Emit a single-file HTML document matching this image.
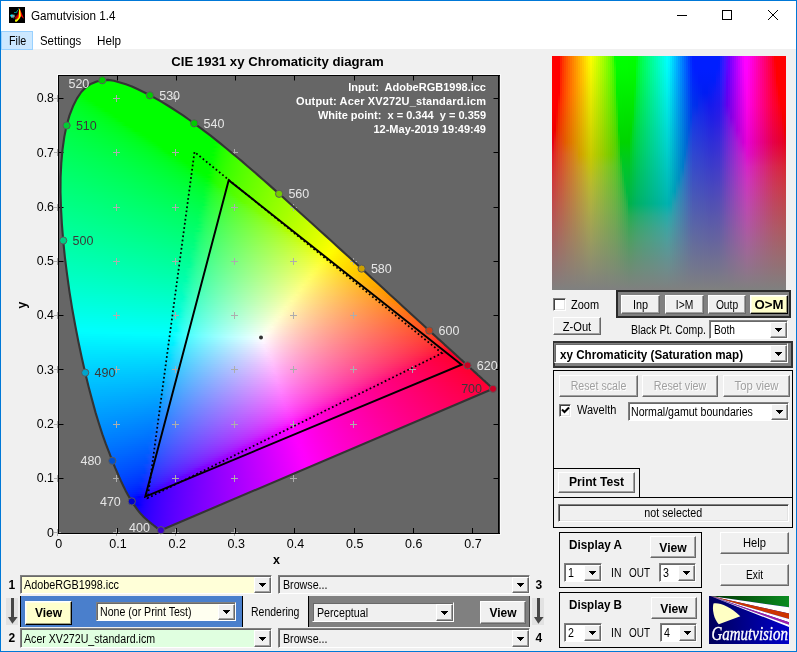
<!DOCTYPE html>
<html><head><meta charset="utf-8"><title>Gamutvision 1.4</title>
<style>
*{box-sizing:border-box;margin:0;padding:0}
html,body{width:797px;height:652px;overflow:hidden;background:#f0f0f0}
body{font-family:"Liberation Sans",sans-serif;font-size:11px;color:#000;position:relative}
#w{position:absolute;left:0;top:0;width:797px;height:652px;background:#f0f0f0;overflow:hidden;will-change:transform}
.a{position:absolute}
#w div,#w span,#w i,#w b,#w svg{position:absolute}
#tb{left:0;top:0;width:797px;height:31px;background:#fff}
#mb{left:0;top:31px;width:797px;height:18.2px;background:#fff}
.t{white-space:nowrap;line-height:1}
#fill{left:0;top:0;width:797px;height:652px;clip-path:polygon(160.9px 530.2px,160.8px 530.2px,160.8px 530.2px,160.7px 530.2px,160.7px 530.2px,160.6px 530.2px,160.6px 530.2px,160.5px 530.2px,160.5px 530.2px,160.4px 530.2px,160.3px 530.2px,160.2px 530.2px,160.2px 530.2px,160.1px 530.2px,160.0px 530.1px,159.9px 530.1px,159.7px 530.0px,159.6px 530.0px,159.4px 529.9px,159.3px 529.8px,159.1px 529.7px,158.9px 529.5px,158.7px 529.4px,158.5px 529.2px,158.3px 529.1px,158.0px 528.9px,157.7px 528.6px,157.4px 528.4px,157.1px 528.1px,156.7px 527.8px,156.4px 527.5px,156.0px 527.2px,155.6px 526.9px,155.2px 526.5px,154.7px 526.1px,154.2px 525.7px,153.6px 525.3px,153.0px 524.8px,152.4px 524.3px,151.7px 523.8px,151.0px 523.2px,150.2px 522.6px,149.4px 521.9px,148.6px 521.2px,147.7px 520.5px,146.7px 519.6px,145.7px 518.8px,144.6px 517.8px,143.5px 516.7px,142.4px 515.5px,141.2px 514.3px,139.9px 512.9px,138.5px 511.1px,137.0px 509.1px,135.4px 506.9px,133.6px 504.4px,131.8px 501.4px,129.8px 498.1px,127.7px 494.5px,125.5px 490.4px,123.2px 485.7px,120.7px 480.4px,118.1px 474.5px,115.3px 468.1px,112.3px 460.8px,109.2px 452.7px,105.8px 443.9px,102.4px 434.4px,99.0px 423.8px,95.5px 412.4px,92.1px 399.9px,88.6px 386.7px,85.2px 372.7px,81.8px 357.7px,78.4px 341.8px,75.2px 325.3px,72.2px 308.8px,69.5px 291.9px,67.1px 274.6px,64.9px 257.3px,63.2px 240.5px,61.9px 224.1px,61.0px 207.9px,60.5px 192.2px,60.6px 177.3px,61.3px 163.2px,62.5px 149.6px,64.3px 136.9px,66.6px 125.5px,69.5px 115.4px,73.0px 106.3px,77.0px 98.4px,81.3px 92.0px,86.1px 87.1px,91.3px 83.7px,96.7px 81.5px,102.3px 80.2px,108.0px 79.9px,113.9px 80.8px,119.9px 82.4px,125.9px 84.3px,131.9px 86.5px,137.9px 89.2px,144.0px 92.2px,149.9px 95.3px,155.6px 98.4px,161.3px 101.7px,166.9px 105.0px,172.5px 108.5px,178.0px 112.1px,183.4px 115.7px,188.8px 119.5px,194.2px 123.3px,199.6px 127.3px,204.9px 131.3px,210.3px 135.4px,215.6px 139.6px,220.9px 143.9px,226.2px 148.2px,231.5px 152.6px,236.8px 157.0px,242.1px 161.4px,247.3px 166.0px,252.6px 170.5px,257.9px 175.1px,263.2px 179.7px,268.5px 184.4px,273.8px 189.1px,279.1px 193.8px,284.4px 198.5px,289.6px 203.2px,294.9px 208.0px,300.1px 212.7px,305.4px 217.5px,310.7px 222.2px,315.9px 227.0px,321.1px 231.7px,326.3px 236.4px,331.4px 241.1px,336.5px 245.8px,341.6px 250.4px,346.7px 255.0px,351.7px 259.6px,356.6px 264.1px,361.6px 268.6px,366.4px 273.1px,371.2px 277.5px,376.0px 281.8px,380.7px 286.1px,385.3px 290.3px,389.8px 294.5px,394.3px 298.5px,398.7px 302.5px,402.9px 306.4px,407.1px 310.2px,411.1px 314.0px,415.0px 317.6px,418.8px 321.0px,422.4px 324.3px,425.9px 327.5px,429.3px 330.6px,432.6px 333.6px,435.8px 336.5px,438.9px 339.4px,441.9px 342.0px,444.6px 344.6px,447.3px 347.0px,449.8px 349.3px,452.3px 351.5px,454.6px 353.6px,456.7px 355.6px,458.8px 357.5px,460.7px 359.2px,462.6px 360.9px,464.3px 362.5px,465.9px 364.0px,467.5px 365.4px,468.9px 366.8px,470.3px 368.0px,471.6px 369.2px,472.9px 370.3px,474.0px 371.4px,475.1px 372.4px,476.2px 373.4px,477.2px 374.3px,478.1px 375.2px,479.1px 376.0px,479.9px 376.8px,480.8px 377.6px,481.6px 378.3px,482.3px 379.0px,483.1px 379.7px,483.7px 380.3px,484.4px 380.9px,485.0px 381.4px,485.6px 381.9px,486.1px 382.4px,486.6px 382.9px,487.1px 383.3px,487.5px 383.7px,487.9px 384.1px,488.3px 384.4px,488.6px 384.7px,488.9px 385.0px,489.2px 385.3px,489.5px 385.6px,489.8px 385.8px,490.0px 386.0px,490.2px 386.2px,490.5px 386.5px,490.9px 386.8px,491.2px 387.1px,491.4px 387.3px,491.7px 387.5px,491.9px 387.7px,492.1px 387.9px,492.3px 388.1px,492.5px 388.3px,492.7px 388.5px,492.9px 388.7px,493.0px 388.8px)}
#fill i{display:block;height:2px}
#sq i{display:block;top:0;height:234px}
.btn{background:#f0f0f0;border:1px solid;border-color:#fff #696969 #696969 #fff;box-shadow:inset -1px -1px 0 #a0a0a0,inset 1px 1px 0 #f0f0f0;text-align:center;white-space:nowrap}
.btn.y{background:#ffffcc;border-color:#fff #000 #000 #fff;box-shadow:inset -1px -1px 0 #a0a080,inset 1px 1px 0 #ffffe8}
.sunk{border:1px solid;border-color:#808080 #fff #fff #808080;box-shadow:inset 1px 1px 0 #404040,inset -1px -1px 0 #e3e3e3;background:#fff}
.dd{border:1px solid;border-color:#808080 #fff #fff #808080;box-shadow:inset 1px 1px 0 #696969;background:#fff;white-space:nowrap}
.dd .ar{right:0;top:1px;bottom:0;width:17px;background:#f0f0f0;border:1px solid;border-color:#fff #696969 #696969 #fff;box-shadow:inset -1px -1px 0 #a0a0a0}
.dd .ar:after{content:"";position:absolute;left:4px;top:50%;margin-top:-2px;width:7px;height:4px;background:linear-gradient(#000,#000) 0 0/7px 1px no-repeat,linear-gradient(#000,#000) 1px 1px/5px 1px no-repeat,linear-gradient(#000,#000) 2px 2px/3px 1px no-repeat,linear-gradient(#000,#000) 3px 3px/1px 1px no-repeat}
.dis{color:#a0a0a0;text-shadow:1px 1px 0 #fff}
.fr{border:1px solid #000}
</style></head>
<body><div id="w">
<div id="tb"></div><div id="mb"></div>
<svg style="left:9px;top:7px" width="16" height="16" viewBox="0 0 16 16"><rect width="16" height="16" fill="#000"/><path d="M9.6 3.8L9 7 7 9 5.2 11.3 7.6 12 9.6 9Z" fill="#a00000"/><path d="M10.3 .8L12.2 5 15 11.8 13.6 10.8 12 9 11 11 9 12.2 7 11.6 9 9 9.6 5Z" fill="#f00"/><path d="M10 2L11 2.5 11.6 6 11.8 9 10.6 11.5 8.5 14 7 15 6 14.2 6.2 12.6 8 12.2 9.6 10.4 10 7Z" fill="#ff0"/><path d="M5 5.2h2.2v.9H5zM7 4.5h1.2v.9H7zM8 3.3h1v1H8zM9 1.5h1.1v1H9z" fill="#00b4b4"/><ellipse cx="3.7" cy="9.1" rx="2.2" ry="1.6" fill="#989898"/><ellipse cx="2.5" cy="8.5" rx="1.3" ry=".9" fill="#00e8ff"/><path d="M2 10.2h1v.8H2zM4 10.6h1v.7H4zM4.6 7.4h.9v.7h-.9z" fill="#00a8b0"/></svg>
<span class="t" style="left:30.5px;top:10px;font-size:12px;transform-origin:0 0;transform:scaleX(0.975);">Gamutvision 1.4</span>
<svg style="left:670px;top:0" width="126" height="30" viewBox="-20 0 126 30"><g stroke="#000" stroke-width="1" fill="none"><path d="M-13 15.5h10"/><rect x="32.5" y="10.5" width="9" height="9"/><path d="M78 10l10 10M88 10l-10 10"/></g></svg>
<div style="left:1px;top:31px;width:32px;height:18.5px;background:#cce8ff;border:1px solid #99d1ff"></div>
<span class="t" style="left:8.5px;top:34.8px;font-size:12px;transform-origin:0 0;transform:scaleX(0.895);">File</span>
<span class="t" style="left:40.3px;top:34.8px;font-size:12px;transform-origin:0 0;transform:scaleX(0.952);">Settings</span>
<span class="t" style="left:96.6px;top:34.8px;font-size:12px;transform-origin:0 0;transform:scaleX(0.976);">Help</span>
<div style="left:58px;top:75px;width:442px;height:459px;background:#666;box-shadow:0 0 0 1px #fbfbfb"></div>
<div id="fill"><i style="left:105px;top:78px;width:5px;background:linear-gradient(90deg,#00ff00,#00ff00)"></i><i style="left:94px;top:80px;width:26px;background:linear-gradient(90deg,#00ff00,#00ff00,#00ff00,#00ff00,#00ff00)"></i><i style="left:89px;top:82px;width:37px;background:linear-gradient(90deg,#00ff00,#00ff00,#00ff00,#00ff00,#00ff00,#00ff00,#00ff00)"></i><i style="left:86px;top:84px;width:46px;background:linear-gradient(90deg,#00ff00,#00ff00,#00ff00,#00ff00,#00ff00,#00ff00,#00ff00,#00ff00,#00ff00)"></i><i style="left:84px;top:86px;width:53px;background:linear-gradient(90deg,#00ff00,#00ff00,#00ff00,#00ff00,#00ff00,#00ff00,#00ff00,#00ff00,#00ff00,#00ff00)"></i><i style="left:82px;top:88px;width:59px;background:linear-gradient(90deg,#00ff00,#00ff00,#00ff00,#00ff00,#00ff00,#00ff00,#00ff00,#00ff00,#00ff00,#00ff00,#00ff00)"></i><i style="left:80px;top:90px;width:65px;background:linear-gradient(90deg,#00ff00,#00ff00,#00ff00,#00ff00,#00ff00,#00ff00,#00ff00,#00ff00,#00ff00,#00ff00,#00ff00,#00ff00)"></i><i style="left:79px;top:92px;width:70px;background:linear-gradient(90deg,#00ff00,#00ff00,#00ff00,#00ff00,#00ff00,#00ff00,#00ff00,#00ff00,#00ff00,#00ff00,#00ff00,#00ff00,#00ff00)"></i><i style="left:77px;top:94px;width:76px;background:linear-gradient(90deg,#00ff0d,#00ff00,#00ff00,#00ff00,#00ff00,#00ff00,#00ff00,#00ff00,#00ff00,#00ff00,#00ff00,#00ff00,#00ff00,#00ff00)"></i><i style="left:76px;top:96px;width:80px;background:linear-gradient(90deg,#00ff14,#00ff07,#00ff00,#00ff00,#00ff00,#00ff00,#00ff00,#00ff00,#00ff00,#00ff00,#00ff00,#00ff00,#00ff00,#00ff00)"></i><i style="left:75px;top:98px;width:85px;background:linear-gradient(90deg,#00ff1a,#00ff11,#00ff00,#00ff00,#00ff00,#00ff00,#00ff00,#00ff00,#00ff00,#00ff00,#00ff00,#00ff00,#00ff00,#00ff00,#00ff00)"></i><i style="left:74px;top:100px;width:89px;background:linear-gradient(90deg,#00ff1e,#00ff17,#00ff0e,#00ff00,#00ff00,#00ff00,#00ff00,#00ff00,#00ff00,#00ff00,#00ff00,#00ff00,#00ff00,#00ff00,#00ff00,#00ff00)"></i><i style="left:73px;top:102px;width:94px;background:linear-gradient(90deg,#00ff22,#00ff1c,#00ff15,#00ff09,#00ff00,#00ff00,#00ff00,#00ff00,#00ff00,#00ff00,#00ff00,#00ff00,#00ff00,#00ff00,#00ff00,#00ff00,#00ff00)"></i><i style="left:72px;top:104px;width:98px;background:linear-gradient(90deg,#00ff26,#00ff20,#00ff1a,#00ff11,#00ff00,#00ff00,#00ff00,#00ff00,#00ff00,#00ff00,#00ff00,#00ff00,#00ff00,#00ff00,#00ff00,#00ff00,#00ff00)"></i><i style="left:71px;top:106px;width:102px;background:linear-gradient(90deg,#00ff2a,#00ff25,#00ff1f,#00ff18,#00ff0e,#00ff00,#00ff00,#00ff00,#00ff00,#00ff00,#00ff00,#00ff00,#00ff00,#00ff00,#00ff00,#00ff00,#00ff00,#00ff00)"></i><i style="left:70px;top:108px;width:106px;background:linear-gradient(90deg,#00ff2d,#00ff28,#00ff23,#00ff1d,#00ff16,#00ff0a,#00ff00,#00ff00,#00ff00,#00ff00,#00ff00,#00ff00,#00ff00,#00ff00,#00ff00,#00ff00,#00ff00,#00ff00,#00ff00)"></i><i style="left:69px;top:110px;width:110px;background:linear-gradient(90deg,#00ff30,#00ff2c,#00ff27,#00ff21,#00ff1a,#00ff11,#00ff00,#00ff00,#00ff00,#00ff00,#00ff00,#00ff00,#00ff00,#00ff00,#00ff00,#00ff00,#00ff00,#00ff00,#00ff00)"></i><i style="left:69px;top:112px;width:113px;background:linear-gradient(90deg,#00ff32,#00ff2e,#00ff2a,#00ff24,#00ff1e,#00ff17,#00ff0d,#00ff00,#00ff00,#00ff00,#00ff00,#00ff00,#00ff00,#00ff00,#00ff00,#00ff00,#00ff00,#00ff00,#00ff00,#00ff00)"></i><i style="left:68px;top:114px;width:117px;background:linear-gradient(90deg,#00ff35,#00ff31,#00ff2d,#00ff28,#00ff23,#00ff1d,#00ff15,#00ff09,#00ff00,#00ff00,#00ff00,#00ff00,#00ff00,#00ff00,#00ff00,#00ff00,#00ff00,#00ff00,#00ff00,#00ff00,#00ff00)"></i><i style="left:67px;top:116px;width:121px;background:linear-gradient(90deg,#00ff38,#00ff34,#00ff30,#00ff2b,#00ff26,#00ff20,#00ff19,#00ff10,#00ff00,#00ff00,#00ff00,#00ff00,#00ff00,#00ff00,#00ff00,#00ff00,#00ff00,#00ff00,#00ff00,#00ff00,#00ff00)"></i><i style="left:67px;top:118px;width:124px;background:linear-gradient(90deg,#00ff3a,#00ff36,#00ff33,#00ff2e,#00ff2a,#00ff24,#00ff1e,#00ff17,#00ff0c,#00ff00,#00ff00,#00ff00,#00ff00,#00ff00,#00ff00,#00ff00,#00ff00,#00ff00,#00ff00,#00ff00,#00ff00,#00ff00)"></i><i style="left:66px;top:120px;width:128px;background:linear-gradient(90deg,#00ff3d,#00ff39,#00ff35,#00ff31,#00ff2c,#00ff27,#00ff22,#00ff1b,#00ff11,#00ff00,#00ff00,#00ff00,#00ff00,#00ff00,#00ff00,#00ff00,#00ff00,#00ff00,#00ff00,#00ff00,#00ff00,#00ff00)"></i><i style="left:66px;top:122px;width:131px;background:linear-gradient(90deg,#00ff3f,#00ff3b,#00ff38,#00ff34,#00ff2f,#00ff2b,#00ff26,#00ff1f,#00ff18,#00ff0e,#00ff00,#00ff00,#00ff00,#00ff00,#00ff00,#00ff00,#00ff00,#00ff00,#00ff00,#00ff00,#00ff00,#00ff00,#00ff00)"></i><i style="left:65px;top:124px;width:134px;background:linear-gradient(90deg,#00ff41,#00ff3e,#00ff3a,#00ff36,#00ff32,#00ff2e,#00ff29,#00ff23,#00ff1c,#00ff13,#00ff00,#00ff00,#00ff00,#00ff00,#00ff00,#00ff00,#00ff00,#00ff00,#00ff00,#00ff00,#00ff00,#00ff00,#00ff00)"></i><i style="left:65px;top:126px;width:137px;background:linear-gradient(90deg,#00ff43,#00ff40,#00ff3d,#00ff39,#00ff35,#00ff31,#00ff2c,#00ff27,#00ff21,#00ff1a,#00ff10,#00ff00,#00ff00,#00ff00,#00ff00,#00ff00,#00ff00,#00ff00,#00ff00,#00ff00,#00ff00,#00ff00,#00ff00,#00ff00)"></i><i style="left:64px;top:128px;width:141px;background:linear-gradient(90deg,#00ff46,#00ff43,#00ff3f,#00ff3c,#00ff38,#00ff34,#00ff30,#00ff2b,#00ff26,#00ff20,#00ff18,#00ff0e,#00ff00,#00ff00,#00ff00,#00ff00,#00ff00,#00ff00,#00ff00,#00ff00,#00ff00,#00ff00,#00ff00,#00ff00,#00ff00)"></i><i style="left:64px;top:130px;width:143px;background:linear-gradient(90deg,#00ff47,#00ff44,#00ff41,#00ff3e,#00ff3a,#00ff36,#00ff32,#00ff2d,#00ff28,#00ff22,#00ff1c,#00ff12,#00ff00,#00ff00,#00ff00,#00ff00,#00ff00,#00ff00,#00ff00,#00ff00,#00ff00,#00ff00,#00ff00,#00ff00,#00ff00)"></i><i style="left:63px;top:132px;width:147px;background:linear-gradient(90deg,#00ff4a,#00ff47,#00ff44,#00ff40,#00ff3d,#00ff39,#00ff34,#00ff30,#00ff2b,#00ff25,#00ff1f,#00ff16,#00ff09,#00ff00,#00ff00,#00ff00,#00ff00,#00ff00,#00ff00,#00ff00,#00ff00,#00ff00,#00ff00,#00ff00,#00ff00)"></i><i style="left:63px;top:134px;width:149px;background:linear-gradient(90deg,#00ff4c,#00ff49,#00ff46,#00ff42,#00ff3f,#00ff3b,#00ff38,#00ff33,#00ff2f,#00ff2a,#00ff24,#00ff1d,#00ff15,#00ff05,#00ff00,#00ff00,#00ff00,#00ff00,#00ff00,#00ff00,#00ff00,#00ff00,#00ff00,#00ff00,#00ff00,#00ff00)"></i><i style="left:63px;top:136px;width:152px;background:linear-gradient(90deg,#00ff4d,#00ff4a,#00ff47,#00ff44,#00ff41,#00ff3d,#00ff39,#00ff35,#00ff31,#00ff2c,#00ff26,#00ff1f,#00ff17,#00ff0b,#00ff00,#00ff00,#00ff00,#00ff00,#00ff00,#00ff00,#00ff00,#00ff00,#00ff00,#00ff00,#00ff00,#00ff00)"></i><i style="left:62px;top:138px;width:156px;background:linear-gradient(90deg,#00ff50,#00ff4d,#00ff4a,#00ff47,#00ff44,#00ff40,#00ff3d,#00ff39,#00ff34,#00ff30,#00ff2b,#00ff25,#00ff1e,#00ff16,#00ff08,#00ff00,#00ff00,#00ff00,#00ff00,#00ff00,#00ff00,#00ff00,#00ff00,#00ff00,#00ff00,#00ff00,#00ff00)"></i><i style="left:62px;top:140px;width:158px;background:linear-gradient(90deg,#00ff51,#00ff4f,#00ff4c,#00ff49,#00ff45,#00ff42,#00ff3e,#00ff3b,#00ff36,#00ff32,#00ff2d,#00ff27,#00ff21,#00ff19,#00ff0e,#00ff00,#00ff00,#00ff00,#00ff00,#00ff00,#00ff00,#00ff00,#00ff00,#00ff00,#00ff00,#00ff00,#13ff00)"></i><i style="left:62px;top:142px;width:161px;background:linear-gradient(90deg,#00ff53,#00ff50,#00ff4e,#00ff4b,#00ff48,#00ff44,#00ff41,#00ff3d,#00ff39,#00ff35,#00ff31,#00ff2c,#00ff26,#00ff1f,#00ff17,#00ff0a,#00ff00,#00ff00,#00ff00,#00ff00,#00ff00,#00ff00,#00ff00,#00ff00,#00ff00,#00ff00,#00ff00,#1fff00)"></i><i style="left:62px;top:144px;width:163px;background:linear-gradient(90deg,#00ff55,#00ff52,#00ff4f,#00ff4c,#00ff49,#00ff46,#00ff43,#00ff3f,#00ff3b,#00ff37,#00ff33,#00ff2e,#00ff28,#00ff22,#00ff1a,#00ff0f,#00ff00,#00ff00,#00ff00,#00ff00,#00ff00,#00ff00,#00ff00,#00ff00,#00ff00,#00ff00,#12ff00,#26ff00)"></i><i style="left:61px;top:146px;width:166px;background:linear-gradient(90deg,#00ff57,#00ff54,#00ff52,#00ff4f,#00ff4c,#00ff49,#00ff46,#00ff42,#00ff3f,#00ff3b,#00ff37,#00ff32,#00ff2d,#00ff28,#00ff22,#00ff1a,#00ff0f,#00ff00,#00ff00,#00ff00,#00ff00,#00ff00,#00ff00,#00ff00,#00ff00,#00ff00,#00ff00,#1cff00,#2cff00)"></i><i style="left:61px;top:148px;width:169px;background:linear-gradient(90deg,#00ff59,#00ff56,#00ff53,#00ff51,#00ff4e,#00ff4b,#00ff48,#00ff44,#00ff41,#00ff3d,#00ff39,#00ff34,#00ff2f,#00ff2a,#00ff24,#00ff1c,#00ff12,#00ff00,#00ff00,#00ff00,#00ff00,#00ff00,#00ff00,#00ff00,#00ff00,#00ff00,#12ff00,#26ff00,#34ff00)"></i><i style="left:61px;top:150px;width:171px;background:linear-gradient(90deg,#00ff5a,#00ff58,#00ff55,#00ff52,#00ff4f,#00ff4c,#00ff49,#00ff46,#00ff42,#00ff3f,#00ff3b,#00ff36,#00ff31,#00ff2c,#00ff26,#00ff1f,#00ff16,#00ff05,#00ff00,#00ff00,#00ff00,#00ff00,#00ff00,#00ff00,#00ff00,#00ff00,#1bff00,#2cff00,#39ff00)"></i><i style="left:61px;top:152px;width:174px;background:linear-gradient(90deg,#00ff5c,#00ff5a,#00ff57,#00ff54,#00ff52,#00ff4f,#00ff4c,#00ff48,#00ff45,#00ff41,#00ff3e,#00ff3a,#00ff35,#00ff30,#00ff2b,#00ff25,#00ff1d,#00ff13,#00ff00,#00ff00,#00ff00,#00ff00,#00ff00,#00ff00,#00ff00,#00ff00,#12ff00,#26ff00,#34ff00,#3fff00)"></i><i style="left:60px;top:154px;width:177px;background:linear-gradient(90deg,#00ff5e,#00ff5c,#00ff59,#00ff57,#00ff54,#00ff51,#00ff4e,#00ff4b,#00ff48,#00ff45,#00ff41,#00ff3d,#00ff39,#00ff35,#00ff30,#00ff2b,#00ff24,#00ff1d,#00ff13,#00ff00,#00ff00,#00ff00,#00ff00,#00ff00,#00ff00,#00ff00,#00ff00,#1dff00,#2dff00,#39ff00,#44ff00)"></i><i style="left:60px;top:156px;width:179px;background:linear-gradient(90deg,#00ff60,#00ff5d,#00ff5b,#00ff58,#00ff56,#00ff53,#00ff50,#00ff4d,#00ff4a,#00ff47,#00ff43,#00ff3f,#00ff3b,#00ff37,#00ff32,#00ff2d,#00ff27,#00ff20,#00ff17,#00ff08,#00ff00,#00ff00,#00ff00,#00ff00,#00ff00,#00ff00,#0cff00,#23ff00,#32ff00,#3eff00,#48ff00)"></i><i style="left:60px;top:158px;width:182px;background:linear-gradient(90deg,#00ff61,#00ff5f,#00ff5d,#00ff5a,#00ff57,#00ff55,#00ff52,#00ff4f,#00ff4c,#00ff48,#00ff45,#00ff41,#00ff3d,#00ff38,#00ff34,#00ff2e,#00ff28,#00ff22,#00ff19,#00ff0c,#00ff00,#00ff00,#00ff00,#00ff00,#00ff00,#00ff00,#1aff00,#2cff00,#39ff00,#44ff00,#4eff00)"></i><i style="left:60px;top:160px;width:184px;background:linear-gradient(90deg,#00ff63,#00ff61,#00ff5e,#00ff5c,#00ff59,#00ff57,#00ff54,#00ff51,#00ff4e,#00ff4b,#00ff48,#00ff44,#00ff40,#00ff3c,#00ff38,#00ff33,#00ff2e,#00ff28,#00ff21,#00ff18,#00ff0b,#00ff00,#00ff00,#00ff00,#00ff00,#00ff00,#0cff00,#24ff00,#32ff00,#3eff00,#48ff00,#52ff00)"></i><i style="left:60px;top:162px;width:187px;background:linear-gradient(90deg,#00ff65,#00ff62,#00ff60,#00ff5e,#00ff5b,#00ff58,#00ff56,#00ff53,#00ff50,#00ff4c,#00ff49,#00ff46,#00ff42,#00ff3e,#00ff39,#00ff35,#00ff2f,#00ff2a,#00ff23,#00ff1a,#00ff0e,#00ff00,#00ff00,#00ff00,#00ff00,#00ff00,#1aff00,#2cff00,#39ff00,#44ff00,#4eff00,#57ff00)"></i><i style="left:60px;top:164px;width:189px;background:linear-gradient(90deg,#00ff66,#00ff64,#00ff62,#00ff5f,#00ff5d,#00ff5a,#00ff58,#00ff55,#00ff52,#00ff4f,#00ff4c,#00ff49,#00ff45,#00ff41,#00ff3d,#00ff39,#00ff34,#00ff2f,#00ff29,#00ff22,#00ff1a,#00ff0d,#00ff00,#00ff00,#00ff00,#00ff00,#0dff00,#24ff00,#33ff00,#3fff00,#49ff00,#52ff00,#5bff00)"></i><i style="left:60px;top:166px;width:191px;background:linear-gradient(90deg,#00ff68,#00ff66,#00ff63,#00ff61,#00ff5f,#00ff5c,#00ff59,#00ff57,#00ff54,#00ff51,#00ff4e,#00ff4a,#00ff47,#00ff43,#00ff3f,#00ff3b,#00ff36,#00ff31,#00ff2b,#00ff25,#00ff1d,#00ff12,#00ff00,#00ff00,#00ff00,#00ff00,#18ff00,#2aff00,#38ff00,#43ff00,#4dff00,#56ff00,#5fff00)"></i><i style="left:59px;top:168px;width:195px;background:linear-gradient(90deg,#00ff6a,#00ff68,#00ff65,#00ff63,#00ff61,#00ff5e,#00ff5b,#00ff59,#00ff56,#00ff53,#00ff50,#00ff4c,#00ff49,#00ff45,#00ff41,#00ff3d,#00ff38,#00ff33,#00ff2d,#00ff27,#00ff1f,#00ff15,#00ff00,#00ff00,#00ff00,#00ff00,#21ff00,#31ff00,#3dff00,#48ff00,#52ff00,#5bff00,#64ff00)"></i><i style="left:59px;top:170px;width:197px;background:linear-gradient(90deg,#00ff6b,#00ff69,#00ff67,#00ff65,#00ff63,#00ff60,#00ff5e,#00ff5b,#00ff58,#00ff55,#00ff52,#00ff4f,#00ff4c,#00ff48,#00ff45,#00ff41,#00ff3c,#00ff38,#00ff33,#00ff2d,#00ff26,#00ff1f,#00ff15,#00ff00,#00ff00,#00ff00,#17ff00,#2aff00,#38ff00,#43ff00,#4dff00,#57ff00,#5fff00,#67ff00)"></i><i style="left:59px;top:172px;width:199px;background:linear-gradient(90deg,#00ff6d,#00ff6b,#00ff69,#00ff67,#00ff64,#00ff62,#00ff5f,#00ff5d,#00ff5a,#00ff57,#00ff54,#00ff51,#00ff4e,#00ff4a,#00ff46,#00ff42,#00ff3e,#00ff3a,#00ff35,#00ff2f,#00ff29,#00ff21,#00ff18,#00ff08,#00ff00,#00ff00,#1fff00,#2fff00,#3cff00,#47ff00,#51ff00,#5aff00,#63ff00,#6bff00)"></i><i style="left:59px;top:174px;width:201px;background:linear-gradient(90deg,#00ff6f,#00ff6d,#00ff6b,#00ff68,#00ff66,#00ff64,#00ff61,#00ff5f,#00ff5c,#00ff59,#00ff57,#00ff54,#00ff50,#00ff4d,#00ff4a,#00ff46,#00ff42,#00ff3e,#00ff39,#00ff34,#00ff2f,#00ff28,#00ff21,#00ff18,#00ff08,#00ff00,#15ff00,#29ff00,#36ff00,#42ff00,#4cff00,#56ff00,#5fff00,#67ff00,#6fff00)"></i><i style="left:59px;top:176px;width:204px;background:linear-gradient(90deg,#00ff70,#00ff6e,#00ff6c,#00ff6a,#00ff68,#00ff65,#00ff63,#00ff60,#00ff5e,#00ff5b,#00ff58,#00ff55,#00ff52,#00ff4f,#00ff4b,#00ff48,#00ff44,#00ff3f,#00ff3b,#00ff36,#00ff30,#00ff2a,#00ff23,#00ff1a,#00ff0b,#00ff00,#1fff00,#30ff00,#3dff00,#48ff00,#52ff00,#5bff00,#63ff00,#6cff00,#74ff00)"></i><i style="left:59px;top:178px;width:206px;background:linear-gradient(90deg,#00ff72,#00ff70,#00ff6e,#00ff6c,#00ff69,#00ff67,#00ff65,#00ff62,#00ff5f,#00ff5d,#00ff5a,#00ff57,#00ff54,#00ff50,#00ff4d,#00ff49,#00ff45,#00ff41,#00ff3d,#00ff38,#00ff32,#00ff2c,#00ff25,#00ff1d,#00ff10,#0dff00,#25ff00,#35ff00,#41ff00,#4cff00,#55ff00,#5fff00,#67ff00,#6fff00,#77ff00)"></i><i style="left:59px;top:180px;width:208px;background:linear-gradient(90deg,#00ff74,#00ff72,#00ff6f,#00ff6d,#00ff6b,#00ff69,#00ff67,#00ff64,#00ff62,#00ff5f,#00ff5c,#00ff59,#00ff57,#00ff53,#00ff50,#00ff4d,#00ff49,#00ff45,#00ff41,#00ff3c,#00ff38,#00ff32,#00ff2c,#00ff25,#00ff1c,#00ff10,#1dff00,#2eff00,#3cff00,#47ff00,#51ff00,#5aff00,#63ff00,#6bff00,#73ff00,#7bff00)"></i><i style="left:59px;top:182px;width:211px;background:linear-gradient(90deg,#00ff75,#00ff73,#00ff71,#00ff6f,#00ff6d,#00ff6b,#00ff68,#00ff66,#00ff63,#00ff61,#00ff5e,#00ff5b,#00ff58,#00ff55,#00ff52,#00ff4e,#00ff4a,#00ff47,#00ff42,#00ff3e,#00ff39,#00ff34,#00ff2e,#00ff27,#00ff1e,#0eff13,#26ff00,#35ff00,#41ff00,#4cff00,#56ff00,#5fff00,#68ff00,#70ff00,#78ff00,#7fff00)"></i><i style="left:59px;top:184px;width:213px;background:linear-gradient(90deg,#00ff77,#00ff75,#00ff73,#00ff71,#00ff6f,#00ff6c,#00ff6a,#00ff68,#00ff65,#00ff63,#00ff60,#00ff5e,#00ff5b,#00ff58,#00ff55,#00ff51,#00ff4e,#00ff4a,#00ff46,#00ff42,#00ff3e,#00ff39,#00ff33,#00ff2d,#00ff26,#00ff1e,#1eff13,#2fff00,#3cff00,#48ff00,#52ff00,#5bff00,#64ff00,#6cff00,#74ff00,#7cff00,#83ff00)"></i><i style="left:59px;top:186px;width:215px;background:linear-gradient(90deg,#00ff78,#00ff76,#00ff74,#00ff72,#00ff70,#00ff6e,#00ff6c,#00ff6a,#00ff67,#00ff65,#00ff62,#00ff5f,#00ff5c,#00ff59,#00ff56,#00ff53,#00ff50,#00ff4c,#00ff48,#00ff44,#00ff40,#00ff3b,#00ff36,#00ff30,#00ff29,#0aff21,#25ff16,#34ff00,#40ff00,#4bff00,#55ff00,#5fff00,#67ff00,#6fff00,#77ff00,#7fff00,#87ff00)"></i><i style="left:59px;top:188px;width:217px;background:linear-gradient(90deg,#00ff7a,#00ff78,#00ff76,#00ff74,#00ff72,#00ff70,#00ff6e,#00ff6b,#00ff69,#00ff66,#00ff64,#00ff61,#00ff5e,#00ff5b,#00ff58,#00ff55,#00ff51,#00ff4e,#00ff4a,#00ff46,#00ff41,#00ff3d,#00ff38,#00ff32,#00ff2b,#15ff23,#2aff1a,#38ff0a,#45ff00,#4fff00,#59ff00,#62ff00,#6bff00,#73ff00,#7bff00,#83ff00,#8aff00)"></i><i style="left:59px;top:190px;width:220px;background:linear-gradient(90deg,#00ff7c,#00ff7a,#00ff78,#00ff76,#00ff74,#00ff72,#00ff6f,#00ff6d,#00ff6b,#00ff68,#00ff66,#00ff63,#00ff61,#00ff5e,#00ff5b,#00ff58,#00ff54,#00ff51,#00ff4d,#00ff4a,#00ff45,#00ff41,#00ff3c,#00ff37,#00ff31,#0cff2a,#25ff22,#35ff18,#41ff06,#4cff00,#56ff00,#5fff00,#68ff00,#70ff00,#78ff00,#80ff00,#88ff00,#8fff00)"></i><i style="left:59px;top:192px;width:222px;background:linear-gradient(90deg,#00ff7d,#00ff7b,#00ff79,#00ff77,#00ff75,#00ff73,#00ff71,#00ff6f,#00ff6d,#00ff6a,#00ff68,#00ff65,#00ff62,#00ff5f,#00ff5d,#00ff59,#00ff56,#00ff53,#00ff4f,#00ff4b,#00ff47,#00ff43,#00ff3e,#00ff39,#00ff33,#16ff2d,#2bff25,#39ff1c,#45ff0d,#50ff00,#5aff00,#63ff00,#6cff00,#74ff00,#7cff00,#84ff00,#8bff00,#92ff00)"></i><i style="left:59px;top:194px;width:224px;background:linear-gradient(90deg,#00ff7f,#00ff7d,#00ff7b,#00ff79,#00ff77,#00ff75,#00ff73,#00ff71,#00ff6e,#00ff6c,#00ff69,#00ff67,#00ff64,#00ff61,#00ff5e,#00ff5b,#00ff58,#00ff55,#00ff51,#00ff4d,#00ff49,#00ff45,#00ff40,#00ff3b,#00ff35,#1eff2f,#30ff28,#3dff1f,#49ff12,#54ff00,#5dff00,#66ff00,#6fff00,#77ff00,#7fff00,#87ff00,#8fff00,#96ff00)"></i><i style="left:59px;top:196px;width:226px;background:linear-gradient(90deg,#00ff80,#00ff7f,#00ff7d,#00ff7b,#00ff79,#00ff77,#00ff75,#00ff73,#00ff70,#00ff6e,#00ff6c,#00ff69,#00ff67,#00ff64,#00ff61,#00ff5e,#00ff5b,#00ff58,#00ff54,#00ff51,#00ff4d,#00ff49,#00ff45,#00ff40,#00ff3b,#14ff35,#2aff2f,#38ff28,#45ff1f,#4fff12,#59ff00,#62ff00,#6bff00,#74ff00,#7cff00,#83ff00,#8bff00,#92ff00,#9aff00)"></i><i style="left:59px;top:198px;width:229px;background:linear-gradient(90deg,#00ff82,#00ff80,#00ff7e,#00ff7c,#00ff7a,#00ff78,#00ff76,#00ff74,#00ff72,#00ff70,#00ff6d,#00ff6b,#00ff68,#00ff65,#00ff63,#00ff60,#00ff5d,#00ff59,#00ff56,#00ff52,#00ff4f,#00ff4a,#00ff46,#00ff41,#00ff3c,#1fff37,#30ff30,#3eff29,#4aff20,#54ff14,#5eff00,#67ff00,#70ff00,#78ff00,#80ff00,#88ff00,#90ff00,#97ff00,#9eff00)"></i><i style="left:59px;top:200px;width:231px;background:linear-gradient(90deg,#00ff84,#00ff82,#00ff80,#00ff7e,#00ff7c,#00ff7a,#00ff78,#00ff76,#00ff74,#00ff71,#00ff6f,#00ff6c,#00ff6a,#00ff67,#00ff64,#00ff61,#00ff5e,#00ff5b,#00ff58,#00ff54,#00ff50,#00ff4c,#00ff48,#00ff43,#07ff3e,#25ff39,#35ff33,#42ff2b,#4eff23,#58ff18,#62ff00,#6bff00,#73ff00,#7cff00,#84ff00,#8bff00,#93ff00,#9bff00,#a2ff00)"></i><i style="left:59px;top:202px;width:233px;background:linear-gradient(90deg,#00ff85,#00ff83,#00ff82,#00ff80,#00ff7e,#00ff7c,#00ff7a,#00ff78,#00ff76,#00ff73,#00ff71,#00ff6f,#00ff6c,#00ff6a,#00ff67,#00ff64,#00ff61,#00ff5e,#00ff5b,#00ff58,#00ff54,#00ff50,#00ff4c,#00ff48,#00ff43,#1dff3e,#30ff39,#3dff33,#49ff2c,#54ff23,#5eff18,#67ff01,#70ff00,#78ff00,#80ff00,#88ff00,#90ff00,#97ff00,#9eff00,#a6ff00)"></i><i style="left:59px;top:204px;width:235px;background:linear-gradient(90deg,#00ff87,#00ff85,#00ff83,#00ff81,#00ff80,#00ff7e,#00ff7c,#00ff7a,#00ff77,#00ff75,#00ff73,#00ff70,#00ff6e,#00ff6b,#00ff69,#00ff66,#00ff63,#00ff60,#00ff5d,#00ff59,#00ff56,#00ff52,#00ff4e,#00ff4a,#00ff45,#23ff40,#34ff3b,#41ff35,#4dff2e,#57ff26,#61ff1c,#6aff0c,#73ff00,#7bff00,#83ff00,#8bff00,#93ff00,#9bff00,#a2ff00,#a9ff00)"></i><i style="left:59px;top:206px;width:237px;background:linear-gradient(90deg,#00ff88,#00ff87,#00ff85,#00ff83,#00ff81,#00ff80,#00ff7e,#00ff7c,#00ff79,#00ff77,#00ff75,#00ff73,#00ff70,#00ff6e,#00ff6b,#00ff69,#00ff66,#00ff63,#00ff60,#00ff5d,#00ff5a,#00ff56,#00ff52,#00ff4e,#00ff4a,#1cff45,#2fff40,#3dff3b,#49ff35,#54ff2e,#5dff26,#67ff1c,#6fff0d,#78ff00,#80ff00,#88ff00,#90ff00,#97ff00,#9fff00,#a6ff00,#adff00)"></i><i style="left:59px;top:208px;width:240px;background:linear-gradient(90deg,#00ff8a,#00ff88,#00ff87,#00ff85,#00ff83,#00ff81,#00ff7f,#00ff7d,#00ff7b,#00ff79,#00ff77,#00ff74,#00ff72,#00ff70,#00ff6d,#00ff6a,#00ff68,#00ff65,#00ff62,#00ff5e,#00ff5b,#00ff57,#00ff54,#00ff50,#05ff4b,#25ff47,#35ff42,#42ff3c,#4eff36,#58ff30,#62ff28,#6bff1e,#74ff0f,#7cff00,#85ff00,#8dff00,#94ff00,#9cff00,#a3ff00,#abff00,#b2ff00)"></i><i style="left:60px;top:210px;width:241px;background:linear-gradient(90deg,#00ff8b,#00ff8a,#00ff88,#00ff86,#00ff84,#00ff83,#00ff81,#00ff7f,#00ff7d,#00ff7a,#00ff78,#00ff76,#00ff73,#00ff71,#00ff6e,#00ff6c,#00ff69,#00ff66,#00ff63,#00ff60,#00ff5d,#00ff59,#00ff55,#00ff51,#15ff4d,#2bff49,#3aff44,#47ff3e,#52ff38,#5cff32,#66ff2a,#6fff20,#78ff13,#80ff00,#88ff00,#90ff00,#98ff00,#a0ff00,#a7ff00,#afff00,#b6ff00)"></i><i style="left:60px;top:212px;width:243px;background:linear-gradient(90deg,#00ff8d,#00ff8b,#00ff8a,#00ff88,#00ff86,#00ff84,#00ff82,#00ff80,#00ff7e,#00ff7c,#00ff7a,#00ff78,#00ff75,#00ff73,#00ff70,#00ff6e,#00ff6b,#00ff68,#00ff65,#00ff62,#00ff5e,#00ff5b,#00ff57,#00ff53,#1cff4f,#30ff4a,#3eff46,#4bff40,#56ff3a,#60ff34,#69ff2c,#72ff23,#7bff17,#83ff00,#8cff00,#94ff00,#9bff00,#a3ff00,#abff00,#b2ff00,#baff00)"></i><i style="left:60px;top:214px;width:245px;background:linear-gradient(90deg,#00ff8f,#00ff8d,#00ff8b,#00ff8a,#00ff88,#00ff86,#00ff84,#00ff82,#00ff80,#00ff7e,#00ff7c,#00ff7a,#00ff78,#00ff75,#00ff73,#00ff70,#00ff6e,#00ff6b,#00ff68,#00ff65,#00ff62,#00ff5e,#00ff5b,#00ff57,#13ff53,#2aff4f,#3aff4b,#47ff46,#52ff41,#5cff3b,#66ff34,#6fff2d,#78ff24,#80ff18,#88ff00,#90ff00,#98ff00,#a0ff00,#a7ff00,#afff00,#b6ff00,#beff00)"></i><i style="left:60px;top:216px;width:247px;background:linear-gradient(90deg,#00ff90,#00ff8f,#00ff8d,#00ff8b,#00ff8a,#00ff88,#00ff86,#00ff84,#00ff82,#00ff80,#00ff7e,#00ff7c,#00ff79,#00ff77,#00ff75,#00ff72,#00ff6f,#00ff6d,#00ff6a,#00ff67,#00ff64,#00ff60,#00ff5d,#00ff59,#1bff55,#2fff51,#3eff4d,#4aff48,#55ff43,#60ff3d,#69ff36,#72ff2f,#7bff26,#84ff1b,#8cff08,#94ff00,#9cff00,#a3ff00,#abff00,#b3ff00,#baff00,#c2ff00)"></i><i style="left:60px;top:218px;width:250px;background:linear-gradient(90deg,#00ff92,#00ff90,#00ff8f,#00ff8d,#00ff8b,#00ff8a,#00ff88,#00ff86,#00ff84,#00ff82,#00ff80,#00ff7e,#00ff7c,#00ff79,#00ff77,#00ff75,#00ff72,#00ff6f,#00ff6d,#00ff6a,#00ff67,#00ff64,#00ff60,#00ff5d,#15ff59,#2bff55,#3bff51,#48ff4c,#53ff48,#5dff42,#67ff3c,#70ff36,#79ff2f,#81ff26,#8aff1a,#92ff04,#9aff00,#a1ff00,#a9ff00,#b0ff00,#b8ff00,#bfff00,#c7ff00)"></i><i style="left:60px;top:220px;width:252px;background:linear-gradient(90deg,#00ff94,#00ff92,#00ff90,#00ff8f,#00ff8d,#00ff8b,#00ff8a,#00ff88,#00ff86,#00ff84,#00ff82,#00ff80,#00ff7d,#00ff7b,#00ff79,#00ff76,#00ff74,#00ff71,#00ff6e,#00ff6c,#00ff69,#00ff65,#00ff62,#00ff5f,#1dff5b,#30ff57,#3fff53,#4bff4e,#56ff4a,#61ff44,#6aff3f,#73ff38,#7cff31,#85ff28,#8dff1e,#95ff0d,#9dff00,#a5ff00,#adff00,#b4ff00,#bcff00,#c3ff00,#cbff00)"></i><i style="left:60px;top:222px;width:254px;background:linear-gradient(90deg,#00ff95,#00ff94,#00ff92,#00ff90,#00ff8f,#00ff8d,#00ff8b,#00ff89,#00ff87,#00ff85,#00ff83,#00ff81,#00ff7f,#00ff7d,#00ff7b,#00ff78,#00ff76,#00ff73,#00ff70,#00ff6d,#00ff6a,#00ff67,#00ff64,#00ff60,#23ff5d,#35ff59,#43ff55,#4fff50,#5aff4c,#64ff46,#6eff41,#77ff3a,#80ff33,#88ff2b,#90ff21,#99ff12,#a1ff00,#a8ff00,#b0ff00,#b8ff00,#c0ff00,#c7ff00,#cfff00)"></i><i style="left:60px;top:224px;width:256px;background:linear-gradient(90deg,#00ff97,#00ff95,#00ff94,#00ff92,#00ff91,#00ff8f,#00ff8d,#00ff8b,#00ff8a,#00ff88,#00ff86,#00ff84,#00ff82,#00ff7f,#00ff7d,#00ff7b,#00ff78,#00ff76,#00ff73,#00ff70,#00ff6e,#00ff6b,#00ff67,#00ff64,#1cff61,#30ff5d,#3fff59,#4bff55,#56ff51,#61ff4c,#6aff47,#74ff41,#7cff3b,#85ff34,#8dff2c,#95ff22,#9dff13,#a5ff00,#adff00,#b5ff00,#bcff00,#c4ff00,#cbff00,#d3ff00)"></i><i style="left:61px;top:226px;width:258px;background:linear-gradient(90deg,#00ff98,#00ff97,#00ff95,#00ff94,#00ff92,#00ff90,#00ff8f,#00ff8d,#00ff8b,#00ff89,#00ff87,#00ff85,#00ff83,#00ff81,#00ff7f,#00ff7c,#00ff7a,#00ff77,#00ff75,#00ff72,#00ff6f,#00ff6c,#00ff69,#04ff65,#26ff62,#37ff5e,#45ff5a,#51ff56,#5cff52,#66ff4d,#6fff48,#78ff42,#81ff3c,#8aff35,#92ff2d,#9aff23,#a2ff15,#aaff00,#b2ff00,#baff00,#c1ff00,#c9ff00,#d1ff00,#d8ff00)"></i><i style="left:61px;top:228px;width:260px;background:linear-gradient(90deg,#00ff9a,#00ff99,#00ff97,#00ff95,#00ff94,#00ff92,#00ff90,#00ff8f,#00ff8d,#00ff8b,#00ff89,#00ff87,#00ff85,#00ff83,#00ff80,#00ff7e,#00ff7c,#00ff79,#00ff76,#00ff74,#00ff71,#00ff6e,#00ff6b,#12ff67,#2bff64,#3bff60,#48ff5c,#54ff58,#5fff54,#69ff4f,#73ff4a,#7cff44,#85ff3e,#8dff37,#96ff2f,#9eff26,#a6ff19,#aeff00,#b6ff00,#beff00,#c5ff00,#cdff00,#d5ff00,#ddff00)"></i><i style="left:61px;top:230px;width:262px;background:linear-gradient(90deg,#00ff9c,#00ff9a,#00ff99,#00ff97,#00ff96,#00ff94,#00ff92,#00ff91,#00ff8f,#00ff8d,#00ff8b,#00ff89,#00ff87,#00ff85,#00ff83,#00ff81,#00ff7e,#00ff7c,#00ff79,#00ff77,#00ff74,#00ff71,#00ff6e,#00ff6b,#25ff68,#37ff64,#45ff61,#51ff5d,#5cff59,#66ff54,#70ff50,#79ff4b,#82ff45,#8aff3f,#93ff38,#9bff30,#a3ff27,#abff1a,#b3ff00,#baff00,#c2ff00,#caff00,#d2ff00,#d9ff00,#e1ff00)"></i><i style="left:61px;top:232px;width:264px;background:linear-gradient(90deg,#00ff9d,#00ff9c,#00ff9a,#00ff99,#00ff97,#00ff96,#00ff94,#00ff92,#00ff91,#00ff8f,#00ff8d,#00ff8b,#00ff89,#00ff87,#00ff85,#00ff82,#00ff80,#00ff7e,#00ff7b,#00ff79,#00ff76,#00ff73,#00ff70,#11ff6d,#2aff6a,#3bff66,#48ff63,#54ff5f,#5fff5b,#69ff56,#73ff52,#7cff4d,#85ff47,#8eff41,#96ff3a,#9eff33,#a6ff29,#aeff1e,#b6ff09,#beff00,#c6ff00,#ceff00,#d6ff00,#deff00,#e5ff00)"></i><i style="left:61px;top:234px;width:266px;background:linear-gradient(90deg,#00ff9f,#00ff9e,#00ff9c,#00ff9b,#00ff99,#00ff97,#00ff96,#00ff94,#00ff92,#00ff91,#00ff8f,#00ff8d,#00ff8b,#00ff89,#00ff86,#00ff84,#00ff82,#00ff80,#00ff7d,#00ff7a,#00ff78,#00ff75,#00ff72,#19ff6f,#2fff6c,#3fff68,#4cff65,#58ff61,#63ff5d,#6dff58,#76ff54,#7fff4f,#88ff49,#91ff43,#9aff3d,#a2ff35,#aaff2c,#b2ff21,#baff10,#c2ff00,#caff00,#d2ff00,#daff00,#e2ff00,#eaff00)"></i><i style="left:61px;top:236px;width:269px;background:linear-gradient(90deg,#00ffa1,#00ff9f,#00ff9e,#00ff9c,#00ff9b,#00ff99,#00ff98,#00ff96,#00ff94,#00ff93,#00ff91,#00ff8f,#00ff8d,#00ff8b,#00ff89,#00ff87,#00ff84,#00ff82,#00ff80,#00ff7d,#00ff7b,#00ff78,#00ff75,#14ff72,#2cff6f,#3cff6c,#4aff68,#55ff65,#60ff61,#6bff5d,#74ff58,#7eff54,#86ff4f,#8fff49,#98ff43,#a0ff3c,#a8ff35,#b0ff2c,#b8ff20,#c0ff0f,#c8ff00,#d0ff00,#d8ff00,#e0ff00,#e8ff00,#f0ff00)"></i><i style="left:61px;top:238px;width:271px;background:linear-gradient(90deg,#00ffa3,#00ffa1,#00ffa0,#00ff9e,#00ff9d,#00ff9b,#00ff9a,#00ff98,#00ff96,#00ff94,#00ff93,#00ff91,#00ff8f,#00ff8d,#00ff8b,#00ff89,#00ff86,#00ff84,#00ff82,#00ff7f,#00ff7d,#00ff7a,#00ff77,#1bff74,#31ff71,#40ff6e,#4dff6a,#59ff67,#64ff63,#6eff5f,#78ff5a,#81ff56,#8aff51,#93ff4b,#9bff45,#a4ff3f,#acff37,#b4ff2e,#bcff24,#c4ff14,#ccff00,#d4ff00,#dcff00,#e4ff00,#ecff00,#f4ff00)"></i><i style="left:62px;top:240px;width:272px;background:linear-gradient(90deg,#00ffa4,#00ffa3,#00ffa1,#00ffa0,#00ff9e,#00ff9d,#00ff9b,#00ff99,#00ff98,#00ff96,#00ff94,#00ff92,#00ff90,#00ff8e,#00ff8c,#00ff8a,#00ff88,#00ff86,#00ff83,#00ff81,#00ff7e,#00ff7c,#00ff79,#23ff76,#36ff73,#45ff6f,#52ff6c,#5dff68,#68ff65,#72ff61,#7bff5c,#85ff58,#8eff53,#96ff4d,#9fff47,#a7ff41,#b0ff39,#b8ff31,#c0ff26,#c8ff18,#d0ff00,#d9ff00,#e1ff00,#e9ff00,#f1ff00,#f9ff00)"></i><i style="left:62px;top:242px;width:274px;background:linear-gradient(90deg,#00ffa6,#00ffa4,#00ffa3,#00ffa2,#00ffa0,#00ff9f,#00ff9d,#00ff9b,#00ff9a,#00ff98,#00ff96,#00ff95,#00ff93,#00ff91,#00ff8f,#00ff8d,#00ff8b,#00ff88,#00ff86,#00ff84,#00ff81,#00ff7f,#00ff7c,#1dff79,#32ff76,#41ff73,#4eff70,#5aff6d,#65ff69,#6fff65,#79ff61,#82ff5d,#8bff58,#94ff53,#9cff4e,#a5ff48,#adff42,#b5ff3a,#bdff32,#c5ff28,#cdff1a,#d5ff00,#deff00,#e6ff00,#eeff00,#f6ff00,#feff00)"></i><i style="left:62px;top:244px;width:276px;background:linear-gradient(90deg,#00ffa7,#00ffa6,#00ffa5,#00ffa3,#00ffa2,#00ffa0,#00ff9f,#00ff9d,#00ff9c,#00ff9a,#00ff98,#00ff96,#00ff95,#00ff93,#00ff91,#00ff8f,#00ff8d,#00ff8a,#00ff88,#00ff86,#00ff83,#00ff81,#00ff7e,#23ff7b,#36ff78,#45ff75,#52ff72,#5dff6f,#68ff6b,#72ff67,#7cff63,#85ff5f,#8eff5a,#97ff56,#a0ff50,#a8ff4a,#b1ff44,#b9ff3d,#c1ff34,#c9ff2a,#d2ff1d,#daff01,#e2ff00,#eaff00,#f2ff00,#fbff00,#fffb00)"></i><i style="left:62px;top:246px;width:278px;background:linear-gradient(90deg,#00ffa9,#00ffa8,#00ffa7,#00ffa5,#00ffa4,#00ffa2,#00ffa1,#00ff9f,#00ff9d,#00ff9c,#00ff9a,#00ff98,#00ff96,#00ff95,#00ff93,#00ff91,#00ff8e,#00ff8c,#00ff8a,#00ff88,#00ff85,#00ff83,#09ff80,#29ff7d,#3aff7a,#49ff77,#55ff74,#61ff71,#6bff6d,#76ff69,#7fff65,#89ff61,#92ff5d,#9bff58,#a3ff52,#acff4d,#b4ff46,#bdff3f,#c5ff37,#cdff2d,#d6ff21,#deff0d,#e6ff00,#efff00,#f7ff00,#ffff00,#fff600)"></i><i style="left:62px;top:248px;width:281px;background:linear-gradient(90deg,#00ffab,#00ffaa,#00ffa8,#00ffa7,#00ffa6,#00ffa4,#00ffa3,#00ffa1,#00ffa0,#00ff9e,#00ff9c,#00ff9b,#00ff99,#00ff97,#00ff95,#00ff93,#00ff91,#00ff8f,#00ff8d,#00ff8a,#00ff88,#00ff86,#00ff83,#25ff80,#38ff7e,#46ff7b,#53ff78,#5fff74,#6aff71,#74ff6d,#7dff6a,#87ff66,#90ff61,#99ff5d,#a2ff58,#aaff53,#b3ff4d,#bbff46,#c3ff3f,#ccff37,#d4ff2d,#dcff21,#e4ff0b,#edff00,#f5ff00,#feff00,#fff800,#fff000)"></i><i style="left:63px;top:250px;width:282px;background:linear-gradient(90deg,#00ffad,#00ffab,#00ffaa,#00ffa9,#00ffa7,#00ffa6,#00ffa4,#00ffa3,#00ffa1,#00ffa0,#00ff9e,#00ff9c,#00ff9a,#00ff99,#00ff97,#00ff95,#00ff93,#00ff91,#00ff8e,#00ff8c,#00ff8a,#00ff87,#11ff85,#2cff82,#3dff7f,#4bff7d,#58ff79,#63ff76,#6eff73,#78ff6f,#81ff6c,#8bff68,#94ff63,#9dff5f,#a6ff5a,#aeff55,#b7ff4f,#bfff48,#c8ff41,#d0ff39,#d8ff30,#e1ff24,#e9ff11,#f2ff00,#faff00,#fffb00,#fff300,#ffec00)"></i><i style="left:63px;top:252px;width:284px;background:linear-gradient(90deg,#00ffae,#00ffad,#00ffac,#00ffaa,#00ffa9,#00ffa8,#00ffa6,#00ffa5,#00ffa3,#00ffa1,#00ffa0,#00ff9e,#00ff9c,#00ff9b,#00ff99,#00ff97,#00ff95,#00ff93,#00ff90,#00ff8e,#00ff8c,#00ff89,#1aff87,#31ff84,#41ff81,#4fff7f,#5bff7c,#66ff78,#71ff75,#7bff71,#85ff6e,#8eff6a,#97ff66,#a0ff61,#a9ff5c,#b2ff57,#baff51,#c3ff4b,#ccff44,#d4ff3c,#ddff33,#e5ff27,#eeff17,#f6ff00,#ffff00,#fff700,#ffef00,#ffe700)"></i><i style="left:63px;top:254px;width:286px;background:linear-gradient(90deg,#00ffb0,#00ffaf,#00ffae,#00ffac,#00ffab,#00ffaa,#00ffa8,#00ffa7,#00ffa5,#00ffa4,#00ffa2,#00ffa0,#00ff9f,#00ff9d,#00ff9b,#00ff99,#00ff97,#00ff95,#00ff93,#00ff91,#00ff8f,#00ff8d,#11ff8a,#2cff88,#3dff85,#4bff82,#58ff7f,#63ff7c,#6eff79,#78ff76,#82ff72,#8cff6f,#95ff6b,#9eff66,#a6ff62,#afff5d,#b8ff58,#c0ff52,#c9ff4c,#d1ff45,#daff3d,#e2ff34,#ebff29,#f3ff19,#fcff00,#fffa00,#fff200,#ffea00,#ffe300)"></i><i style="left:63px;top:256px;width:288px;background:linear-gradient(90deg,#00ffb2,#00ffb1,#00ffaf,#00ffae,#00ffad,#00ffab,#00ffaa,#00ffa9,#00ffa7,#00ffa6,#00ffa4,#00ffa2,#00ffa1,#00ff9f,#00ff9d,#00ff9b,#00ff99,#00ff97,#00ff95,#00ff93,#00ff91,#00ff8f,#19ff8c,#31ff8a,#41ff87,#4fff84,#5bff81,#67ff7e,#72ff7b,#7cff78,#85ff74,#8fff71,#98ff6d,#a1ff69,#aaff64,#b3ff5f,#bcff5a,#c4ff55,#cdff4e,#d5ff47,#deff40,#e7ff37,#efff2c,#f8ff1d,#fffd00,#fff500,#ffed00,#ffe500,#ffde00)"></i><i style="left:63px;top:258px;width:291px;background:linear-gradient(90deg,#00ffb4,#00ffb3,#00ffb1,#00ffb0,#00ffaf,#00ffad,#00ffac,#00ffaa,#00ffa9,#00ffa7,#00ffa6,#00ffa4,#00ffa3,#00ffa1,#00ff9f,#00ff9d,#00ff9b,#00ff99,#00ff97,#00ff95,#00ff93,#00ff91,#22ff8e,#36ff8c,#46ff89,#54ff86,#60ff83,#6bff80,#76ff7d,#80ff7a,#8aff76,#93ff73,#9dff6f,#a6ff6a,#afff66,#b8ff61,#c1ff5c,#c9ff56,#d2ff50,#dbff49,#e4ff41,#ecff38,#f5ff2d,#feff1f,#fff700,#ffef00,#ffe700,#ffe000,#ffd900)"></i><i style="left:64px;top:260px;width:292px;background:linear-gradient(90deg,#00ffb5,#00ffb4,#00ffb3,#00ffb2,#00ffb0,#00ffaf,#00ffae,#00ffac,#00ffab,#00ffa9,#00ffa8,#00ffa6,#00ffa5,#00ffa3,#00ffa1,#00ffa0,#00ff9e,#00ff9c,#00ff9a,#00ff98,#00ff96,#00ff93,#1eff91,#34ff8f,#44ff8c,#52ff8a,#5eff87,#69ff84,#74ff81,#7eff7e,#88ff7a,#91ff77,#9bff73,#a4ff6f,#adff6b,#b6ff67,#beff62,#c7ff5d,#d0ff57,#d8ff51,#e1ff4a,#eaff42,#f3ff39,#fbff2f,#fffa20,#fff204,#ffea00,#ffe200,#ffdb00,#ffd500)"></i><i style="left:64px;top:262px;width:294px;background:linear-gradient(90deg,#00ffb7,#00ffb6,#00ffb5,#00ffb4,#00ffb2,#00ffb1,#00ffb0,#00ffae,#00ffad,#00ffab,#00ffaa,#00ffa8,#00ffa7,#00ffa5,#00ffa3,#00ffa2,#00ffa0,#00ff9e,#00ff9c,#00ff9a,#00ff98,#00ff96,#24ff93,#38ff91,#48ff8e,#55ff8c,#61ff89,#6dff86,#77ff83,#81ff80,#8bff7d,#95ff79,#9eff76,#a7ff72,#b0ff6d,#b9ff69,#c2ff64,#cbff5f,#d4ff59,#ddff53,#e5ff4d,#eeff45,#f7ff3c,#fffe32,#fff523,#ffed0e,#ffe500,#ffde00,#ffd700,#ffd000)"></i><i style="left:64px;top:264px;width:296px;background:linear-gradient(90deg,#00ffb9,#00ffb8,#00ffb7,#00ffb5,#00ffb4,#00ffb3,#00ffb2,#00ffb0,#00ffaf,#00ffad,#00ffac,#00ffaa,#00ffa9,#00ffa7,#00ffa5,#00ffa4,#00ffa2,#00ffa0,#00ff9e,#00ff9c,#00ff9a,#07ff98,#2aff95,#3cff93,#4bff91,#59ff8e,#65ff8b,#70ff88,#7bff85,#85ff82,#8fff7f,#98ff7c,#a2ff78,#abff74,#b4ff70,#bdff6b,#c6ff67,#cfff62,#d8ff5c,#e1ff56,#eaff4f,#f3ff48,#fcff3f,#fff934,#fff026,#ffe813,#ffe100,#ffda00,#ffd300,#ffcc00)"></i><i style="left:64px;top:266px;width:298px;background:linear-gradient(90deg,#00ffbb,#00ffba,#00ffb9,#00ffb7,#00ffb6,#00ffb5,#00ffb4,#00ffb2,#00ffb1,#00ffb0,#00ffae,#00ffad,#00ffab,#00ffaa,#00ffa8,#00ffa6,#00ffa5,#00ffa3,#00ffa1,#00ff9f,#00ff9d,#00ff9b,#25ff99,#39ff96,#48ff94,#56ff92,#62ff8f,#6dff8c,#78ff89,#82ff86,#8cff83,#96ff80,#9fff7d,#a9ff79,#b2ff75,#bbff71,#c4ff6d,#cdff68,#d5ff63,#deff5d,#e7ff57,#f0ff51,#f9ff49,#fffc40,#fff334,#ffeb27,#ffe316,#ffdc00,#ffd500,#ffce00,#ffc800)"></i><i style="left:65px;top:268px;width:300px;background:linear-gradient(90deg,#00ffbd,#00ffbb,#00ffba,#00ffb9,#00ffb8,#00ffb7,#00ffb5,#00ffb4,#00ffb3,#00ffb1,#00ffb0,#00ffaf,#00ffad,#00ffab,#00ffaa,#00ffa8,#00ffa6,#00ffa5,#00ffa3,#00ffa1,#00ff9f,#12ff9d,#2dff9a,#3fff98,#4eff96,#5bff93,#67ff91,#73ff8e,#7dff8b,#87ff88,#91ff85,#9bff82,#a4ff7e,#aeff7b,#b7ff77,#c0ff73,#c9ff6e,#d2ff6a,#dbff64,#e4ff5f,#edff59,#f7ff52,#fffe4a,#fff53f,#ffed34,#ffe527,#ffde16,#ffd700,#ffd000,#ffc900,#ffc300)"></i><i style="left:65px;top:270px;width:302px;background:linear-gradient(90deg,#00ffbe,#00ffbd,#00ffbc,#00ffbb,#00ffba,#00ffb9,#00ffb7,#00ffb6,#00ffb5,#00ffb3,#00ffb2,#00ffb1,#00ffaf,#00ffae,#00ffac,#00ffaa,#00ffa9,#00ffa7,#00ffa5,#00ffa3,#00ffa1,#1aff9f,#32ff9d,#43ff9a,#52ff98,#5fff96,#6bff93,#76ff90,#81ff8e,#8bff8b,#95ff88,#9fff84,#a8ff81,#b1ff7d,#bbff79,#c4ff75,#cdff71,#d6ff6c,#e0ff67,#e9ff61,#f2ff5b,#fbff55,#fff94c,#fff141,#ffe836,#ffe129,#ffd91a,#ffd200,#ffcc00,#ffc500,#ffbf00)"></i><i style="left:65px;top:272px;width:304px;background:linear-gradient(90deg,#00ffc0,#00ffbf,#00ffbe,#00ffbd,#00ffbc,#00ffbb,#00ffba,#00ffb8,#00ffb7,#00ffb6,#00ffb4,#00ffb3,#00ffb2,#00ffb0,#00ffae,#00ffad,#00ffab,#00ffa9,#00ffa8,#00ffa6,#00ffa4,#12ffa2,#2effa0,#40ff9e,#4fff9c,#5cff99,#68ff97,#73ff94,#7eff92,#88ff8f,#92ff8c,#9cff89,#a6ff85,#afff82,#b8ff7e,#c2ff7b,#cbff76,#d4ff72,#ddff6d,#e6ff68,#efff63,#f9ff5d,#fffc55,#fff34b,#ffeb41,#ffe336,#ffdb2a,#ffd41c,#ffce00,#ffc700,#ffc100,#ffbb00)"></i><i style="left:65px;top:274px;width:306px;background:linear-gradient(90deg,#00ffc2,#00ffc1,#00ffc0,#00ffbf,#00ffbe,#00ffbd,#00ffbc,#00ffba,#00ffb9,#00ffb8,#00ffb6,#00ffb5,#00ffb4,#00ffb2,#00ffb1,#00ffaf,#00ffad,#00ffac,#00ffaa,#00ffa8,#00ffa6,#1affa4,#33ffa2,#44ffa0,#52ff9e,#5fff9c,#6bff99,#77ff97,#82ff94,#8cff91,#96ff8e,#a0ff8b,#a9ff88,#b3ff85,#bcff81,#c6ff7d,#cfff79,#d8ff75,#e2ff70,#ebff6b,#f4ff65,#feff60,#fff756,#ffee4c,#ffe642,#ffdf38,#ffd72c,#ffd01e,#ffc908,#ffc300,#ffbd00,#ffb700)"></i><i style="left:66px;top:276px;width:307px;background:linear-gradient(90deg,#00ffc4,#00ffc3,#00ffc2,#00ffc1,#00ffc0,#00ffbf,#00ffbd,#00ffbc,#00ffbb,#00ffba,#00ffb8,#00ffb7,#00ffb6,#00ffb4,#00ffb3,#00ffb1,#00ffaf,#00ffae,#00ffac,#00ffaa,#00ffa8,#23ffa6,#39ffa4,#49ffa2,#57ffa0,#64ff9e,#70ff9b,#7bff99,#86ff96,#90ff93,#9aff91,#a4ff8d,#aeff8a,#b7ff87,#c1ff83,#caff7f,#d4ff7b,#ddff77,#e6ff72,#f0ff6d,#f9ff68,#fffb61,#fff257,#ffea4d,#ffe243,#ffda39,#ffd32e,#ffcc21,#ffc50e,#ffbf00,#ffb900,#ffb300)"></i><i style="left:66px;top:278px;width:309px;background:linear-gradient(90deg,#00ffc6,#00ffc5,#00ffc4,#00ffc3,#00ffc2,#00ffc1,#00ffc0,#00ffbe,#00ffbd,#00ffbc,#00ffbb,#00ffb9,#00ffb8,#00ffb7,#00ffb5,#00ffb4,#00ffb2,#00ffb1,#00ffaf,#00ffad,#00ffab,#1effa9,#35ffa8,#46ffa6,#54ffa3,#61ffa1,#6dff9f,#79ff9d,#83ff9a,#8eff97,#98ff95,#a2ff92,#abff8f,#b5ff8c,#beff88,#c8ff85,#d1ff81,#dbff7d,#e4ff79,#edff74,#f7ff6f,#fffe69,#fff460,#ffec56,#ffe44d,#ffdc43,#ffd539,#ffce2f,#ffc722,#ffc111,#ffbb00,#ffb500,#ffaf00)"></i><i style="left:66px;top:280px;width:312px;background:linear-gradient(90deg,#00ffc8,#00ffc7,#00ffc6,#00ffc5,#00ffc4,#00ffc3,#00ffc2,#00ffc1,#00ffbf,#00ffbe,#00ffbd,#00ffbc,#00ffba,#00ffb9,#00ffb7,#00ffb6,#00ffb4,#00ffb3,#00ffb1,#00ffaf,#00ffae,#26ffac,#3bffaa,#4bffa8,#59ffa6,#66ffa3,#72ffa1,#7dff9f,#88ff9c,#92ff9a,#9cff97,#a6ff94,#b0ff91,#baff8e,#c3ff8b,#cdff87,#d7ff83,#e0ff7f,#eaff7b,#f3ff76,#fdff71,#fff768,#ffef5f,#ffe656,#ffde4d,#ffd743,#ffcf39,#ffc92f,#ffc222,#ffbc12,#ffb600,#ffb000,#ffab00)"></i><i style="left:67px;top:282px;width:313px;background:linear-gradient(90deg,#00ffca,#00ffc9,#00ffc8,#00ffc7,#00ffc6,#00ffc5,#00ffc4,#00ffc2,#00ffc1,#00ffc0,#00ffbf,#00ffbe,#00ffbc,#00ffbb,#00ffb9,#00ffb8,#00ffb6,#00ffb5,#00ffb3,#00ffb1,#0dffb0,#2dffae,#40ffac,#50ffaa,#5effa8,#6affa6,#76ffa4,#81ffa1,#8cff9f,#97ff9c,#a1ff99,#abff97,#b5ff94,#beff90,#c8ff8d,#d2ff89,#dbff86,#e5ff82,#efff7d,#f9ff79,#fffc72,#fff269,#ffea60,#ffe157,#ffda4d,#ffd244,#ffcb3b,#ffc430,#ffbe24,#ffb815,#ffb200,#ffac00,#ffa700)"></i><i style="left:67px;top:284px;width:315px;background:linear-gradient(90deg,#00ffcc,#00ffcb,#00ffca,#00ffc9,#00ffc8,#00ffc7,#00ffc6,#00ffc5,#00ffc3,#00ffc2,#00ffc1,#00ffc0,#00ffbe,#00ffbd,#00ffbc,#00ffba,#00ffb9,#00ffb7,#00ffb6,#00ffb4,#17ffb2,#32ffb0,#44ffae,#54ffac,#61ffaa,#6effa8,#79ffa6,#85ffa4,#90ffa1,#9aff9f,#a4ff9c,#aeff99,#b8ff96,#c2ff93,#ccff90,#d6ff8c,#e0ff88,#eaff84,#f4ff80,#feff7c,#fff773,#ffee6a,#ffe560,#ffdd57,#ffd54e,#ffce45,#ffc73c,#ffc032,#ffba27,#ffb419,#ffae00,#ffa900,#ffa300)"></i><i style="left:67px;top:286px;width:317px;background:linear-gradient(90deg,#00ffce,#00ffcd,#00ffcc,#00ffcb,#00ffca,#00ffc9,#00ffc8,#00ffc7,#00ffc6,#00ffc5,#00ffc3,#00ffc2,#00ffc1,#00ffc0,#00ffbe,#00ffbd,#00ffbb,#00ffba,#00ffb8,#00ffb7,#0fffb5,#2effb3,#41ffb2,#51ffb0,#5fffae,#6bffac,#77ffaa,#82ffa8,#8dffa5,#98ffa3,#a2ffa0,#acff9e,#b6ff9b,#c0ff98,#caff95,#d4ff91,#deff8e,#e7ff8a,#f1ff86,#fbff82,#fff97a,#fff071,#ffe768,#ffdf60,#ffd757,#ffd04e,#ffc945,#ffc23c,#ffbc32,#ffb628,#ffb01a,#ffaa00,#ffa500,#ff9f00)"></i><i style="left:67px;top:288px;width:319px;background:linear-gradient(90deg,#00ffd0,#00ffcf,#00ffce,#00ffcd,#00ffcc,#00ffcb,#00ffca,#00ffc9,#00ffc8,#00ffc7,#00ffc6,#00ffc4,#00ffc3,#00ffc2,#00ffc1,#00ffbf,#00ffbe,#00ffbc,#00ffbb,#00ffb9,#18ffb8,#33ffb6,#45ffb4,#54ffb2,#62ffb0,#6fffae,#7bffac,#86ffaa,#91ffa8,#9cffa5,#a6ffa3,#b0ffa0,#baff9e,#c4ff9b,#ceff98,#d8ff94,#e2ff91,#ecff8d,#f6ff89,#fffe84,#fff47b,#ffeb72,#ffe269,#ffda60,#ffd358,#ffcb4f,#ffc546,#ffbe3d,#ffb834,#ffb229,#ffac1d,#ffa609,#ffa100,#ff9c00)"></i><i style="left:68px;top:290px;width:321px;background:linear-gradient(90deg,#00ffd2,#00ffd1,#00ffd0,#00ffcf,#00ffce,#00ffcd,#00ffcc,#00ffcb,#00ffca,#00ffc9,#00ffc8,#00ffc7,#00ffc6,#00ffc4,#00ffc3,#00ffc2,#00ffc0,#00ffbf,#00ffbe,#00ffbc,#18ffba,#32ffb9,#45ffb7,#54ffb5,#62ffb4,#6fffb2,#7affb0,#86ffae,#91ffab,#9bffa9,#a6ffa7,#b0ffa4,#baffa2,#c4ff9f,#ceff9c,#d8ff99,#e2ff95,#ecff92,#f6ff8e,#fffe8a,#fff581,#ffec78,#ffe36f,#ffdb66,#ffd35e,#ffcc56,#ffc54d,#ffbf45,#ffb83c,#ffb233,#ffac28,#ffa71c,#ffa109,#ff9c00,#ff9700)"></i><i style="left:68px;top:292px;width:323px;background:linear-gradient(90deg,#00ffd4,#00ffd3,#00ffd2,#00ffd1,#00ffd0,#00ffcf,#00ffce,#00ffcd,#00ffcc,#00ffcb,#00ffca,#00ffc9,#00ffc8,#00ffc7,#00ffc5,#00ffc4,#00ffc3,#00ffc1,#00ffc0,#00ffbf,#1fffbd,#37ffbb,#49ffba,#58ffb8,#65ffb6,#72ffb4,#7effb2,#89ffb0,#94ffae,#9fffac,#a9ffaa,#b4ffa7,#beffa4,#c8ffa2,#d2ff9f,#dcff9c,#e6ff98,#f0ff95,#faff91,#fff98a,#fff081,#ffe778,#ffde70,#ffd667,#ffcf5f,#ffc857,#ffc14e,#ffba46,#ffb43d,#ffae34,#ffa82a,#ffa31f,#ff9e0e,#ff9800,#ff9300)"></i><i style="left:68px;top:294px;width:325px;background:linear-gradient(90deg,#00ffd6,#00ffd5,#00ffd4,#00ffd3,#00ffd2,#00ffd2,#00ffd1,#00ffd0,#00ffcf,#00ffce,#00ffcd,#00ffcb,#00ffca,#00ffc9,#00ffc8,#00ffc7,#00ffc5,#00ffc4,#00ffc3,#00ffc1,#25ffc0,#3bffbe,#4cffbc,#5bffbb,#69ffb9,#75ffb7,#81ffb5,#8dffb3,#98ffb1,#a3ffaf,#adffac,#b8ffaa,#c2ffa7,#ccffa5,#d6ffa2,#e1ff9f,#ebff9c,#f5ff98,#fffe94,#fff48b,#ffeb81,#ffe279,#ffda70,#ffd268,#ffcb60,#ffc457,#ffbd4f,#ffb647,#ffb03e,#ffaa35,#ffa52c,#ff9f21,#ff9a12,#ff9500,#ff9000)"></i><i style="left:69px;top:296px;width:326px;background:linear-gradient(90deg,#00ffd8,#00ffd7,#00ffd6,#00ffd5,#00ffd5,#00ffd4,#00ffd3,#00ffd2,#00ffd1,#00ffd0,#00ffcf,#00ffce,#00ffcc,#00ffcb,#00ffca,#00ffc9,#00ffc8,#00ffc6,#00ffc5,#04ffc3,#2dffc2,#41ffc0,#52ffbf,#60ffbd,#6dffbb,#7affba,#86ffb8,#91ffb6,#9cffb4,#a7ffb1,#b2ffaf,#bcffad,#c7ffaa,#d1ffa7,#dbffa5,#e6ffa2,#f0ff9e,#fbff9b,#fff994,#ffef8a,#ffe681,#ffdd79,#ffd570,#ffcd68,#ffc660,#ffbf58,#ffb950,#ffb248,#ffac3f,#ffa637,#ffa12d,#ff9b22,#ff9615,#ff9100,#ff8c00)"></i><i style="left:69px;top:298px;width:328px;background:linear-gradient(90deg,#00ffda,#00ffd9,#00ffd8,#00ffd8,#00ffd7,#00ffd6,#00ffd5,#00ffd4,#00ffd3,#00ffd2,#00ffd1,#00ffd0,#00ffcf,#00ffce,#00ffcd,#00ffcc,#00ffcb,#00ffc9,#00ffc8,#00ffc7,#28ffc5,#3effc4,#4fffc2,#5effc1,#6bffbf,#78ffbd,#84ffbb,#8fffba,#9affb8,#a5ffb6,#b0ffb3,#baffb1,#c5ffaf,#cfffac,#d9ffaa,#e4ffa7,#eeffa4,#f9ffa1,#fffb9b,#fff191,#ffe888,#ffdf80,#ffd777,#ffcf6f,#ffc867,#ffc15f,#ffba57,#ffb450,#ffae48,#ffa840,#ffa237,#ff9d2e,#ff9724,#ff9217,#ff8d00,#ff8800)"></i><i style="left:69px;top:300px;width:331px;background:linear-gradient(90deg,#00ffdc,#00ffdb,#00ffdb,#00ffda,#00ffd9,#00ffd8,#00ffd7,#00ffd6,#00ffd6,#00ffd5,#00ffd4,#00ffd3,#00ffd2,#00ffd0,#00ffcf,#00ffce,#00ffcd,#00ffcc,#00ffca,#0dffc9,#2fffc8,#43ffc6,#54ffc5,#62ffc3,#70ffc2,#7cffc0,#88ffbe,#94ffbc,#9fffba,#aaffb8,#b5ffb6,#bfffb4,#caffb2,#d4ffaf,#dfffac,#eaffaa,#f4ffa7,#ffffa4,#fff59a,#ffeb90,#ffe287,#ffd97f,#ffd177,#ffca6e,#ffc367,#ffbc5f,#ffb557,#ffaf4f,#ffa947,#ffa33f,#ff9d37,#ff982e,#ff9324,#ff8e17,#ff8900,#ff8400)"></i><i style="left:70px;top:302px;width:332px;background:linear-gradient(90deg,#00ffde,#00ffdd,#00ffdd,#00ffdc,#00ffdb,#00ffda,#00ffd9,#00ffd9,#00ffd8,#00ffd7,#00ffd6,#00ffd5,#00ffd4,#00ffd3,#00ffd2,#00ffd1,#00ffcf,#00ffce,#00ffcd,#1bffcc,#36ffca,#49ffc9,#59ffc7,#67ffc6,#74ffc4,#81ffc3,#8dffc1,#98ffbf,#a4ffbd,#afffbb,#b9ffb9,#c4ffb7,#cfffb5,#daffb2,#e4ffb0,#efffad,#faffaa,#fff9a3,#ffef99,#ffe690,#ffdd87,#ffd57f,#ffcd77,#ffc56f,#ffbe67,#ffb75f,#ffb158,#ffab50,#ffa548,#ff9f40,#ff9938,#ff942f,#ff8f25,#ff8a19,#ff8503,#ff8000)"></i><i style="left:70px;top:304px;width:334px;background:linear-gradient(90deg,#00ffe0,#00ffe0,#00ffdf,#00ffde,#00ffdd,#00ffdd,#00ffdc,#00ffdb,#00ffda,#00ffd9,#00ffd8,#00ffd8,#00ffd7,#00ffd6,#00ffd5,#00ffd3,#00ffd2,#00ffd1,#00ffd0,#15ffcf,#33ffce,#46ffcc,#57ffcb,#65ffc9,#72ffc8,#7fffc6,#8bffc5,#96ffc3,#a2ffc1,#adffbf,#b8ffbd,#c2ffbb,#cdffb9,#d8ffb7,#e2ffb4,#edffb2,#f8ffaf,#fffbaa,#fff1a0,#ffe797,#ffdf8e,#ffd685,#ffce7d,#ffc775,#ffbf6e,#ffb966,#ffb25f,#ffac57,#ffa650,#ffa048,#ff9b40,#ff9538,#ff9030,#ff8b26,#ff861b,#ff810a,#ff7d00)"></i><i style="left:70px;top:306px;width:336px;background:linear-gradient(90deg,#00ffe3,#00ffe2,#00ffe1,#00ffe1,#00ffe0,#00ffdf,#00ffde,#00ffdd,#00ffdd,#00ffdc,#00ffdb,#00ffda,#00ffd9,#00ffd8,#00ffd7,#00ffd6,#00ffd5,#00ffd4,#00ffd3,#1cffd2,#37ffd0,#4affcf,#5affce,#69ffcc,#76ffcb,#82ffc9,#8effc8,#9affc6,#a5ffc4,#b1ffc2,#bcffc1,#c7ffbf,#d1ffbc,#dcffba,#e7ffb8,#f2ffb5,#fdffb3,#fff6aa,#ffeca0,#ffe397,#ffda8e,#ffd286,#ffca7e,#ffc276,#ffbb6e,#ffb567,#ffae5f,#ffa858,#ffa250,#ff9c49,#ff9741,#ff913a,#ff8c31,#ff8728,#ff821d,#ff7e0e,#ff7900)"></i><i style="left:71px;top:308px;width:337px;background:linear-gradient(90deg,#00ffe5,#00ffe4,#00ffe3,#00ffe3,#00ffe2,#00ffe1,#00ffe1,#00ffe0,#00ffdf,#00ffde,#00ffdd,#00ffdc,#00ffdc,#00ffdb,#00ffda,#00ffd9,#00ffd8,#00ffd7,#00ffd5,#26ffd4,#3effd3,#50ffd2,#5fffd0,#6dffcf,#7bffce,#87ffcc,#93ffcb,#9fffc9,#aaffc7,#b5ffc6,#c1ffc4,#ccffc2,#d7ffc0,#e2ffbd,#edffbb,#f8ffb9,#fffbb3,#fff1a9,#ffe7a0,#ffde97,#ffd58e,#ffcd86,#ffc57e,#ffbe76,#ffb76e,#ffb067,#ffaa60,#ffa458,#ff9e51,#ff984a,#ff9342,#ff8e3a,#ff8832,#ff8329,#ff7f1f,#ff7a11,#ff7500)"></i><i style="left:71px;top:310px;width:339px;background:linear-gradient(90deg,#00ffe7,#00ffe6,#00ffe6,#00ffe5,#00ffe4,#00ffe4,#00ffe3,#00ffe2,#00ffe1,#00ffe1,#00ffe0,#00ffdf,#00ffde,#00ffdd,#00ffdc,#00ffdb,#00ffda,#00ffd9,#00ffd8,#2cffd7,#42ffd6,#53ffd5,#63ffd3,#71ffd2,#7effd1,#8bffcf,#97ffce,#a3ffcc,#aeffcb,#baffc9,#c5ffc7,#d0ffc5,#dbffc3,#e6ffc1,#f2ffbf,#fdffbc,#fff6b3,#ffeca9,#ffe2a0,#ffd997,#ffd08e,#ffc886,#ffc17e,#ffba76,#ffb36f,#ffac67,#ffa660,#ffa059,#ff9a52,#ff944b,#ff8f43,#ff8a3b,#ff8533,#ff802b,#ff7b21,#ff7614,#ff7100)"></i><i style="left:71px;top:312px;width:342px;background:linear-gradient(90deg,#00ffe9,#00ffe9,#00ffe8,#00ffe7,#00ffe7,#00ffe6,#00ffe5,#00ffe5,#00ffe4,#00ffe3,#00ffe3,#00ffe2,#00ffe1,#00ffe0,#00ffdf,#00ffde,#00ffdd,#00ffdc,#00ffdb,#29ffda,#40ffd9,#52ffd8,#62ffd7,#70ffd6,#7dffd4,#8affd3,#96ffd2,#a2ffd0,#adffcf,#b9ffcd,#c4ffcb,#cfffc9,#daffc8,#e6ffc6,#f1ffc3,#fcffc1,#fff7b9,#ffecae,#ffe2a5,#ffd99c,#ffd193,#ffc98b,#ffc183,#ffba7b,#ffb374,#ffac6d,#ffa666,#ffa05f,#ff9a57,#ff9550,#ff8f49,#ff8a42,#ff853b,#ff8033,#ff7b2a,#ff7620,#ff7114,#ff6d00)"></i><i style="left:72px;top:314px;width:343px;background:linear-gradient(90deg,#00ffeb,#00ffeb,#00ffea,#00ffea,#00ffe9,#00ffe9,#00ffe8,#00ffe7,#00ffe7,#00ffe6,#00ffe5,#00ffe4,#00ffe4,#00ffe3,#00ffe2,#00ffe1,#00ffe0,#00ffdf,#0effde,#31ffdd,#46ffdc,#57ffdb,#67ffda,#75ffd9,#82ffd7,#8fffd6,#9bffd5,#a7ffd3,#b2ffd2,#beffd0,#c9ffcf,#d5ffcd,#e0ffcb,#ebffc9,#f7ffc7,#fffcc2,#fff1b8,#ffe7ae,#ffdda4,#ffd49c,#ffcc93,#ffc48b,#ffbd83,#ffb57c,#ffaf74,#ffa86d,#ffa266,#ff9c5f,#ff9658,#ff9151,#ff8b4a,#ff8643,#ff813c,#ff7c34,#ff772b,#ff7222,#ff6e16,#ff6900)"></i><i style="left:72px;top:316px;width:345px;background:linear-gradient(90deg,#00ffee,#00ffed,#00ffed,#00ffec,#00ffec,#00ffeb,#00ffea,#00ffea,#00ffe9,#00ffe9,#00ffe8,#00ffe7,#00ffe6,#00ffe6,#00ffe5,#00ffe4,#00ffe3,#00ffe2,#00ffe1,#2effe0,#44ffe0,#55ffde,#65ffdd,#73ffdc,#80ffdb,#8dffda,#99ffd9,#a5ffd7,#b1ffd6,#bcffd5,#c8ffd3,#d3ffd1,#deffd0,#eaffce,#f5ffcc,#fffdc9,#fff2be,#ffe8b4,#ffdfab,#ffd6a2,#ffcd99,#ffc591,#ffbe89,#ffb781,#ffb07a,#ffa973,#ffa36c,#ff9d65,#ff975e,#ff9258,#ff8c51,#ff874a,#ff8243,#ff7d3c,#ff7834,#ff732c,#ff6e23,#ff6a18,#ff6505)"></i><i style="left:72px;top:318px;width:347px;background:linear-gradient(90deg,#00fff0,#00fff0,#00ffef,#00ffef,#00ffee,#00ffee,#00ffed,#00ffec,#00ffec,#00ffeb,#00ffeb,#00ffea,#00ffe9,#00ffe8,#00ffe8,#00ffe7,#00ffe6,#00ffe5,#11ffe4,#33ffe4,#48ffe3,#59ffe2,#68ffe1,#76ffe0,#84ffde,#91ffdd,#9dffdc,#a9ffdb,#b5ffda,#c0ffd8,#ccffd7,#d8ffd5,#e3ffd4,#efffd2,#faffd0,#fff8c8,#ffedbe,#ffe3b4,#ffdaaa,#ffd1a2,#ffc999,#ffc191,#ffb989,#ffb282,#ffac7a,#ffa573,#ff9f6c,#ff9966,#ff935f,#ff8e58,#ff8851,#ff834b,#ff7e44,#ff793d,#ff7435,#ff6f2d,#ff6b25,#ff661a,#ff610b)"></i><i style="left:73px;top:320px;width:348px;background:linear-gradient(90deg,#00fff2,#00fff2,#00fff2,#00fff1,#00fff1,#00fff0,#00ffef,#00ffef,#00ffee,#00ffee,#00ffed,#00ffed,#00ffec,#00ffeb,#00ffea,#00ffea,#00ffe9,#00ffe8,#1effe7,#3affe7,#4effe6,#5effe5,#6dffe4,#7bffe3,#89ffe2,#96ffe1,#a2ffdf,#aeffde,#baffdd,#c6ffdc,#d1ffda,#ddffd9,#e9ffd7,#f5ffd6,#fffdd3,#fff2c7,#ffe8bd,#ffdeb3,#ffd5aa,#ffcca1,#ffc499,#ffbc91,#ffb589,#ffae82,#ffa77b,#ffa173,#ff9b6d,#ff9566,#ff8f5f,#ff8a59,#ff8452,#ff7f4b,#ff7a45,#ff753e,#ff7036,#ff6b2f,#ff6726,#ff621c,#ff5e0e)"></i><i style="left:73px;top:322px;width:351px;background:linear-gradient(90deg,#00fff5,#00fff4,#00fff4,#00fff4,#00fff3,#00fff3,#00fff2,#00fff2,#00fff1,#00fff0,#00fff0,#00ffef,#00ffef,#00ffee,#00ffed,#00ffed,#00ffec,#00ffeb,#26ffea,#3fffea,#52ffe9,#63ffe8,#72ffe7,#80ffe6,#8dffe5,#9affe4,#a7ffe3,#b3ffe2,#bfffe1,#cbffdf,#d7ffde,#e3ffdd,#efffdb,#fbffda,#fff7d1,#ffecc6,#ffe2bc,#ffd8b2,#ffcfa9,#ffc7a0,#ffbf98,#ffb790,#ffb088,#ffa981,#ffa27a,#ff9c73,#ff966c,#ff9065,#ff8a5f,#ff8558,#ff8052,#ff7a4b,#ff7544,#ff703d,#ff6c36,#ff672e,#ff6226,#ff5d1c,#ff590e)"></i><i style="left:73px;top:324px;width:353px;background:linear-gradient(90deg,#00fff7,#00fff7,#00fff7,#00fff6,#00fff6,#00fff5,#00fff5,#00fff4,#00fff4,#00fff3,#00fff3,#00fff2,#00fff2,#00fff1,#00fff0,#00fff0,#00ffef,#00ffef,#22ffee,#3dffed,#50ffec,#61ffec,#70ffeb,#7effea,#8cffe9,#99ffe8,#a5ffe7,#b1ffe6,#beffe5,#caffe4,#d6ffe3,#e2ffe1,#eeffe0,#faffdf,#fff8d7,#ffedcc,#ffe3c2,#ffd9b8,#ffd0af,#ffc8a6,#ffc09e,#ffb896,#ffb18e,#ffaa87,#ffa380,#ff9d79,#ff9772,#ff916b,#ff8b65,#ff865e,#ff8058,#ff7b51,#ff764b,#ff7144,#ff6c3e,#ff6737,#ff632f,#ff5e27,#ff591e,#ff5511)"></i><i style="left:74px;top:326px;width:354px;background:linear-gradient(90deg,#00fffa,#00fff9,#00fff9,#00fff9,#00fff8,#00fff8,#00fff7,#00fff7,#00fff6,#00fff6,#00fff6,#00fff5,#00fff5,#00fff4,#00fff3,#00fff3,#00fff2,#00fff2,#2bfff1,#43fff0,#56fff0,#66ffef,#75ffee,#83ffed,#91ffec,#9effec,#aaffeb,#b7ffea,#c3ffe9,#cfffe8,#dbffe7,#e7ffe5,#f4ffe4,#fffee2,#fff2d6,#ffe7cb,#ffddc1,#ffd4b7,#ffcbae,#ffc3a6,#ffbb9d,#ffb395,#ffac8e,#ffa587,#ff9f80,#ff9979,#ff9372,#ff8d6b,#ff8765,#ff825f,#ff7c58,#ff7752,#ff724c,#ff6d45,#ff683e,#ff6337,#ff5f30,#ff5a28,#ff551f,#ff5113)"></i><i style="left:74px;top:328px;width:356px;background:linear-gradient(90deg,#00fffc,#00fffc,#00fffc,#00fffb,#00fffb,#00fffa,#00fffa,#00fffa,#00fff9,#00fff9,#00fff8,#00fff8,#00fff7,#00fff7,#00fff6,#00fff6,#00fff5,#00fff5,#30fff4,#47fff4,#5afff3,#6afff2,#79fff2,#87fff1,#95fff0,#a2ffef,#aeffee,#bbffee,#c7ffed,#d4ffec,#e0ffeb,#ecffea,#f9ffe8,#fff9e1,#ffedd6,#ffe2cb,#ffd8c1,#ffcfb7,#ffc6ae,#ffbea6,#ffb69d,#ffaf96,#ffa88e,#ffa187,#ff9b80,#ff9579,#ff8f72,#ff896c,#ff8366,#ff7e5f,#ff7859,#ff7353,#ff6e4c,#ff6946,#ff643f,#ff5f38,#ff5b31,#ff5629,#ff5121,#ff4c16)"></i><i style="left:75px;top:330px;width:357px;background:linear-gradient(90deg,#00ffff,#00fffe,#00fffe,#00fffe,#00fffd,#00fffd,#00fffd,#00fffc,#00fffc,#00fffc,#00fffb,#00fffb,#00fffb,#00fffa,#00fffa,#00fff9,#00fff9,#00fff8,#30fff8,#47fff7,#5afff7,#6afff6,#79fff5,#87fff5,#94fff4,#a1fff3,#aefff3,#bbfff2,#c7fff1,#d3fff0,#e0ffef,#ecffee,#f9ffed,#fff9e7,#ffeddb,#ffe3d0,#ffd9c6,#ffcfbc,#ffc7b3,#ffbeab,#ffb7a2,#ffaf9b,#ffa893,#ffa28c,#ff9b85,#ff957e,#ff8f78,#ff8971,#ff836b,#ff7e65,#ff795e,#ff7458,#ff6e52,#ff694c,#ff6546,#ff603f,#ff5b39,#ff5632,#ff512a,#ff4d22,#ff4818)"></i><i style="left:75px;top:332px;width:360px;background:linear-gradient(90deg,#00fdff,#00fdff,#00fdff,#00feff,#00feff,#00feff,#00feff,#00ffff,#00ffff,#00ffff,#00fffe,#00fffe,#00fffe,#00fffd,#00fffd,#00fffc,#00fffc,#15fffc,#37fffb,#4cfffb,#5efffa,#6ffffa,#7efff9,#8cfff8,#99fff8,#a6fff7,#b3fff7,#c0fff6,#cdfff5,#d9fff4,#e6fff4,#f2fff3,#fffff2,#fff3e5,#ffe7d9,#ffddcf,#ffd3c5,#ffcabb,#ffc1b2,#ffb9aa,#ffb2a2,#ffaa9a,#ffa392,#ff9d8b,#ff9684,#ff907e,#ff8a77,#ff8471,#ff7f6a,#ff7964,#ff745e,#ff6f58,#ff6a52,#ff654c,#ff6046,#ff5b3f,#ff5639,#ff5132,#ff4c2a,#ff4722,#ff4318)"></i><i style="left:75px;top:334px;width:362px;background:linear-gradient(90deg,#00faff,#00faff,#00fbff,#00fbff,#00fbff,#00fbff,#00fcff,#00fcff,#00fcff,#00fcff,#00fdff,#00fdff,#00fdff,#00feff,#00feff,#00feff,#00ffff,#1dffff,#3bffff,#50fffe,#62fffe,#72fffd,#81fffd,#90fffc,#9dfffc,#abfffb,#b8fffb,#c4fffa,#d1fff9,#defff9,#ebfff8,#f8fff7,#fff9f1,#ffede5,#ffe2d9,#ffd8ce,#ffcec4,#ffc5bb,#ffbdb2,#ffb5aa,#ffada2,#ffa69a,#ff9f93,#ff988c,#ff9285,#ff8c7e,#ff8677,#ff8071,#ff7b6b,#ff7565,#ff705f,#ff6b59,#ff6653,#ff614c,#ff5c46,#ff5740,#ff5239,#ff4d33,#ff482b,#ff4323,#ff3e19)"></i><i style="left:76px;top:336px;width:363px;background:linear-gradient(90deg,#00f8ff,#00f8ff,#00f8ff,#00f8ff,#00f8ff,#00f9ff,#00f9ff,#00f9ff,#00f9ff,#00f9ff,#00faff,#00faff,#00faff,#00faff,#00fbff,#00fbff,#00fbff,#27fcff,#41fcff,#55fcff,#67fdff,#77fdff,#86fdff,#94feff,#a2feff,#b0ffff,#bdffff,#cafffe,#d7fffe,#e4fffd,#f1fffd,#fefffc,#fff3ef,#ffe7e3,#ffdcd8,#ffd2cd,#ffc9c4,#ffc0ba,#ffb8b2,#ffb0a9,#ffa8a1,#ffa19a,#ff9b92,#ff948b,#ff8e85,#ff887e,#ff8278,#ff7c71,#ff776b,#ff7165,#ff6c5f,#ff6759,#ff6253,#ff5c4d,#ff5747,#ff5241,#ff4d3a,#ff4833,#ff432c,#ff3e24,#ff391b)"></i><i style="left:76px;top:338px;width:365px;background:linear-gradient(90deg,#00f5ff,#00f5ff,#00f5ff,#00f6ff,#00f6ff,#00f6ff,#00f6ff,#00f6ff,#00f6ff,#00f7ff,#00f7ff,#00f7ff,#00f7ff,#00f7ff,#00f7ff,#00f8ff,#00f8ff,#23f8ff,#3ef8ff,#52f9ff,#64f9ff,#74f9ff,#82f9ff,#90faff,#9efaff,#acfaff,#b9fbff,#c6fbff,#d3fcff,#e0fcff,#eefcff,#fbfdff,#fff4f5,#ffe8e9,#ffddde,#ffd3d3,#ffcac9,#ffc1c0,#ffb8b7,#ffb1ae,#ffa9a6,#ffa29f,#ff9b98,#ff9490,#ff8e8a,#ff8883,#ff827d,#ff7c76,#ff7770,#ff716a,#ff6c64,#ff675e,#ff6259,#ff5d53,#ff584d,#ff5347,#ff4e41,#ff493b,#ff4434,#ff3e2d,#ff3925,#ff341c)"></i><i style="left:77px;top:340px;width:366px;background:linear-gradient(90deg,#00f3ff,#00f3ff,#00f3ff,#00f3ff,#00f3ff,#00f3ff,#00f3ff,#00f3ff,#00f4ff,#00f4ff,#00f4ff,#00f4ff,#00f4ff,#00f4ff,#00f4ff,#00f4ff,#00f5ff,#2cf5ff,#44f5ff,#57f5ff,#68f5ff,#77f6ff,#86f6ff,#93f6ff,#a1f6ff,#aef6ff,#bbf7ff,#c8f7ff,#d5f7ff,#e2f7ff,#f0f8ff,#fdf8ff,#ffedf4,#ffe2e8,#ffd7dc,#ffced2,#ffc4c8,#ffbcbf,#ffb3b6,#ffacae,#ffa4a6,#ff9d9f,#ff9697,#ff9090,#ff8a8a,#ff8483,#ff7e7d,#ff7877,#ff7370,#ff6d6a,#ff6865,#ff635f,#ff5e59,#ff5853,#ff534d,#ff4e47,#ff4941,#ff443b,#ff3f35,#ff392e,#ff3426,#ff2e1e)"></i><i style="left:77px;top:342px;width:368px;background:linear-gradient(90deg,#00f0ff,#00f0ff,#00f0ff,#00f0ff,#00f1ff,#00f1ff,#00f1ff,#00f1ff,#00f1ff,#00f1ff,#00f1ff,#00f1ff,#00f1ff,#00f1ff,#00f1ff,#00f1ff,#00f1ff,#30f1ff,#47f2ff,#59f2ff,#6af2ff,#79f2ff,#87f2ff,#95f2ff,#a2f2ff,#b0f2ff,#bdf2ff,#c9f3ff,#d6f3ff,#e3f3ff,#f1f3ff,#fef3ff,#ffe8f3,#ffdde7,#ffd2dc,#ffc9d2,#ffc0c8,#ffb7bf,#ffafb6,#ffa7ae,#ffa0a6,#ff999f,#ff9297,#ff8c91,#ff868a,#ff8083,#ff7a7d,#ff7477,#ff6f71,#ff696b,#ff6465,#ff5e5f,#ff5959,#ff5454,#ff4f4e,#ff4a48,#ff4442,#ff3f3c,#ff3a36,#ff342f,#ff2e28,#ff281f)"></i><i style="left:77px;top:344px;width:371px;background:linear-gradient(90deg,#00eeff,#00eeff,#00eeff,#00eeff,#00eeff,#00eeff,#00eeff,#00eeff,#00eeff,#00eeff,#00eeff,#00eeff,#00eeff,#00eeff,#00eeff,#00eeff,#00eeff,#2eeeff,#45eeff,#57eeff,#68eeff,#77eeff,#85eeff,#92eeff,#a0eeff,#aceeff,#b9eeff,#c6eeff,#d3eeff,#dfeeff,#eceeff,#f9eeff,#ffe8f8,#ffddec,#ffd2e1,#ffc8d6,#ffbfcc,#ffb7c3,#ffafba,#ffa7b2,#ffa0aa,#ff99a3,#ff929c,#ff8b95,#ff858e,#ff7f87,#ff7981,#ff747b,#ff6e75,#ff696f,#ff6369,#ff5e64,#ff595e,#ff5358,#ff4e53,#ff494d,#ff4447,#ff3e41,#ff393b,#ff3335,#ff2d2e,#ff2727,#ff1f1f)"></i><i style="left:78px;top:346px;width:372px;background:linear-gradient(90deg,#00ebff,#00ebff,#00ebff,#00ebff,#00ebff,#00ebff,#00ebff,#00ebff,#00ebff,#00ebff,#00ebff,#00ebff,#00ebff,#00ebff,#00ebff,#00ebff,#15ebff,#35ebff,#4aebff,#5cebff,#6bebff,#7aebff,#88eaff,#95eaff,#a2eaff,#afeaff,#bceaff,#c8eaff,#d5eaff,#e1eaff,#eeeaff,#fbeaff,#ffe2f6,#ffd7ea,#ffccdf,#ffc3d5,#ffbacb,#ffb2c2,#ffaaba,#ffa2b2,#ff9baa,#ff94a2,#ff8d9b,#ff8794,#ff818e,#ff7b87,#ff7581,#ff6f7b,#ff6a75,#ff646f,#ff5f6a,#ff5964,#ff545e,#ff4f59,#ff4a53,#ff444d,#ff3f48,#ff3942,#ff333c,#ff2d36,#ff272f,#ff1f28,#ff1620)"></i><i style="left:78px;top:348px;width:374px;background:linear-gradient(90deg,#00e9ff,#00e9ff,#00e9ff,#00e9ff,#00e9ff,#00e9ff,#00e9ff,#00e8ff,#00e8ff,#00e8ff,#00e8ff,#00e8ff,#00e8ff,#00e8ff,#00e8ff,#00e8ff,#1ce8ff,#38e7ff,#4de7ff,#5ee7ff,#6de7ff,#7ce7ff,#89e7ff,#97e7ff,#a3e6ff,#b0e6ff,#bde6ff,#c9e6ff,#d6e6ff,#e2e5ff,#efe5ff,#fce5ff,#ffdcf6,#ffd2ea,#ffc8df,#ffbed5,#ffb5cb,#ffadc2,#ffa5ba,#ff9eb2,#ff96aa,#ff90a2,#ff899b,#ff8395,#ff7d8e,#ff7788,#ff7181,#ff6b7b,#ff6575,#ff6070,#ff5a6a,#ff5564,#ff505f,#ff4a59,#ff4554,#ff3f4e,#ff3a48,#ff3443,#ff2d3d,#ff2737,#ff1f30,#ff1629,#ff0922)"></i><i style="left:79px;top:350px;width:375px;background:linear-gradient(90deg,#00e7ff,#00e6ff,#00e6ff,#00e6ff,#00e6ff,#00e6ff,#00e6ff,#00e6ff,#00e6ff,#00e5ff,#00e5ff,#00e5ff,#00e5ff,#00e5ff,#00e5ff,#00e5ff,#25e4ff,#3ee4ff,#51e4ff,#62e4ff,#71e4ff,#7fe3ff,#8ce3ff,#99e3ff,#a6e3ff,#b3e2ff,#bfe2ff,#cbe2ff,#d8e1ff,#e4e1ff,#f1e1ff,#fde0ff,#ffd6f4,#ffcce9,#ffc2de,#ffb9d4,#ffb0ca,#ffa8c1,#ffa0b9,#ff99b1,#ff92a9,#ff8ba2,#ff849b,#ff7e94,#ff788e,#ff7288,#ff6c81,#ff677b,#ff6176,#ff5b70,#ff566a,#ff5065,#ff4b5f,#ff455a,#ff4054,#ff3a4e,#ff3449,#ff2e43,#ff273d,#ff1f37,#ff1631,#ff082a,#ff0023)"></i><i style="left:79px;top:352px;width:378px;background:linear-gradient(90deg,#00e4ff,#00e4ff,#00e4ff,#00e4ff,#00e4ff,#00e3ff,#00e3ff,#00e3ff,#00e3ff,#00e3ff,#00e3ff,#00e2ff,#00e2ff,#00e2ff,#00e2ff,#00e1ff,#23e1ff,#3de1ff,#50e1ff,#60e0ff,#6fe0ff,#7de0ff,#8adfff,#97dfff,#a3dfff,#b0deff,#bcdeff,#c8deff,#d4ddff,#e0ddff,#eddcff,#f9dcff,#ffd6f9,#ffcbed,#ffc1e2,#ffb8d8,#ffb0cf,#ffa7c6,#ffa0bd,#ff98b5,#ff91ad,#ff8aa6,#ff849f,#ff7d98,#ff7792,#ff718b,#ff6b85,#ff667f,#ff607a,#ff5b74,#ff556e,#ff4f69,#ff4a63,#ff445e,#ff3f58,#ff3953,#ff334e,#ff2c48,#ff2543,#ff1e3d,#ff1437,#ff0031,#ff002a,#ff0023)"></i><i style="left:80px;top:354px;width:379px;background:linear-gradient(90deg,#00e2ff,#00e2ff,#00e1ff,#00e1ff,#00e1ff,#00e1ff,#00e1ff,#00e0ff,#00e0ff,#00e0ff,#00e0ff,#00dfff,#00dfff,#00dfff,#00dfff,#00deff,#2bdeff,#42deff,#54ddff,#64ddff,#72ddff,#80dcff,#8ddcff,#99dbff,#a6dbff,#b2daff,#bedaff,#cad9ff,#d6d9ff,#e2d8ff,#eed8ff,#fbd7ff,#ffd0f7,#ffc5ec,#ffbce1,#ffb3d7,#ffaace,#ffa2c5,#ff9bbc,#ff93b5,#ff8cad,#ff86a6,#ff7f9f,#ff7998,#ff7392,#ff6d8b,#ff6785,#ff617f,#ff5b7a,#ff5674,#ff506e,#ff4b69,#ff4563,#ff3f5e,#ff3959,#ff3353,#ff2d4e,#ff2649,#ff1e43,#ff143d,#ff0038,#ff0031,#ff002b,#ff0024)"></i><i style="left:80px;top:356px;width:381px;background:linear-gradient(90deg,#00dfff,#00dfff,#00dfff,#00dfff,#00dfff,#00deff,#00deff,#00deff,#00ddff,#00ddff,#00ddff,#00ddff,#00dcff,#00dcff,#00dcff,#00dbff,#28dbff,#3fdbff,#51daff,#61daff,#70d9ff,#7dd9ff,#8ad8ff,#96d8ff,#a2d7ff,#aed7ff,#bad6ff,#c6d6ff,#d2d5ff,#ddd4ff,#e9d4ff,#f5d3ff,#ffd0fc,#ffc6f1,#ffbce6,#ffb3dc,#ffaad3,#ffa2ca,#ff9bc1,#ff93b9,#ff8cb2,#ff86aa,#ff7fa3,#ff799d,#ff7396,#ff6d90,#ff678a,#ff6184,#ff5b7e,#ff5679,#ff5073,#ff4a6e,#ff4568,#ff3f63,#ff395e,#ff3358,#ff2c53,#ff254e,#ff1d49,#ff1343,#ff003e,#ff0038,#ff0032,#ff002c,#ff0025)"></i><i style="left:80px;top:358px;width:383px;background:linear-gradient(90deg,#00ddff,#00ddff,#00ddff,#00dcff,#00dcff,#00dcff,#00dbff,#00dbff,#00dbff,#00daff,#00daff,#00daff,#00d9ff,#00d9ff,#00d9ff,#00d8ff,#2cd8ff,#42d7ff,#54d7ff,#63d6ff,#71d6ff,#7fd5ff,#8bd5ff,#98d4ff,#a4d4ff,#afd3ff,#bbd2ff,#c7d2ff,#d3d1ff,#ded0ff,#eacfff,#f6ceff,#ffcbfc,#ffc1f0,#ffb7e6,#ffaedc,#ffa6d2,#ff9eca,#ff96c1,#ff8fb9,#ff88b2,#ff81aa,#ff7ba3,#ff749d,#ff6e96,#ff6890,#ff628a,#ff5c84,#ff577e,#ff5179,#ff4b73,#ff456e,#ff4069,#ff3963,#ff335e,#ff2d59,#ff2554,#ff1d4e,#ff1349,#ff0044,#ff003e,#ff0039,#ff0033,#ff002d,#ff0026)"></i><i style="left:81px;top:360px;width:384px;background:linear-gradient(90deg,#00dbff,#00daff,#00daff,#00daff,#00d9ff,#00d9ff,#00d9ff,#00d8ff,#00d8ff,#00d8ff,#00d7ff,#00d7ff,#00d6ff,#00d6ff,#00d6ff,#14d5ff,#33d5ff,#47d4ff,#58d4ff,#67d3ff,#74d2ff,#81d2ff,#8ed1ff,#9ad0ff,#a6d0ff,#b2cfff,#bdceff,#c9cdff,#d5cdff,#e0ccff,#eccbff,#f8caff,#ffc5fa,#ffbbef,#ffb2e4,#ffa9db,#ffa1d1,#ff99c9,#ff91c0,#ff8ab9,#ff83b1,#ff7caa,#ff76a3,#ff709d,#ff6996,#ff6390,#ff5e8a,#ff5884,#ff527e,#ff4c79,#ff4673,#ff406e,#ff3a69,#ff3464,#ff2d5e,#ff2559,#ff1d54,#ff134f,#ff004a,#ff0044,#ff003f,#ff0039,#ff0034,#ff002d,#ff0027)"></i><i style="left:81px;top:362px;width:386px;background:linear-gradient(90deg,#00d8ff,#00d8ff,#00d8ff,#00d7ff,#00d7ff,#00d7ff,#00d6ff,#00d6ff,#00d5ff,#00d5ff,#00d5ff,#00d4ff,#00d4ff,#00d3ff,#00d3ff,#1bd2ff,#36d1ff,#49d1ff,#5ad0ff,#68d0ff,#76cfff,#83ceff,#8fceff,#9bcdff,#a7ccff,#b3cbff,#becaff,#cac9ff,#d5c8ff,#e1c7ff,#edc6ff,#f8c5ff,#ffc0fa,#ffb6ef,#ffade4,#ffa4da,#ff9cd1,#ff94c9,#ff8dc0,#ff85b9,#ff7fb1,#ff78aa,#ff71a3,#ff6b9d,#ff6596,#ff5f90,#ff598a,#ff5384,#ff4d7f,#ff4779,#ff4174,#ff3b6e,#ff3469,#ff2d64,#ff265f,#ff1d5a,#ff1355,#ff004f,#ff004a,#ff0045,#ff0040,#ff003a,#ff0034,#ff002e,#ff0028)"></i><i style="left:82px;top:364px;width:388px;background:linear-gradient(90deg,#00d6ff,#00d6ff,#00d5ff,#00d5ff,#00d4ff,#00d4ff,#00d4ff,#00d3ff,#00d3ff,#00d2ff,#00d2ff,#00d1ff,#00d1ff,#00d0ff,#00d0ff,#1ecfff,#37ceff,#4aceff,#5acdff,#68ccff,#76ccff,#82cbff,#8ecaff,#9ac9ff,#a6c8ff,#b1c8ff,#bdc7ff,#c8c6ff,#d3c4ff,#dec3ff,#eac2ff,#f5c1ff,#ffbefd,#ffb4f2,#ffabe7,#ffa3de,#ff9ad4,#ff93cc,#ff8bc4,#ff84bc,#ff7db4,#ff77ad,#ff70a6,#ff6aa0,#ff649a,#ff5d93,#ff578e,#ff5188,#ff4b82,#ff457d,#ff3f77,#ff3972,#ff326d,#ff2b68,#ff2463,#ff1b5e,#ff0f59,#ff0054,#ff004e,#ff0049,#ff0044,#ff003f,#ff003a,#ff0034,#ff002e,#ff0028)"></i><i style="left:82px;top:366px;width:390px;background:linear-gradient(90deg,#00d4ff,#00d3ff,#00d3ff,#00d2ff,#00d2ff,#00d2ff,#00d1ff,#00d1ff,#00d0ff,#00d0ff,#00cfff,#00ceff,#00ceff,#00cdff,#00cdff,#22ccff,#3acbff,#4ccbff,#5ccaff,#6ac9ff,#77c8ff,#84c7ff,#90c7ff,#9bc6ff,#a7c5ff,#b2c4ff,#bdc3ff,#c9c2ff,#d4c0ff,#dfbfff,#ebbeff,#f6bcff,#ffb9fc,#ffaff1,#ffa6e7,#ff9edd,#ff96d4,#ff8ecc,#ff87c3,#ff80bc,#ff79b4,#ff72ad,#ff6ca7,#ff65a0,#ff5f9a,#ff5994,#ff538e,#ff4d88,#ff4682,#ff407d,#ff3a78,#ff3372,#ff2c6d,#ff2468,#ff1b63,#ff0f5e,#ff0059,#ff0054,#ff004f,#ff004a,#ff0045,#ff0040,#ff003a,#ff0035,#ff002f,#ff0028)"></i><i style="left:83px;top:368px;width:391px;background:linear-gradient(90deg,#00d1ff,#00d1ff,#00d0ff,#00d0ff,#00cfff,#00cfff,#00ceff,#00ceff,#00cdff,#00cdff,#00ccff,#00ccff,#00cbff,#00caff,#00caff,#2ac9ff,#3fc8ff,#50c7ff,#5fc7ff,#6dc6ff,#7ac5ff,#86c4ff,#92c3ff,#9ec2ff,#a9c1ff,#b4c0ff,#c0bfff,#cbbdff,#d6bcff,#e1bbff,#ecb9ff,#f8b8ff,#ffb3fb,#ffaaf0,#ffa1e6,#ff98dc,#ff90d3,#ff89cb,#ff82c3,#ff7abb,#ff74b4,#ff6dad,#ff67a6,#ff60a0,#ff5a99,#ff5493,#ff4d8e,#ff4788,#ff4182,#ff3a7d,#ff3378,#ff2c72,#ff246d,#ff1b68,#ff0f63,#ff005e,#ff0059,#ff0054,#ff004f,#ff004a,#ff0045,#ff0040,#ff003b,#ff0035,#ff0030,#ff0029)"></i><i style="left:83px;top:370px;width:393px;background:linear-gradient(90deg,#00cfff,#00cfff,#00ceff,#00ceff,#00cdff,#00cdff,#00ccff,#00cbff,#00cbff,#00caff,#00caff,#00c9ff,#00c8ff,#00c8ff,#00c7ff,#27c6ff,#3dc5ff,#4ec4ff,#5dc4ff,#6bc3ff,#78c2ff,#84c1ff,#8fc0ff,#9bbfff,#a6beff,#b1bcff,#bcbbff,#c7baff,#d2b9ff,#ddb7ff,#e8b6ff,#f3b4ff,#feb2ff,#ffa9f5,#ffa0eb,#ff98e1,#ff90d8,#ff88cf,#ff81c7,#ff7ac0,#ff73b8,#ff6cb1,#ff66aa,#ff60a4,#ff599e,#ff5398,#ff4d92,#ff468c,#ff4087,#ff3981,#ff337c,#ff2b77,#ff2372,#ff1a6d,#ff0c68,#ff0063,#ff005e,#ff0059,#ff0054,#ff004f,#ff004a,#ff0045,#ff0040,#ff003b,#ff0036,#ff0030,#ff002a)"></i><i style="left:84px;top:372px;width:394px;background:linear-gradient(90deg,#00cdff,#00ccff,#00ccff,#00cbff,#00cbff,#00caff,#00c9ff,#00c9ff,#00c8ff,#00c7ff,#00c7ff,#00c6ff,#00c5ff,#00c5ff,#0cc4ff,#2ec3ff,#42c2ff,#52c1ff,#61c0ff,#6ebfff,#7abeff,#86bdff,#92bcff,#9dbbff,#a8baff,#b3b9ff,#beb7ff,#c9b6ff,#d4b4ff,#deb3ff,#e9b1ff,#f4afff,#ffadfe,#ffa4f4,#ff9be9,#ff93e0,#ff8bd7,#ff83cf,#ff7cc7,#ff75bf,#ff6eb8,#ff67b1,#ff61aa,#ff5aa4,#ff549d,#ff4e97,#ff4792,#ff418c,#ff3a87,#ff3381,#ff2c7c,#ff2377,#ff1a72,#ff0c6d,#ff0068,#ff0063,#ff005e,#ff0059,#ff0055,#ff0050,#ff004b,#ff0046,#ff0041,#ff003c,#ff0036,#ff0031,#ff002b)"></i><i style="left:84px;top:374px;width:397px;background:linear-gradient(90deg,#00caff,#00caff,#00c9ff,#00c9ff,#00c8ff,#00c7ff,#00c7ff,#00c6ff,#00c5ff,#00c5ff,#00c4ff,#00c3ff,#00c3ff,#00c2ff,#16c1ff,#32c0ff,#45bfff,#55beff,#63bdff,#70bcff,#7cbbff,#88baff,#94b9ff,#9fb7ff,#aab6ff,#b5b5ff,#c0b3ff,#cab2ff,#d5b0ff,#e0aeff,#ebacff,#f6abff,#ffa7fd,#ff9ef2,#ff95e8,#ff8ddf,#ff85d6,#ff7ece,#ff76c6,#ff6fbe,#ff69b7,#ff62b0,#ff5ba9,#ff55a3,#ff4e9d,#ff4897,#ff4191,#ff3a8c,#ff3386,#ff2b81,#ff237c,#ff1976,#ff0a71,#ff006c,#ff0067,#ff0063,#ff005e,#ff0059,#ff0054,#ff004f,#ff004b,#ff0046,#ff0041,#ff003c,#ff0036,#ff0031,#ff002b)"></i><i style="left:85px;top:376px;width:398px;background:linear-gradient(90deg,#00c8ff,#00c7ff,#00c7ff,#00c6ff,#00c6ff,#00c5ff,#00c4ff,#00c4ff,#00c3ff,#00c2ff,#00c1ff,#00c0ff,#00c0ff,#00bfff,#1fbeff,#37bdff,#49bcff,#58bbff,#66baff,#73b9ff,#7fb7ff,#8bb6ff,#96b5ff,#a1b4ff,#acb2ff,#b7b1ff,#c1afff,#ccadff,#d7acff,#e2aaff,#eda8ff,#f7a6ff,#ffa1fb,#ff98f1,#ff90e7,#ff88de,#ff80d5,#ff78cd,#ff71c5,#ff6abe,#ff63b6,#ff5db0,#ff56a9,#ff4fa3,#ff499d,#ff4297,#ff3b91,#ff348b,#ff2c86,#ff2381,#ff197c,#ff0a76,#ff0071,#ff006d,#ff0068,#ff0063,#ff005e,#ff0059,#ff0055,#ff0050,#ff004b,#ff0046,#ff0041,#ff003c,#ff0037,#ff0031,#ff002c)"></i><i style="left:85px;top:378px;width:400px;background:linear-gradient(90deg,#00c6ff,#00c5ff,#00c5ff,#00c4ff,#00c3ff,#00c3ff,#00c2ff,#00c1ff,#00c0ff,#00c0ff,#00bfff,#00beff,#00bdff,#00bcff,#1dbbff,#35baff,#47b9ff,#57b8ff,#64b7ff,#71b6ff,#7db4ff,#88b3ff,#93b2ff,#9eb0ff,#a9afff,#b4adff,#beacff,#c9aaff,#d3a8ff,#dea6ff,#e8a4ff,#f3a2ff,#fea0ff,#ff98f6,#ff8fec,#ff87e2,#ff7fda,#ff78d1,#ff70c9,#ff69c2,#ff63bb,#ff5cb4,#ff55ad,#ff4ea7,#ff48a1,#ff419b,#ff3a95,#ff328f,#ff2a8a,#ff2285,#ff1780,#ff037b,#ff0076,#ff0071,#ff006c,#ff0067,#ff0062,#ff005e,#ff0059,#ff0054,#ff0050,#ff004b,#ff0046,#ff0041,#ff003c,#ff0037,#ff0032,#ff002c)"></i><i style="left:85px;top:380px;width:402px;background:linear-gradient(90deg,#00c4ff,#00c3ff,#00c2ff,#00c2ff,#00c1ff,#00c0ff,#00bfff,#00bfff,#00beff,#00bdff,#00bcff,#00bbff,#00baff,#00b9ff,#21b8ff,#38b7ff,#49b6ff,#58b5ff,#66b4ff,#72b2ff,#7eb1ff,#89b0ff,#95aeff,#9fadff,#aaabff,#b4aaff,#bfa8ff,#c9a6ff,#d4a4ff,#dea2ff,#e9a0ff,#f49eff,#fe9bff,#ff93f5,#ff8aeb,#ff82e2,#ff7ad9,#ff73d1,#ff6cc9,#ff64c2,#ff5dbb,#ff57b4,#ff50ad,#ff49a7,#ff42a1,#ff3b9b,#ff3395,#ff2b90,#ff228a,#ff1885,#ff0580,#ff007b,#ff0076,#ff0071,#ff006c,#ff0067,#ff0063,#ff005e,#ff0059,#ff0055,#ff0050,#ff004b,#ff0047,#ff0042,#ff003d,#ff0038,#ff0033,#ff002d)"></i><i style="left:86px;top:382px;width:403px;background:linear-gradient(90deg,#00c1ff,#00c0ff,#00c0ff,#00bfff,#00beff,#00beff,#00bdff,#00bcff,#00bbff,#00baff,#00b9ff,#00b8ff,#00b7ff,#00b6ff,#28b5ff,#3db4ff,#4db3ff,#5cb2ff,#69b0ff,#75afff,#81aeff,#8cacff,#97abff,#a1a9ff,#aca7ff,#b6a6ff,#c1a4ff,#cba2ff,#d6a0ff,#e09eff,#ea9bff,#f599ff,#ff96fe,#ff8df4,#ff85ea,#ff7de1,#ff75d8,#ff6dd0,#ff66c9,#ff5fc1,#ff58ba,#ff51b3,#ff4aad,#ff43a7,#ff3ca1,#ff349b,#ff2c95,#ff2390,#ff188a,#ff0585,#ff0080,#ff007b,#ff0076,#ff0071,#ff006c,#ff0068,#ff0063,#ff005e,#ff005a,#ff0055,#ff0051,#ff004c,#ff0047,#ff0042,#ff003e,#ff0038,#ff0033,#ff002e)"></i><i style="left:86px;top:384px;width:405px;background:linear-gradient(90deg,#00bfff,#00beff,#00bdff,#00bdff,#00bcff,#00bbff,#00baff,#00b9ff,#00b9ff,#00b8ff,#00b7ff,#00b6ff,#00b5ff,#00b4ff,#26b2ff,#3bb1ff,#4cb0ff,#5aafff,#67aeff,#73acff,#7eabff,#8aa9ff,#94a8ff,#9fa6ff,#a9a4ff,#b3a3ff,#bea1ff,#c89fff,#d29dff,#dc9aff,#e698ff,#f195ff,#fb93ff,#ff8cf8,#ff84ef,#ff7ce5,#ff74dd,#ff6cd4,#ff65cd,#ff5ec5,#ff57be,#ff50b7,#ff49b1,#ff41ab,#ff3aa4,#ff329f,#ff2a99,#ff2193,#ff158e,#ff0089,#ff0084,#ff007f,#ff007a,#ff0075,#ff0070,#ff006c,#ff0067,#ff0063,#ff005e,#ff005a,#ff0055,#ff0050,#ff004c,#ff0047,#ff0043,#ff003e,#ff0039,#ff0034,#ff002e)"></i><i style="left:87px;top:386px;width:407px;background:linear-gradient(90deg,#00bdff,#00bcff,#00bbff,#00baff,#00b9ff,#00b9ff,#00b8ff,#00b7ff,#00b6ff,#00b5ff,#00b4ff,#00b3ff,#00b2ff,#0fb1ff,#2dafff,#40aeff,#50adff,#5eacff,#6aaaff,#76a9ff,#81a7ff,#8ca6ff,#97a4ff,#a1a2ff,#aca0ff,#b69eff,#c09cff,#ca9aff,#d498ff,#de96ff,#e993ff,#f390ff,#fd8dff,#ff86f6,#ff7ded,#ff75e4,#ff6edb,#ff66d3,#ff5fcb,#ff57c4,#ff50bd,#ff49b6,#ff42b0,#ff3aaa,#ff32a4,#ff2a9e,#ff2098,#ff1493,#ff008d,#ff0088,#ff0083,#ff007e,#ff0079,#ff0075,#ff0070,#ff006b,#ff0067,#ff0062,#ff005e,#ff0059,#ff0055,#ff0050,#ff004c,#ff0047,#ff0042,#ff003e,#ff0039,#ff0034,#ff002e)"></i><i style="left:87px;top:388px;width:407px;background:linear-gradient(90deg,#00baff,#00baff,#00b9ff,#00b8ff,#00b7ff,#00b6ff,#00b5ff,#00b4ff,#00b3ff,#00b2ff,#00b1ff,#00b0ff,#00afff,#12aeff,#2fadff,#41abff,#50aaff,#5ea9ff,#6ba7ff,#76a6ff,#82a4ff,#8ca2ff,#97a1ff,#a19fff,#ab9dff,#b69bff,#c099ff,#ca96ff,#d494ff,#de92ff,#e88fff,#f28cff,#fc89ff,#ff82f8,#ff79ee,#ff71e5,#ff6adc,#ff62d4,#ff5bcd,#ff53c5,#ff4cbe,#ff45b7,#ff3db1,#ff35ab,#ff2da5,#ff239f,#ff1899,#ff0294,#ff008f,#ff008a,#ff0085,#ff0080,#ff007b,#ff0076,#ff0071,#ff006d,#ff0068,#ff0064,#ff005f,#ff005b,#ff0056,#ff0052,#ff004d,#ff0049,#ff0044,#ff0040,#ff003b,#ff0036,#ff0031)"></i><i style="left:88px;top:390px;width:404px;background:linear-gradient(90deg,#00b8ff,#00b7ff,#00b6ff,#00b5ff,#00b5ff,#00b4ff,#00b3ff,#00b2ff,#00b1ff,#00afff,#00aeff,#00adff,#00acff,#1eabff,#35a9ff,#46a8ff,#55a7ff,#62a5ff,#6ea4ff,#7aa2ff,#85a0ff,#909fff,#9a9dff,#a49bff,#af99ff,#b996ff,#c394ff,#cd92ff,#d78fff,#e18cff,#eb8aff,#f586ff,#ff83ff,#ff7af5,#ff72eb,#ff6ae2,#ff62da,#ff5bd2,#ff53ca,#ff4cc3,#ff44bc,#ff3cb6,#ff34af,#ff2ba9,#ff22a3,#ff159e,#ff0098,#ff0093,#ff008d,#ff0088,#ff0083,#ff007e,#ff007a,#ff0075,#ff0070,#ff006c,#ff0067,#ff0063,#ff005e,#ff005a,#ff0055,#ff0051,#ff004c,#ff0048,#ff0043,#ff003f,#ff003a,#ff0035)"></i><i style="left:88px;top:392px;width:399px;background:linear-gradient(90deg,#00b6ff,#00b5ff,#00b4ff,#00b3ff,#00b2ff,#00b1ff,#00b0ff,#00afff,#00aeff,#00adff,#00acff,#00abff,#00a9ff,#21a8ff,#37a7ff,#48a5ff,#56a4ff,#63a2ff,#6fa0ff,#7b9fff,#869dff,#909bff,#9b99ff,#a597ff,#af95ff,#b993ff,#c390ff,#cd8eff,#d78bff,#e188ff,#eb85ff,#f582ff,#ff7eff,#ff76f5,#ff6eec,#ff66e3,#ff5eda,#ff56d3,#ff4ecb,#ff46c4,#ff3fbd,#ff36b6,#ff2eb0,#ff24aa,#ff18a4,#ff009e,#ff0099,#ff0093,#ff008e,#ff0089,#ff0084,#ff007f,#ff007a,#ff0076,#ff0071,#ff006d,#ff0068,#ff0064,#ff005f,#ff005b,#ff0056,#ff0052,#ff004d,#ff0049,#ff0044,#ff0040,#ff003b)"></i><i style="left:89px;top:394px;width:393px;background:linear-gradient(90deg,#00b3ff,#00b3ff,#00b2ff,#00b1ff,#00b0ff,#00afff,#00aeff,#00adff,#00abff,#00aaff,#00a9ff,#00a8ff,#00a7ff,#22a5ff,#37a4ff,#48a2ff,#56a1ff,#629fff,#6e9eff,#799cff,#849aff,#8f98ff,#9996ff,#a394ff,#ac92ff,#b690ff,#c08dff,#ca8bff,#d388ff,#dd85ff,#e782ff,#f17fff,#fb7bff,#ff75f9,#ff6cf0,#ff64e7,#ff5cdf,#ff55d7,#ff4dcf,#ff45c8,#ff3dc1,#ff35bb,#ff2cb4,#ff22ae,#ff15a8,#ff00a2,#ff009d,#ff0098,#ff0092,#ff008d,#ff0088,#ff0083,#ff007f,#ff007a,#ff0076,#ff0071,#ff006d,#ff0068,#ff0064,#ff005f,#ff005b,#ff0057,#ff0053,#ff004e,#ff004a,#ff0045,#ff0041)"></i><i style="left:90px;top:396px;width:388px;background:linear-gradient(90deg,#00b1ff,#00b0ff,#00afff,#00aeff,#00adff,#00acff,#00abff,#00aaff,#00a9ff,#00a8ff,#00a6ff,#00a5ff,#00a4ff,#29a2ff,#3ca1ff,#4b9fff,#599eff,#659cff,#719aff,#7c98ff,#8697ff,#9195ff,#9b92ff,#a590ff,#ae8eff,#b88bff,#c289ff,#cb86ff,#d583ff,#df80ff,#e87dff,#f279ff,#fc76ff,#ff6ef8,#ff66ef,#ff5ee6,#ff56de,#ff4ed6,#ff46cf,#ff3ec7,#ff36c1,#ff2dba,#ff22b4,#ff16ae,#ff00a8,#ff00a2,#ff009d,#ff0097,#ff0092,#ff008d,#ff0088,#ff0083,#ff007f,#ff007a,#ff0076,#ff0071,#ff006d,#ff0068,#ff0064,#ff0060,#ff005b,#ff0057,#ff0053,#ff004f,#ff004a,#ff0046)"></i><i style="left:90px;top:398px;width:383px;background:linear-gradient(90deg,#00afff,#00aeff,#00adff,#00acff,#00abff,#00aaff,#00a9ff,#00a7ff,#00a6ff,#00a5ff,#00a4ff,#00a2ff,#0ba1ff,#2b9fff,#3d9eff,#4c9cff,#5a9bff,#6699ff,#7297ff,#7c95ff,#8793ff,#9191ff,#9b8fff,#a58dff,#af8aff,#b888ff,#c285ff,#cb82ff,#d57fff,#de7cff,#e878ff,#f275ff,#fc71ff,#ff6af9,#ff61ef,#ff59e7,#ff51de,#ff49d6,#ff41cf,#ff38c8,#ff2fc1,#ff25bb,#ff19b4,#ff00ae,#ff00a8,#ff00a3,#ff009d,#ff0098,#ff0093,#ff008e,#ff0089,#ff0084,#ff007f,#ff007b,#ff0076,#ff0072,#ff006d,#ff0069,#ff0065,#ff0061,#ff005c,#ff0058,#ff0054,#ff0050,#ff004b)"></i><i style="left:91px;top:400px;width:377px;background:linear-gradient(90deg,#00adff,#00acff,#00abff,#00a9ff,#00a8ff,#00a7ff,#00a6ff,#00a5ff,#00a4ff,#00a2ff,#00a1ff,#009fff,#169eff,#2f9cff,#419bff,#4f99ff,#5c97ff,#6896ff,#7494ff,#7e92ff,#8990ff,#938eff,#9d8bff,#a689ff,#b086ff,#b984ff,#c381ff,#cc7eff,#d67bff,#df77ff,#e973ff,#f26fff,#fc6bff,#ff64f8,#ff5bef,#ff53e6,#ff4bde,#ff42d6,#ff3acf,#ff31c8,#ff27c1,#ff1bbb,#ff07b5,#ff00af,#ff00a9,#ff00a3,#ff009e,#ff0098,#ff0093,#ff008e,#ff008a,#ff0085,#ff0080,#ff007c,#ff0077,#ff0073,#ff006e,#ff006a,#ff0066,#ff0061,#ff005d,#ff0059,#ff0055,#ff0050)"></i><i style="left:91px;top:402px;width:372px;background:linear-gradient(90deg,#00aaff,#00a9ff,#00a8ff,#00a7ff,#00a6ff,#00a5ff,#00a4ff,#00a2ff,#00a1ff,#00a0ff,#009eff,#009dff,#199bff,#319aff,#4298ff,#5196ff,#5d94ff,#6993ff,#7491ff,#7f8fff,#898cff,#938aff,#9d88ff,#a785ff,#b083ff,#b980ff,#c37dff,#cc7aff,#d676ff,#df73ff,#e96fff,#f26bff,#fc66ff,#ff5ff8,#ff56ef,#ff4ee7,#ff45df,#ff3cd7,#ff33cf,#ff29c8,#ff1ec2,#ff0dbb,#ff00b5,#ff00af,#ff00a9,#ff00a4,#ff009e,#ff0099,#ff0094,#ff008f,#ff008a,#ff0085,#ff0081,#ff007c,#ff0078,#ff0073,#ff006f,#ff006b,#ff0066,#ff0062,#ff005e,#ff005a,#ff0056)"></i><i style="left:92px;top:404px;width:367px;background:linear-gradient(90deg,#00a8ff,#00a7ff,#00a6ff,#00a5ff,#00a3ff,#00a2ff,#00a1ff,#00a0ff,#009eff,#009dff,#009bff,#009aff,#2198ff,#3697ff,#4695ff,#5493ff,#6091ff,#6c8fff,#778dff,#818bff,#8b89ff,#9586ff,#9f84ff,#a881ff,#b27eff,#bb7bff,#c578ff,#ce75ff,#d771ff,#e16dff,#ea69ff,#f465ff,#fd60ff,#ff58f7,#ff4fee,#ff46e6,#ff3dde,#ff34d6,#ff2acf,#ff1ec8,#ff0dc1,#ff00bb,#ff00b5,#ff00af,#ff00a9,#ff00a3,#ff009e,#ff0099,#ff0094,#ff008f,#ff008a,#ff0085,#ff0081,#ff007c,#ff0078,#ff0073,#ff006f,#ff006b,#ff0066,#ff0062,#ff005e,#ff005a)"></i><i style="left:92px;top:406px;width:362px;background:linear-gradient(90deg,#00a6ff,#00a5ff,#00a4ff,#00a2ff,#00a1ff,#00a0ff,#009fff,#009dff,#009cff,#009aff,#0099ff,#0097ff,#2495ff,#3894ff,#4792ff,#5590ff,#618eff,#6d8cff,#778aff,#8288ff,#8c85ff,#9683ff,#9f80ff,#a97dff,#b27aff,#bb77ff,#c574ff,#ce71ff,#d76dff,#e169ff,#ea64ff,#f460ff,#fd5aff,#ff52f7,#ff49ee,#ff40e6,#ff37de,#ff2dd6,#ff21cf,#ff11c8,#ff00c2,#ff00bb,#ff00b5,#ff00af,#ff00a9,#ff00a4,#ff009f,#ff0099,#ff0094,#ff008f,#ff008b,#ff0086,#ff0081,#ff007d,#ff0078,#ff0074,#ff0070,#ff006b,#ff0067,#ff0063,#ff005f)"></i><i style="left:93px;top:408px;width:356px;background:linear-gradient(90deg,#00a3ff,#00a2ff,#00a1ff,#00a0ff,#009fff,#009dff,#009cff,#009aff,#0099ff,#0097ff,#0096ff,#0794ff,#2992ff,#3b91ff,#4a8fff,#578dff,#638bff,#6f89ff,#7986ff,#8384ff,#8d82ff,#977fff,#a17cff,#aa79ff,#b376ff,#bd73ff,#c670ff,#cf6cff,#d868ff,#e163ff,#eb5fff,#f45aff,#fe54ff,#ff4bf7,#ff42ee,#ff39e6,#ff2fde,#ff23d6,#ff14cf,#ff00c8,#ff00c2,#ff00bb,#ff00b5,#ff00af,#ff00aa,#ff00a4,#ff009f,#ff009a,#ff0095,#ff0090,#ff008b,#ff0086,#ff0082,#ff007d,#ff0079,#ff0075,#ff0070,#ff006c,#ff0068,#ff0064)"></i><i style="left:93px;top:410px;width:352px;background:linear-gradient(90deg,#00a1ff,#00a0ff,#009fff,#009eff,#009cff,#009bff,#009aff,#0098ff,#0097ff,#0095ff,#0093ff,#0092ff,#2790ff,#3a8eff,#498cff,#568aff,#6288ff,#6d86ff,#7784ff,#8181ff,#8b7fff,#957cff,#9e7aff,#a777ff,#b073ff,#ba70ff,#c36dff,#cc69ff,#d565ff,#de60ff,#e75cff,#f057ff,#f951ff,#ff4afb,#ff40f2,#ff36ea,#ff2ce2,#ff20da,#ff0fd3,#ff00cc,#ff00c6,#ff00bf,#ff00b9,#ff00b3,#ff00ae,#ff00a8,#ff00a3,#ff009e,#ff0099,#ff0094,#ff008f,#ff008a,#ff0086,#ff0081,#ff007d,#ff0079,#ff0074,#ff0070,#ff006c,#ff0068)"></i><i style="left:94px;top:412px;width:346px;background:linear-gradient(90deg,#009fff,#009eff,#009cff,#009bff,#009aff,#0098ff,#0097ff,#0095ff,#0094ff,#0092ff,#0091ff,#128fff,#2c8dff,#3d8bff,#4c89ff,#5887ff,#6485ff,#6f83ff,#7980ff,#837eff,#8d7bff,#9678ff,#9f76ff,#a972ff,#b26fff,#bb6cff,#c468ff,#cc64ff,#d560ff,#de5bff,#e756ff,#f150ff,#fa4aff,#ff42fb,#ff38f2,#ff2eea,#ff22e2,#ff12da,#ff00d3,#ff00cc,#ff00c6,#ff00c0,#ff00b9,#ff00b4,#ff00ae,#ff00a9,#ff00a3,#ff009e,#ff0099,#ff0094,#ff0090,#ff008b,#ff0086,#ff0082,#ff007e,#ff0079,#ff0075,#ff0071,#ff006d)"></i><i style="left:95px;top:414px;width:340px;background:linear-gradient(90deg,#009cff,#009bff,#009aff,#0099ff,#0097ff,#0096ff,#0094ff,#0093ff,#0091ff,#008fff,#008eff,#1a8cff,#308aff,#4188ff,#4e86ff,#5b84ff,#6682ff,#717fff,#7b7dff,#857aff,#8e77ff,#9875ff,#a172ff,#aa6eff,#b36bff,#bc67ff,#c463ff,#cd5fff,#d65bff,#df56ff,#e850ff,#f14aff,#fa43ff,#ff3bfb,#ff30f2,#ff24ea,#ff14e2,#ff00da,#ff00d3,#ff00cc,#ff00c6,#ff00c0,#ff00ba,#ff00b4,#ff00ae,#ff00a9,#ff00a4,#ff009e,#ff009a,#ff0095,#ff0090,#ff008b,#ff0087,#ff0082,#ff007e,#ff007a,#ff0076,#ff0072)"></i><i style="left:95px;top:416px;width:336px;background:linear-gradient(90deg,#009aff,#0099ff,#0098ff,#0096ff,#0095ff,#0093ff,#0092ff,#0090ff,#008eff,#008dff,#008bff,#1e89ff,#3387ff,#4385ff,#5083ff,#5c81ff,#677eff,#727cff,#7c79ff,#8677ff,#8f74ff,#9971ff,#a26eff,#ab6aff,#b467ff,#bc63ff,#c55eff,#ce5aff,#d755ff,#e050ff,#e94aff,#f243ff,#fb3cff,#ff32fa,#ff26f1,#ff16e9,#ff00e1,#ff00da,#ff00d3,#ff00cc,#ff00c6,#ff00bf,#ff00b9,#ff00b4,#ff00ae,#ff00a9,#ff00a3,#ff009e,#ff0099,#ff0095,#ff0090,#ff008b,#ff0087,#ff0082,#ff007e,#ff007a,#ff0076)"></i><i style="left:96px;top:418px;width:330px;background:linear-gradient(90deg,#0098ff,#0097ff,#0095ff,#0094ff,#0092ff,#0091ff,#008fff,#008dff,#008cff,#008aff,#0088ff,#2486ff,#3784ff,#4682ff,#5380ff,#5e7dff,#697bff,#7478ff,#7e76ff,#8773ff,#9170ff,#9a6dff,#a369ff,#ac66ff,#b562ff,#bd5eff,#c659ff,#cf55ff,#d84fff,#e14aff,#ea43ff,#f23cff,#fc33ff,#ff28f9,#ff19f1,#ff00e9,#ff00e1,#ff00da,#ff00d3,#ff00cc,#ff00c6,#ff00bf,#ff00b9,#ff00b4,#ff00ae,#ff00a9,#ff00a4,#ff009f,#ff009a,#ff0095,#ff0090,#ff008c,#ff0087,#ff0083,#ff007f,#ff007a)"></i><i style="left:96px;top:420px;width:325px;background:linear-gradient(90deg,#0096ff,#0094ff,#0093ff,#0091ff,#0090ff,#008eff,#008dff,#008bff,#0089ff,#0087ff,#0085ff,#2683ff,#3881ff,#477fff,#547dff,#5f7aff,#6a78ff,#7475ff,#7e72ff,#886fff,#916cff,#9a69ff,#a365ff,#ac62ff,#b55eff,#be59ff,#c655ff,#cf50ff,#d84aff,#e144ff,#ea3dff,#f234ff,#fb2aff,#ff1dfa,#ff00f1,#ff00e9,#ff00e1,#ff00da,#ff00d3,#ff00cc,#ff00c6,#ff00c0,#ff00ba,#ff00b4,#ff00af,#ff00a9,#ff00a4,#ff009f,#ff009a,#ff0095,#ff0091,#ff008c,#ff0088,#ff0083,#ff007f)"></i><i style="left:97px;top:422px;width:319px;background:linear-gradient(90deg,#0093ff,#0092ff,#0090ff,#008fff,#008dff,#008cff,#008aff,#0088ff,#0086ff,#0084ff,#1082ff,#2b80ff,#3c7eff,#4a7cff,#5679ff,#6177ff,#6c74ff,#7671ff,#806fff,#896bff,#9368ff,#9c65ff,#a561ff,#ad5dff,#b659ff,#bf54ff,#c74fff,#d04aff,#d944ff,#e13dff,#ea35ff,#f32bff,#fc1fff,#ff08f9,#ff00f1,#ff00e9,#ff00e1,#ff00da,#ff00d3,#ff00cc,#ff00c6,#ff00c0,#ff00ba,#ff00b4,#ff00af,#ff00aa,#ff00a4,#ff009f,#ff009b,#ff0096,#ff0091,#ff008d,#ff0088,#ff0084)"></i><i style="left:98px;top:424px;width:314px;background:linear-gradient(90deg,#0091ff,#008fff,#008eff,#008cff,#008bff,#0089ff,#0087ff,#0085ff,#0083ff,#0081ff,#197fff,#2f7dff,#3f7bff,#4d78ff,#5976ff,#6473ff,#6f71ff,#796eff,#826bff,#8b67ff,#9564ff,#9e60ff,#a65cff,#af58ff,#b853ff,#c04fff,#c949ff,#d243ff,#da3cff,#e334ff,#ec2bff,#f41fff,#fd09ff,#ff00f8,#ff00ef,#ff00e8,#ff00e0,#ff00d9,#ff00d2,#ff00cc,#ff00c5,#ff00bf,#ff00b9,#ff00b4,#ff00ae,#ff00a9,#ff00a4,#ff009f,#ff009a,#ff0095,#ff0091,#ff008c,#ff0088)"></i><i style="left:98px;top:426px;width:309px;background:linear-gradient(90deg,#008fff,#008dff,#008cff,#008aff,#0088ff,#0087ff,#0085ff,#0083ff,#0081ff,#007fff,#167dff,#2d7bff,#3d78ff,#4b76ff,#5774ff,#6271ff,#6c6eff,#766bff,#7f68ff,#8965ff,#9261ff,#9a5eff,#a35aff,#ac56ff,#b451ff,#bd4cff,#c547ff,#cd40ff,#d63aff,#de32ff,#e728ff,#ef1bff,#f800ff,#ff00fd,#ff00f5,#ff00ed,#ff00e5,#ff00de,#ff00d7,#ff00d1,#ff00ca,#ff00c4,#ff00be,#ff00b9,#ff00b3,#ff00ae,#ff00a9,#ff00a4,#ff009f,#ff009a,#ff0096,#ff0091,#ff008d)"></i><i style="left:99px;top:428px;width:303px;background:linear-gradient(90deg,#008cff,#008bff,#0089ff,#0087ff,#0085ff,#0084ff,#0082ff,#0080ff,#007eff,#007cff,#2279ff,#3577ff,#4475ff,#5172ff,#5c6fff,#676dff,#716aff,#7b66ff,#8463ff,#8e5fff,#965cff,#9f58ff,#a853ff,#b14eff,#b949ff,#c244ff,#ca3dff,#d336ff,#db2dff,#e422ff,#ec12ff,#f500ff,#fe00ff,#ff00f7,#ff00ef,#ff00e7,#ff00e0,#ff00d9,#ff00d2,#ff00cc,#ff00c6,#ff00c0,#ff00ba,#ff00b4,#ff00af,#ff00aa,#ff00a5,#ff00a0,#ff009b,#ff0096,#ff0092)"></i><i style="left:99px;top:430px;width:299px;background:linear-gradient(90deg,#008aff,#0088ff,#0087ff,#0085ff,#0083ff,#0081ff,#007fff,#007dff,#007bff,#0079ff,#2077ff,#3475ff,#4272ff,#4f70ff,#5b6dff,#656aff,#6f67ff,#7964ff,#8260ff,#8b5dff,#9459ff,#9d55ff,#a550ff,#ae4cff,#b646ff,#be40ff,#c73aff,#cf32ff,#d729ff,#e01eff,#e809ff,#f100ff,#f900ff,#ff00fc,#ff00f4,#ff00ec,#ff00e5,#ff00dd,#ff00d7,#ff00d0,#ff00ca,#ff00c4,#ff00be,#ff00b8,#ff00b3,#ff00ae,#ff00a9,#ff00a4,#ff009f,#ff009a,#ff0096)"></i><i style="left:100px;top:432px;width:293px;background:linear-gradient(90deg,#0087ff,#0086ff,#0084ff,#0082ff,#0080ff,#007fff,#007dff,#007bff,#0078ff,#0076ff,#2674ff,#3771ff,#456fff,#526cff,#5d69ff,#6766ff,#7163ff,#7b60ff,#845cff,#8d59ff,#9554ff,#9e50ff,#a64bff,#af46ff,#b740ff,#bf3aff,#c833ff,#d02aff,#d81fff,#e00dff,#e900ff,#f100ff,#fa00ff,#ff00fc,#ff00f4,#ff00ec,#ff00e4,#ff00dd,#ff00d7,#ff00d0,#ff00ca,#ff00c4,#ff00be,#ff00b9,#ff00b3,#ff00ae,#ff00a9,#ff00a4,#ff009f,#ff009b)"></i><i style="left:101px;top:434px;width:287px;background:linear-gradient(90deg,#0085ff,#0083ff,#0081ff,#0080ff,#007eff,#007cff,#007aff,#0078ff,#0075ff,#1173ff,#2a71ff,#3a6eff,#486bff,#5469ff,#5f66ff,#6963ff,#735fff,#7c5cff,#8558ff,#8e54ff,#9750ff,#9f4bff,#a746ff,#b041ff,#b83aff,#c033ff,#c82bff,#d120ff,#d910ff,#e100ff,#e900ff,#f200ff,#fa00ff,#ff00fb,#ff00f3,#ff00ec,#ff00e4,#ff00dd,#ff00d6,#ff00d0,#ff00ca,#ff00c4,#ff00be,#ff00b9,#ff00b3,#ff00ae,#ff00a9,#ff00a4,#ff00a0)"></i><i style="left:102px;top:436px;width:282px;background:linear-gradient(90deg,#0082ff,#0081ff,#007fff,#007dff,#007bff,#0079ff,#0077ff,#0075ff,#0072ff,#1a70ff,#2f6dff,#3e6bff,#4b68ff,#5765ff,#6162ff,#6c5fff,#755bff,#7e57ff,#8754ff,#904fff,#994bff,#a146ff,#a940ff,#b23aff,#ba33ff,#c22bff,#ca20ff,#d211ff,#da00ff,#e300ff,#eb00ff,#f300ff,#fc00ff,#ff00fa,#ff00f2,#ff00ea,#ff00e3,#ff00dc,#ff00d6,#ff00cf,#ff00c9,#ff00c3,#ff00be,#ff00b8,#ff00b3,#ff00ae,#ff00a9,#ff00a4)"></i><i style="left:102px;top:438px;width:277px;background:linear-gradient(90deg,#0080ff,#007eff,#007cff,#007bff,#0079ff,#0076ff,#0074ff,#0072ff,#0070ff,#1c6dff,#306aff,#3f68ff,#4c65ff,#5862ff,#625fff,#6c5bff,#7658ff,#7f54ff,#884fff,#904bff,#9946ff,#a141ff,#aa3bff,#b234ff,#ba2cff,#c222ff,#ca14ff,#d200ff,#db00ff,#e300ff,#eb00ff,#f300ff,#fc00ff,#ff00fa,#ff00f2,#ff00ea,#ff00e3,#ff00dc,#ff00d6,#ff00cf,#ff00c9,#ff00c3,#ff00be,#ff00b8,#ff00b3,#ff00ae,#ff00a9)"></i><i style="left:103px;top:440px;width:271px;background:linear-gradient(90deg,#007eff,#007cff,#007aff,#0078ff,#0076ff,#0074ff,#0071ff,#006fff,#006cff,#226aff,#3467ff,#4264ff,#4f61ff,#5a5eff,#645bff,#6e57ff,#7753ff,#804fff,#894bff,#9246ff,#9a41ff,#a33bff,#ab34ff,#b32cff,#bb23ff,#c316ff,#cb00ff,#d300ff,#db00ff,#e300ff,#ec00ff,#f400ff,#fc00ff,#ff00fa,#ff00f2,#ff00ea,#ff00e3,#ff00dc,#ff00d6,#ff00cf,#ff00c9,#ff00c3,#ff00be,#ff00b8,#ff00b3,#ff00ae)"></i><i style="left:104px;top:442px;width:265px;background:linear-gradient(90deg,#007bff,#0079ff,#0077ff,#0075ff,#0073ff,#0071ff,#006eff,#006cff,#0969ff,#2767ff,#3864ff,#4561ff,#515eff,#5c5aff,#6657ff,#7053ff,#794fff,#824bff,#8b46ff,#9341ff,#9b3bff,#a435ff,#ac2dff,#b424ff,#bc18ff,#c400ff,#cc00ff,#d400ff,#dc00ff,#e400ff,#ec00ff,#f400ff,#fd00ff,#ff00f9,#ff00f1,#ff00ea,#ff00e3,#ff00dc,#ff00d6,#ff00cf,#ff00c9,#ff00c4,#ff00be,#ff00b9,#ff00b3)"></i><i style="left:104px;top:444px;width:261px;background:linear-gradient(90deg,#0079ff,#0077ff,#0075ff,#0073ff,#0071ff,#006eff,#006cff,#0069ff,#0667ff,#2564ff,#3661ff,#445eff,#505bff,#5a58ff,#6454ff,#6e50ff,#774cff,#8048ff,#8843ff,#913eff,#9938ff,#a131ff,#a929ff,#b120ff,#b912ff,#c100ff,#c800ff,#d000ff,#d800ff,#e000ff,#e800ff,#f000ff,#f800ff,#ff00fe,#ff00f6,#ff00ef,#ff00e8,#ff00e1,#ff00da,#ff00d4,#ff00ce,#ff00c8,#ff00c2,#ff00bd,#ff00b8)"></i><i style="left:105px;top:446px;width:255px;background:linear-gradient(90deg,#0076ff,#0074ff,#0072ff,#0070ff,#006dff,#006bff,#0068ff,#0066ff,#1863ff,#2d60ff,#3d5dff,#495aff,#5556ff,#5f53ff,#694fff,#734bff,#7c46ff,#8541ff,#8d3bff,#9635ff,#9e2eff,#a626ff,#ae1bff,#b607ff,#be00ff,#c600ff,#ce00ff,#d600ff,#de00ff,#e600ff,#ee00ff,#f600ff,#fe00ff,#ff00f8,#ff00f0,#ff00e9,#ff00e2,#ff00db,#ff00d4,#ff00ce,#ff00c8,#ff00c3,#ff00bd)"></i><i style="left:106px;top:448px;width:249px;background:linear-gradient(90deg,#0073ff,#0071ff,#006fff,#006dff,#006bff,#0068ff,#0066ff,#0063ff,#1960ff,#2e5dff,#3c5aff,#4957ff,#5454ff,#5e50ff,#684cff,#7148ff,#7a43ff,#833eff,#8b38ff,#9332ff,#9b2bff,#a322ff,#ab16ff,#b300ff,#ba00ff,#c200ff,#ca00ff,#d200ff,#d900ff,#e100ff,#e900ff,#f100ff,#f900ff,#ff00fd,#ff00f6,#ff00ee,#ff00e7,#ff00e1,#ff00da,#ff00d4,#ff00ce,#ff00c8,#ff00c3)"></i><i style="left:107px;top:450px;width:244px;background:linear-gradient(90deg,#0071ff,#006fff,#006cff,#006aff,#0068ff,#0065ff,#0062ff,#0060ff,#205dff,#325aff,#4056ff,#4c53ff,#574fff,#614bff,#6a47ff,#7343ff,#7c3eff,#8538ff,#8d32ff,#952bff,#9d22ff,#a516ff,#ad00ff,#b400ff,#bc00ff,#c400ff,#cb00ff,#d300ff,#db00ff,#e300ff,#ea00ff,#f200ff,#fa00ff,#ff00fc,#ff00f4,#ff00ed,#ff00e6,#ff00df,#ff00d9,#ff00d3,#ff00cd,#ff00c7)"></i><i style="left:107px;top:452px;width:239px;background:linear-gradient(90deg,#006eff,#006cff,#006aff,#0068ff,#0065ff,#0062ff,#0060ff,#005dff,#225aff,#3357ff,#4153ff,#4d50ff,#584cff,#6248ff,#6b43ff,#743eff,#7d39ff,#8533ff,#8d2cff,#9523ff,#9d19ff,#a502ff,#ad00ff,#b500ff,#bc00ff,#c400ff,#cc00ff,#d300ff,#db00ff,#e300ff,#eb00ff,#f200ff,#fa00ff,#ff00fc,#ff00f4,#ff00ed,#ff00e6,#ff00df,#ff00d9,#ff00d3,#ff00cd)"></i><i style="left:108px;top:454px;width:233px;background:linear-gradient(90deg,#006cff,#0069ff,#0067ff,#0065ff,#0062ff,#005fff,#005cff,#0c59ff,#2656ff,#3753ff,#444fff,#4f4cff,#5a47ff,#6443ff,#6d3eff,#7639ff,#7e33ff,#872cff,#8f24ff,#971aff,#9f08ff,#a600ff,#ae00ff,#b600ff,#bd00ff,#c500ff,#cc00ff,#d400ff,#dc00ff,#e300ff,#eb00ff,#f300ff,#fb00ff,#ff00fc,#ff00f4,#ff00ed,#ff00e6,#ff00df,#ff00d9,#ff00d3)"></i><i style="left:109px;top:456px;width:228px;background:linear-gradient(90deg,#0069ff,#0066ff,#0064ff,#0061ff,#005fff,#005cff,#0059ff,#1656ff,#2b52ff,#3a4fff,#474bff,#5247ff,#5c43ff,#663eff,#6f39ff,#7833ff,#802cff,#8924ff,#911aff,#9909ff,#a000ff,#a800ff,#b000ff,#b700ff,#bf00ff,#c700ff,#ce00ff,#d600ff,#dd00ff,#e500ff,#ed00ff,#f400ff,#fc00ff,#ff00fa,#ff00f3,#ff00eb,#ff00e5,#ff00de,#ff00d8)"></i><i style="left:110px;top:458px;width:222px;background:linear-gradient(90deg,#0066ff,#0064ff,#0061ff,#005eff,#005cff,#0059ff,#0056ff,#1c52ff,#2f4fff,#3d4bff,#4947ff,#5443ff,#5e3eff,#6839ff,#7133ff,#792dff,#8225ff,#8a1bff,#920cff,#9a00ff,#a100ff,#a900ff,#b100ff,#b800ff,#c000ff,#c700ff,#cf00ff,#d600ff,#de00ff,#e600ff,#ed00ff,#f500ff,#fd00ff,#ff00fa,#ff00f2,#ff00eb,#ff00e5,#ff00de)"></i><i style="left:111px;top:460px;width:216px;background:linear-gradient(90deg,#0063ff,#0061ff,#005eff,#005bff,#0058ff,#0055ff,#0052ff,#214fff,#324bff,#4047ff,#4c43ff,#563eff,#6039ff,#6934ff,#722dff,#7b26ff,#831dff,#8b0fff,#9300ff,#9b00ff,#a300ff,#aa00ff,#b200ff,#b900ff,#c100ff,#c800ff,#d000ff,#d700ff,#df00ff,#e600ff,#ee00ff,#f500ff,#fd00ff,#ff00f9,#ff00f2,#ff00eb,#ff00e4)"></i><i style="left:111px;top:462px;width:212px;background:linear-gradient(90deg,#0061ff,#005eff,#005bff,#0058ff,#0055ff,#0052ff,#024fff,#244bff,#3447ff,#4243ff,#4d3fff,#583aff,#6134ff,#6b2eff,#7427ff,#7c1eff,#8411ff,#8c00ff,#9400ff,#9c00ff,#a400ff,#ab00ff,#b300ff,#ba00ff,#c200ff,#c900ff,#d100ff,#d800ff,#e000ff,#e700ff,#ef00ff,#f700ff,#ff00ff,#ff00f8,#ff00f1,#ff00ea)"></i><i style="left:112px;top:464px;width:206px;background:linear-gradient(90deg,#005eff,#005bff,#0058ff,#0055ff,#0052ff,#004fff,#104bff,#2847ff,#3843ff,#443fff,#503aff,#5a34ff,#632eff,#6c27ff,#751fff,#7e13ff,#8600ff,#8e00ff,#9600ff,#9d00ff,#a500ff,#ac00ff,#b400ff,#bb00ff,#c300ff,#ca00ff,#d200ff,#d900ff,#e100ff,#e800ff,#f000ff,#f700ff,#ff00ff,#ff00f7,#ff00f0)"></i><i style="left:113px;top:466px;width:200px;background:linear-gradient(90deg,#005bff,#0058ff,#0055ff,#0052ff,#004eff,#004bff,#1847ff,#2c43ff,#3b3fff,#473aff,#5235ff,#5c2fff,#6528ff,#6e20ff,#7715ff,#7f00ff,#8700ff,#8f00ff,#9700ff,#9e00ff,#a600ff,#ad00ff,#b500ff,#bc00ff,#c400ff,#cb00ff,#d200ff,#da00ff,#e100ff,#e900ff,#f000ff,#f800ff,#ff00ff,#ff00f7)"></i><i style="left:114px;top:468px;width:194px;background:linear-gradient(90deg,#0058ff,#0055ff,#0052ff,#004eff,#004bff,#0047ff,#1e43ff,#303fff,#3d3aff,#4935ff,#542fff,#5e29ff,#6721ff,#7016ff,#7800ff,#8000ff,#8800ff,#9000ff,#9800ff,#a000ff,#a700ff,#ae00ff,#b600ff,#bd00ff,#c500ff,#cc00ff,#d300ff,#db00ff,#e200ff,#e900ff,#f100ff,#f800ff,#ff00fe)"></i><i style="left:115px;top:470px;width:189px;background:linear-gradient(90deg,#0054ff,#0051ff,#004eff,#004bff,#0047ff,#0044ff,#1f40ff,#303bff,#3e36ff,#4931ff,#532bff,#5d24ff,#661bff,#6e0eff,#7700ff,#7f00ff,#8600ff,#8e00ff,#9600ff,#9d00ff,#a400ff,#ab00ff,#b300ff,#ba00ff,#c100ff,#c800ff,#cf00ff,#d600ff,#dd00ff,#e400ff,#ec00ff,#f300ff,#fa00ff)"></i><i style="left:115px;top:472px;width:184px;background:linear-gradient(90deg,#0052ff,#004fff,#004bff,#0048ff,#0044ff,#0040ff,#213cff,#3237ff,#3f32ff,#4a2cff,#5425ff,#5e1dff,#6712ff,#6f00ff,#7700ff,#7f00ff,#8700ff,#8f00ff,#9600ff,#9d00ff,#a500ff,#ac00ff,#b300ff,#ba00ff,#c100ff,#c800ff,#cf00ff,#d600ff,#de00ff,#e500ff,#ec00ff,#f300ff)"></i><i style="left:116px;top:474px;width:178px;background:linear-gradient(90deg,#004eff,#004bff,#0048ff,#0044ff,#0040ff,#0d3cff,#2637ff,#3532ff,#412dff,#4c26ff,#561eff,#5f13ff,#6800ff,#7100ff,#7900ff,#8100ff,#8800ff,#9000ff,#9700ff,#9e00ff,#a600ff,#ad00ff,#b400ff,#bb00ff,#c200ff,#c900ff,#d000ff,#d700ff,#de00ff,#e500ff,#ec00ff)"></i><i style="left:117px;top:476px;width:173px;background:linear-gradient(90deg,#004bff,#0048ff,#0044ff,#0040ff,#003cff,#1637ff,#2a32ff,#382dff,#4426ff,#4f1eff,#5914ff,#6200ff,#6a00ff,#7300ff,#7b00ff,#8300ff,#8a00ff,#9200ff,#9900ff,#a000ff,#a700ff,#af00ff,#b600ff,#bd00ff,#c400ff,#cb00ff,#d200ff,#d900ff,#e000ff,#e700ff)"></i><i style="left:118px;top:478px;width:167px;background:linear-gradient(90deg,#0048ff,#0044ff,#0040ff,#003cff,#0037ff,#1c33ff,#2e2dff,#3b27ff,#471fff,#5115ff,#5b00ff,#6400ff,#6c00ff,#7400ff,#7c00ff,#8400ff,#8b00ff,#9300ff,#9a00ff,#a100ff,#a800ff,#af00ff,#b600ff,#bd00ff,#c400ff,#cb00ff,#d200ff,#d900ff,#e000ff)"></i><i style="left:119px;top:480px;width:161px;background:linear-gradient(90deg,#0044ff,#0040ff,#003cff,#0038ff,#0033ff,#212dff,#3127ff,#3e20ff,#4916ff,#5305ff,#5c00ff,#6500ff,#6e00ff,#7600ff,#7d00ff,#8500ff,#8d00ff,#9400ff,#9b00ff,#a200ff,#a900ff,#b000ff,#b700ff,#be00ff,#c500ff,#cc00ff,#d300ff,#da00ff)"></i><i style="left:120px;top:482px;width:156px;background:linear-gradient(90deg,#0040ff,#003cff,#0038ff,#0033ff,#0d2eff,#2527ff,#3520ff,#4117ff,#4c07ff,#5600ff,#5f00ff,#6700ff,#7000ff,#7800ff,#7f00ff,#8700ff,#8e00ff,#9600ff,#9d00ff,#a400ff,#ab00ff,#b200ff,#b900ff,#c000ff,#c700ff,#ce00ff,#d500ff)"></i><i style="left:121px;top:484px;width:150px;background:linear-gradient(90deg,#003cff,#0038ff,#0033ff,#002eff,#1528ff,#2921ff,#3718ff,#430aff,#4e00ff,#5700ff,#6000ff,#6900ff,#7100ff,#7900ff,#8100ff,#8800ff,#9000ff,#9700ff,#9e00ff,#a500ff,#ac00ff,#b300ff,#ba00ff,#c100ff,#c800ff,#ce00ff)"></i><i style="left:122px;top:486px;width:144px;background:linear-gradient(90deg,#0038ff,#0033ff,#002eff,#0028ff,#1b22ff,#2d19ff,#3a0dff,#4600ff,#5000ff,#5900ff,#6200ff,#6b00ff,#7300ff,#7b00ff,#8200ff,#8a00ff,#9100ff,#9800ff,#9f00ff,#a600ff,#ad00ff,#b400ff,#bb00ff,#c200ff,#c800ff)"></i><i style="left:123px;top:488px;width:138px;background:linear-gradient(90deg,#0034ff,#002fff,#0029ff,#0022ff,#201aff,#300fff,#3d00ff,#4800ff,#5200ff,#5b00ff,#6400ff,#6c00ff,#7400ff,#7c00ff,#8300ff,#8b00ff,#9200ff,#9900ff,#a000ff,#a700ff,#ae00ff,#b500ff,#bb00ff,#c200ff)"></i><i style="left:124px;top:490px;width:133px;background:linear-gradient(90deg,#002fff,#0029ff,#0023ff,#0c1bff,#2510ff,#3400ff,#4000ff,#4b00ff,#5400ff,#5e00ff,#6600ff,#6e00ff,#7600ff,#7e00ff,#8500ff,#8d00ff,#9400ff,#9b00ff,#a200ff,#a900ff,#b000ff,#b700ff,#bd00ff)"></i><i style="left:125px;top:492px;width:127px;background:linear-gradient(90deg,#002aff,#0024ff,#001cff,#1412ff,#2900ff,#3700ff,#4200ff,#4d00ff,#5600ff,#5f00ff,#6800ff,#7000ff,#7800ff,#7f00ff,#8700ff,#8e00ff,#9500ff,#9c00ff,#a300ff,#aa00ff,#b100ff,#b700ff)"></i><i style="left:126px;top:494px;width:121px;background:linear-gradient(90deg,#0024ff,#001dff,#0013ff,#1a00ff,#2c00ff,#3900ff,#4500ff,#4f00ff,#5800ff,#6100ff,#6900ff,#7100ff,#7900ff,#8100ff,#8800ff,#8f00ff,#9600ff,#9d00ff,#a400ff,#ab00ff,#b200ff)"></i><i style="left:127px;top:496px;width:116px;background:linear-gradient(90deg,#001eff,#0014ff,#0000ff,#2000ff,#3000ff,#3d00ff,#4800ff,#5100ff,#5b00ff,#6300ff,#6c00ff,#7400ff,#7b00ff,#8300ff,#8a00ff,#9100ff,#9800ff,#9f00ff,#a600ff,#ad00ff)"></i><i style="left:128px;top:498px;width:110px;background:linear-gradient(90deg,#0016ff,#0007ff,#0b00ff,#2400ff,#3300ff,#3f00ff,#4a00ff,#5300ff,#5c00ff,#6500ff,#6d00ff,#7500ff,#7d00ff,#8400ff,#8b00ff,#9200ff,#9900ff,#a000ff,#a700ff)"></i><i style="left:129px;top:500px;width:104px;background:linear-gradient(90deg,#000aff,#0000ff,#1300ff,#2800ff,#3600ff,#4200ff,#4c00ff,#5500ff,#5e00ff,#6700ff,#6f00ff,#7600ff,#7e00ff,#8500ff,#8c00ff,#9300ff,#9a00ff,#a100ff)"></i><i style="left:131px;top:502px;width:98px;background:linear-gradient(90deg,#0000ff,#0000ff,#1d00ff,#2e00ff,#3b00ff,#4600ff,#5000ff,#5900ff,#6100ff,#6a00ff,#7100ff,#7900ff,#8100ff,#8800ff,#8f00ff,#9600ff,#9d00ff)"></i><i style="left:132px;top:504px;width:92px;background:linear-gradient(90deg,#0000ff,#0000ff,#2100ff,#3100ff,#3d00ff,#4800ff,#5200ff,#5b00ff,#6300ff,#6b00ff,#7300ff,#7b00ff,#8200ff,#8900ff,#9000ff,#9700ff)"></i><i style="left:133px;top:506px;width:86px;background:linear-gradient(90deg,#0000ff,#0f00ff,#2500ff,#3400ff,#4000ff,#4a00ff,#5400ff,#5c00ff,#6500ff,#6d00ff,#7400ff,#7c00ff,#8300ff,#8a00ff,#9100ff)"></i><i style="left:135px;top:508px;width:79px;background:linear-gradient(90deg,#0000ff,#1a00ff,#2b00ff,#3800ff,#4300ff,#4d00ff,#5600ff,#5f00ff,#6700ff,#6f00ff,#7600ff,#7d00ff,#8500ff,#8c00ff)"></i><i style="left:136px;top:510px;width:74px;background:linear-gradient(90deg,#0000ff,#1f00ff,#2f00ff,#3b00ff,#4600ff,#5000ff,#5900ff,#6100ff,#6900ff,#7100ff,#7900ff,#8000ff,#8700ff)"></i><i style="left:138px;top:512px;width:67px;background:linear-gradient(90deg,#1000ff,#2500ff,#3300ff,#3f00ff,#4900ff,#5300ff,#5b00ff,#6300ff,#6b00ff,#7300ff,#7a00ff,#8100ff)"></i><i style="left:139px;top:514px;width:61px;background:linear-gradient(90deg,#1600ff,#2900ff,#3600ff,#4100ff,#4b00ff,#5400ff,#5d00ff,#6500ff,#6d00ff,#7400ff,#7b00ff)"></i><i style="left:141px;top:516px;width:55px;background:linear-gradient(90deg,#1f00ff,#2e00ff,#3b00ff,#4500ff,#4f00ff,#5800ff,#6000ff,#6800ff,#7000ff,#7700ff)"></i><i style="left:143px;top:518px;width:48px;background:linear-gradient(90deg,#2500ff,#3300ff,#3e00ff,#4800ff,#5100ff,#5a00ff,#6200ff,#6a00ff,#7100ff)"></i><i style="left:146px;top:520px;width:40px;background:linear-gradient(90deg,#2e00ff,#3900ff,#4300ff,#4c00ff,#5500ff,#5c00ff,#6400ff,#6b00ff)"></i><i style="left:148px;top:522px;width:34px;background:linear-gradient(90deg,#3300ff,#3d00ff,#4700ff,#4f00ff,#5700ff,#5f00ff,#6600ff)"></i><i style="left:151px;top:524px;width:26px;background:linear-gradient(90deg,#3900ff,#4400ff,#4e00ff,#5700ff,#6000ff)"></i><i style="left:153px;top:526px;width:19px;background:linear-gradient(90deg,#3d00ff,#4800ff,#5100ff,#5a00ff)"></i><i style="left:155px;top:528px;width:12px;background:linear-gradient(90deg,#4100ff,#4b00ff,#5300ff)"></i><i style="left:158px;top:530px;width:5px;background:linear-gradient(90deg,#4600ff,#4e00ff)"></i></div>
<svg style="left:0;top:0" width="797" height="652" viewBox="0 0 797 652" font-family="Liberation Sans, sans-serif"><path d="M54.0 532.5h7M57.5 529.0v7M54.0 478.5h7M57.5 475.0v7M54.0 424.5h7M57.5 421.0v7M54.0 369.5h7M57.5 366.0v7M54.0 315.5h7M57.5 312.0v7M54.0 261.5h7M57.5 258.0v7M54.0 207.5h7M57.5 204.0v7M54.0 152.5h7M57.5 149.0v7M54.0 98.5h7M57.5 95.0v7M113.0 532.5h7M116.5 529.0v7M113.0 478.5h7M116.5 475.0v7M113.0 424.5h7M116.5 421.0v7M113.0 369.5h7M116.5 366.0v7M113.0 315.5h7M116.5 312.0v7M113.0 261.5h7M116.5 258.0v7M113.0 207.5h7M116.5 204.0v7M113.0 152.5h7M116.5 149.0v7M113.0 98.5h7M116.5 95.0v7M172.0 532.5h7M175.5 529.0v7M172.0 478.5h7M175.5 475.0v7M172.0 424.5h7M175.5 421.0v7M172.0 369.5h7M175.5 366.0v7M172.0 315.5h7M175.5 312.0v7M172.0 261.5h7M175.5 258.0v7M172.0 207.5h7M175.5 204.0v7M172.0 152.5h7M175.5 149.0v7M172.0 98.5h7M175.5 95.0v7M231.0 532.5h7M234.5 529.0v7M231.0 478.5h7M234.5 475.0v7M231.0 424.5h7M234.5 421.0v7M231.0 369.5h7M234.5 366.0v7M231.0 315.5h7M234.5 312.0v7M231.0 261.5h7M234.5 258.0v7M231.0 207.5h7M234.5 204.0v7M231.0 152.5h7M234.5 149.0v7M290.0 478.5h7M293.5 475.0v7M290.0 424.5h7M293.5 421.0v7M290.0 369.5h7M293.5 366.0v7M290.0 315.5h7M293.5 312.0v7M290.0 261.5h7M293.5 258.0v7M290.0 207.5h7M293.5 204.0v7M350.0 424.5h7M353.5 421.0v7M350.0 369.5h7M353.5 366.0v7M350.0 315.5h7M353.5 312.0v7M350.0 261.5h7M353.5 258.0v7M409.0 369.5h7M412.5 366.0v7" stroke="#adadad" stroke-width="1" fill="none"/><path d="M58 75.5H500M58.5 75V534M58 533.5H500M499 75V534" fill="none" stroke="#000"/><path d="M498.5 75V534" fill="none" stroke="#000"/><path d="M117.5 533v-5M117.5 76v4.5M176.5 533v-5M176.5 76v4.5M235.5 533v-5M235.5 76v4.5M294.5 533v-5M294.5 76v4.5M354.5 533v-5M354.5 76v4.5M413.5 533v-5M413.5 76v4.5M472.5 533v-5M472.5 76v4.5M59 478.5h4.5M498 478.5h-4.5M59 424.5h4.5M498 424.5h-4.5M59 369.5h4.5M498 369.5h-4.5M59 315.5h4.5M498 315.5h-4.5M59 261.5h4.5M498 261.5h-4.5M59 207.5h4.5M498 207.5h-4.5M59 152.5h4.5M498 152.5h-4.5M59 98.5h4.5M498 98.5h-4.5" stroke="#000" stroke-width="1" fill="none"/><path d="M160.9 530.2L160.8 530.2L160.8 530.2L160.7 530.2L160.7 530.2L160.6 530.2L160.6 530.2L160.5 530.2L160.5 530.2L160.4 530.2L160.3 530.2L160.2 530.2L160.2 530.2L160.1 530.2L160.0 530.1L159.9 530.1L159.7 530.0L159.6 530.0L159.4 529.9L159.3 529.8L159.1 529.7L158.9 529.5L158.7 529.4L158.5 529.2L158.3 529.1L158.0 528.9L157.7 528.6L157.4 528.4L157.1 528.1L156.7 527.8L156.4 527.5L156.0 527.2L155.6 526.9L155.2 526.5L154.7 526.1L154.2 525.7L153.6 525.3L153.0 524.8L152.4 524.3L151.7 523.8L151.0 523.2L150.2 522.6L149.4 521.9L148.6 521.2L147.7 520.5L146.7 519.6L145.7 518.8L144.6 517.8L143.5 516.7L142.4 515.5L141.2 514.3L139.9 512.9L138.5 511.1L137.0 509.1L135.4 506.9L133.6 504.4L131.8 501.4L129.8 498.1L127.7 494.5L125.5 490.4L123.2 485.7L120.7 480.4L118.1 474.5L115.3 468.1L112.3 460.8L109.2 452.7L105.8 443.9L102.4 434.4L99.0 423.8L95.5 412.4L92.1 399.9L88.6 386.7L85.2 372.7L81.8 357.7L78.4 341.8L75.2 325.3L72.2 308.8L69.5 291.9L67.1 274.6L64.9 257.3L63.2 240.5L61.9 224.1L61.0 207.9L60.5 192.2L60.6 177.3L61.3 163.2L62.5 149.6L64.3 136.9L66.6 125.5L69.5 115.4L73.0 106.3L77.0 98.4L81.3 92.0L86.1 87.1L91.3 83.7L96.7 81.5L102.3 80.2L108.0 79.9L113.9 80.8L119.9 82.4L125.9 84.3L131.9 86.5L137.9 89.2L144.0 92.2L149.9 95.3L155.6 98.4L161.3 101.7L166.9 105.0L172.5 108.5L178.0 112.1L183.4 115.7L188.8 119.5L194.2 123.3L199.6 127.3L204.9 131.3L210.3 135.4L215.6 139.6L220.9 143.9L226.2 148.2L231.5 152.6L236.8 157.0L242.1 161.4L247.3 166.0L252.6 170.5L257.9 175.1L263.2 179.7L268.5 184.4L273.8 189.1L279.1 193.8L284.4 198.5L289.6 203.2L294.9 208.0L300.1 212.7L305.4 217.5L310.7 222.2L315.9 227.0L321.1 231.7L326.3 236.4L331.4 241.1L336.5 245.8L341.6 250.4L346.7 255.0L351.7 259.6L356.6 264.1L361.6 268.6L366.4 273.1L371.2 277.5L376.0 281.8L380.7 286.1L385.3 290.3L389.8 294.5L394.3 298.5L398.7 302.5L402.9 306.4L407.1 310.2L411.1 314.0L415.0 317.6L418.8 321.0L422.4 324.3L425.9 327.5L429.3 330.6L432.6 333.6L435.8 336.5L438.9 339.4L441.9 342.0L444.6 344.6L447.3 347.0L449.8 349.3L452.3 351.5L454.6 353.6L456.7 355.6L458.8 357.5L460.7 359.2L462.6 360.9L464.3 362.5L465.9 364.0L467.5 365.4L468.9 366.8L470.3 368.0L471.6 369.2L472.9 370.3L474.0 371.4L475.1 372.4L476.2 373.4L477.2 374.3L478.1 375.2L479.1 376.0L479.9 376.8L480.8 377.6L481.6 378.3L482.3 379.0L483.1 379.7L483.7 380.3L484.4 380.9L485.0 381.4L485.6 381.9L486.1 382.4L486.6 382.9L487.1 383.3L487.5 383.7L487.9 384.1L488.3 384.4L488.6 384.7L488.9 385.0L489.2 385.3L489.5 385.6L489.8 385.8L490.0 386.0L490.2 386.2L490.5 386.5L490.9 386.8L491.2 387.1L491.4 387.3L491.7 387.5L491.9 387.7L492.1 387.9L492.3 388.1L492.5 388.3L492.7 388.5L492.9 388.7L493.0 388.8Z" stroke="#343434" stroke-width="2.1" fill="none" stroke-linejoin="round"/><path d="M442.0 353.2L194.5 152.0L147.7 498.1Z" stroke="#000" stroke-width="1.75" fill="none" stroke-dasharray="1.75 2.45"/><path d="M461.6 364.7L228.7 180.2L145.3 496.6Z" stroke="#000" stroke-width="1.95" fill="none" stroke-linejoin="miter"/><circle cx="261.0" cy="337.6" r="2" fill="#333"/><circle cx="160.9" cy="530.2" r="3.6" fill="#3c00cc" stroke="#5a5a5a" stroke-width="1"/><text x="149.9" y="531.7" font-size="12.5" fill="#e6e6e6" text-anchor="end">400</text><circle cx="131.8" cy="501.4" r="3.6" fill="#0000cc" stroke="#5a5a5a" stroke-width="1"/><text x="120.8" y="505.9" font-size="12.5" fill="#e6e6e6" text-anchor="end">470</text><circle cx="112.3" cy="460.8" r="3.6" fill="#004fcc" stroke="#5a5a5a" stroke-width="1"/><text x="101.3" y="465.3" font-size="12.5" fill="#e6e6e6" text-anchor="end">480</text><circle cx="85.2" cy="372.7" r="3.6" fill="#00a4cc" stroke="#5a5a5a" stroke-width="1"/><text x="94.5" y="377.2" font-size="12.5" fill="#3a3a3a">490</text><circle cx="63.2" cy="240.5" r="3.6" fill="#00cc82" stroke="#5a5a5a" stroke-width="1"/><text x="72.5" y="245.0" font-size="12.5" fill="#3a3a3a">500</text><circle cx="66.6" cy="125.5" r="3.6" fill="#00cc34" stroke="#5a5a5a" stroke-width="1"/><text x="75.9" y="130.0" font-size="12.5" fill="#3a3a3a">510</text><circle cx="102.3" cy="80.2" r="3.6" fill="#00cc00" stroke="#5a5a5a" stroke-width="1"/><text x="89.3" y="87.7" font-size="12.5" fill="#e6e6e6" text-anchor="end">520</text><circle cx="149.9" cy="95.3" r="3.6" fill="#00cc00" stroke="#5a5a5a" stroke-width="1"/><text x="159.2" y="99.8" font-size="12.5" fill="#e6e6e6">530</text><circle cx="194.2" cy="123.3" r="3.6" fill="#00cc00" stroke="#5a5a5a" stroke-width="1"/><text x="203.5" y="127.8" font-size="12.5" fill="#e6e6e6">540</text><circle cx="279.1" cy="193.8" r="3.6" fill="#74cc00" stroke="#5a5a5a" stroke-width="1"/><text x="288.4" y="198.3" font-size="12.5" fill="#e6e6e6">560</text><circle cx="361.6" cy="268.6" r="3.6" fill="#cc9f00" stroke="#5a5a5a" stroke-width="1"/><text x="370.9" y="273.1" font-size="12.5" fill="#e6e6e6">580</text><circle cx="429.3" cy="330.6" r="3.6" fill="#cc3c15" stroke="#5a5a5a" stroke-width="1"/><text x="438.6" y="335.1" font-size="12.5" fill="#e6e6e6">600</text><circle cx="467.5" cy="365.4" r="3.6" fill="#cc0022" stroke="#5a5a5a" stroke-width="1"/><text x="476.8" y="369.9" font-size="12.5" fill="#e6e6e6">620</text><circle cx="493.0" cy="388.8" r="3.6" fill="#cc0027" stroke="#5a5a5a" stroke-width="1"/><text x="482.0" y="393.3" font-size="12.5" fill="#3a3a3a" text-anchor="end">700</text><text x="58.8" y="548" font-size="12.5" text-anchor="middle">0</text><text x="118.0" y="548" font-size="12.5" text-anchor="middle">0.1</text><text x="177.2" y="548" font-size="12.5" text-anchor="middle">0.2</text><text x="236.3" y="548" font-size="12.5" text-anchor="middle">0.3</text><text x="295.5" y="548" font-size="12.5" text-anchor="middle">0.4</text><text x="354.7" y="548" font-size="12.5" text-anchor="middle">0.5</text><text x="413.8" y="548" font-size="12.5" text-anchor="middle">0.6</text><text x="473.0" y="548" font-size="12.5" text-anchor="middle">0.7</text><text x="54" y="536.5" font-size="12.4" text-anchor="end">0</text><text x="54" y="482.2" font-size="12.4" text-anchor="end">0.1</text><text x="54" y="427.9" font-size="12.4" text-anchor="end">0.2</text><text x="54" y="373.6" font-size="12.4" text-anchor="end">0.3</text><text x="54" y="319.4" font-size="12.4" text-anchor="end">0.4</text><text x="54" y="265.1" font-size="12.4" text-anchor="end">0.5</text><text x="54" y="210.8" font-size="12.4" text-anchor="end">0.6</text><text x="54" y="156.5" font-size="12.4" text-anchor="end">0.7</text><text x="54" y="102.2" font-size="12.4" text-anchor="end">0.8</text><text x="276.5" y="564" font-size="12.5" font-weight="bold" text-anchor="middle">x</text><text transform="translate(26.2,305) rotate(-90)" font-size="12.2" font-weight="bold" text-anchor="middle">y</text><text x="277.5" y="66" font-size="13.2" font-weight="bold" text-anchor="middle">CIE 1931 xy Chromaticity diagram</text><text x="486" y="90.5" font-size="11" font-weight="bold" fill="#fff" text-anchor="end" xml:space="preserve">Input:  AdobeRGB1998.icc</text><text x="486" y="104.5" font-size="11" font-weight="bold" fill="#fff" text-anchor="end" xml:space="preserve" textLength="190">Output: Acer XV272U_standard.icm</text><text x="486" y="118.5" font-size="11" font-weight="bold" fill="#fff" text-anchor="end" xml:space="preserve">White point:  x = 0.344  y = 0.359</text><text x="486" y="132.5" font-size="11" font-weight="bold" fill="#fff" text-anchor="end" xml:space="preserve">12-May-2019 19:49:49</text></svg>
<div id="sq" style="left:552px;top:56px;width:234px;height:234px;overflow:hidden;background:#808080"><i style="left:0px;width:2px;background:linear-gradient(180deg,#ff0000,#ff0000,#ff0000,#ff0000,#fd0000,#f60000,#ee0000,#e60015,#de1d25,#d62c30,#cf383a,#c64143,#be4a4b,#b65353,#ae5b5b,#a56262,#9c6a6a,#937171,#897878,#7f807f)"></i><i style="left:2px;width:2px;background:linear-gradient(180deg,#ff0000,#ff0000,#ff0000,#ff0000,#fd0000,#f50000,#ee0000,#e61f14,#de2c24,#d6372f,#ce4039,#c64842,#be504b,#b55753,#ad5f5a,#a46562,#9c6c6a,#937371,#897978,#7f807f)"></i><i style="left:4px;width:2px;background:linear-gradient(180deg,#ff0000,#ff0000,#ff0000,#ff0000,#fd0000,#f50f00,#ed2300,#e52f12,#dd3823,#d6402f,#ce4839,#c54f42,#bd564a,#b55c52,#ad625a,#a46862,#9b6e6a,#927471,#897a78,#7f807f)"></i><i style="left:6px;width:2px;background:linear-gradient(180deg,#ff0000,#ff0000,#ff0000,#ff0000,#fc1d00,#f42a00,#ed3300,#e53b10,#dd4322,#d5492e,#cd5038,#c55641,#bd5b4a,#b46152,#ac665a,#a46c62,#9b7169,#927671,#897b78,#7f807f)"></i><i style="left:8px;width:2px;background:linear-gradient(180deg,#ff1b00,#ff1f00,#ff2400,#ff2900,#fc3200,#f43a00,#ec4100,#e4470d,#dc4c21,#d4522e,#cc5738,#c45c41,#bc614a,#b46652,#ac6a5a,#a36f62,#9b7369,#927771,#897b78,#7f807f)"></i><i style="left:10px;width:2px;background:linear-gradient(180deg,#ff3400,#ff3600,#ff3900,#ff3c00,#fb4200,#f34700,#eb4d00,#e35108,#dc5620,#d45a2d,#cc5e37,#c46241,#bc6649,#b36a52,#ab6e5a,#a37262,#9a7569,#917971,#897c78,#7f807f)"></i><i style="left:12px;width:2px;background:linear-gradient(180deg,#ff4700,#ff4800,#ff4a00,#ff4c00,#fa5000,#f25400,#eb5800,#e35b00,#db5f1f,#d3622c,#cb6637,#c36940,#bb6c49,#b36f51,#aa7259,#a27561,#9a7769,#917a71,#887d78,#7f807f)"></i><i style="left:14px;width:2px;background:linear-gradient(180deg,#ff5700,#ff5800,#ff5900,#ff5a00,#f95d00,#f16000,#ea6300,#e26500,#da681d,#d26a2b,#ca6d36,#c26f40,#ba7149,#b27351,#aa7559,#a27861,#997a69,#917c71,#887e78,#7f807f)"></i><i style="left:16px;width:2px;background:linear-gradient(180deg,#ff6700,#ff6700,#ff6700,#ff6800,#f86a00,#f06b00,#e96d00,#e16f00,#d9701b,#d1722a,#c97435,#c1753f,#b97648,#b17851,#a97959,#a17b61,#997c69,#917d70,#887e78,#7f807f)"></i><i style="left:18px;width:2px;background:linear-gradient(180deg,#ff7600,#ff7500,#ff7400,#ff7500,#f77600,#ef7700,#e87700,#e07800,#d87919,#d07a29,#c87a34,#c17b3f,#b97c48,#b17c50,#a97d59,#a17e61,#987e69,#907f70,#887f78,#7f807f)"></i><i style="left:20px;width:2px;background:linear-gradient(180deg,#ff8400,#ff8300,#ff8200,#fd8200,#f68200,#ee8200,#e68200,#df8200,#d78116,#cf8127,#c78134,#c0813e,#b88147,#b08150,#a88159,#a08161,#988069,#908070,#888078,#7f807f)"></i><i style="left:22px;width:2px;background:linear-gradient(180deg,#ff9300,#ff9100,#ff8f00,#fc8e00,#f48d00,#ed8c00,#e58c00,#de8b00,#d68a13,#ce8926,#c68833,#bf873d,#b78647,#af8550,#a78458,#a08360,#988368,#908270,#888178,#7f807f)"></i><i style="left:24px;width:2px;background:linear-gradient(180deg,#ffa100,#ff9e00,#ff9c00,#fa9a00,#f39900,#eb9700,#e49500,#dc9400,#d5920e,#cd9124,#c58f32,#be8d3d,#b68c46,#ae8a4f,#a78858,#9f8660,#978568,#8f8370,#878178,#7f807f)"></i><i style="left:26px;width:2px;background:linear-gradient(180deg,#ffaf00,#ffac00,#ffa900,#f9a600,#f1a400,#eaa200,#e29f00,#db9d00,#d39a00,#cc9823,#c49631,#bd933c,#b59146,#ae8e4f,#a68c58,#9e8960,#978768,#8f8470,#878278,#7f807f)"></i><i style="left:28px;width:2px;background:linear-gradient(180deg,#ffbd00,#ffb900,#feb600,#f7b200,#efaf00,#e8ac00,#e1a900,#d9a600,#d2a300,#ca9f20,#c39c2f,#bc993b,#b49645,#ad934f,#a59057,#9e8c60,#968968,#8f8670,#878378,#7f807f)"></i><i style="left:30px;width:2px;background:linear-gradient(180deg,#ffcb00,#ffc600,#fcc200,#f5be00,#edba00,#e6b700,#dfb300,#d8af00,#d0ab00,#c9a71e,#c2a32e,#ba9f3a,#b39b45,#ac974e,#a49357,#9d8f60,#968b68,#8e8770,#878378,#7f807f)"></i><i style="left:32px;width:2px;background:linear-gradient(180deg,#ffd900,#ffd400,#facf00,#f2ca00,#ebc600,#e4c100,#ddbc00,#d6b800,#cfb300,#c8ae1b,#c0aa2d,#b9a539,#b2a044,#ab9c4e,#a49757,#9c925f,#958e68,#8e8970,#878478,#7f807f)"></i><i style="left:34px;width:2px;background:linear-gradient(180deg,#ffe700,#fee100,#f7dc00,#f0d600,#e9d100,#e2cb00,#dbc600,#d4c000,#cdbb00,#c6b618,#bfb02b,#b8ab38,#b1a543,#aaa04d,#a39b57,#9c955f,#959068,#8e8a70,#878578,#7f807f)"></i><i style="left:36px;width:2px;background:linear-gradient(180deg,#fff400,#fbee00,#f4e800,#ede200,#e7dc00,#e0d600,#d9cf00,#d2c900,#cbc300,#c4bd14,#bdb72a,#b7b137,#b0ab43,#a9a44d,#a29e56,#9b985f,#949268,#8d8c70,#868678,#7f807f)"></i><i style="left:38px;width:2px;background:linear-gradient(180deg,#fdfe00,#f6f900,#eff200,#e9eb00,#e2e500,#dcde00,#d5d700,#cfd000,#c8ca00,#c1c310,#bbbc28,#b4b537,#aeaf42,#a7a84d,#a1a156,#9a9b5f,#939467,#8d8d70,#868678,#7f807f)"></i><i style="left:40px;width:2px;background:linear-gradient(180deg,#efff00,#e9f900,#e3f300,#ddec00,#d7e500,#d2de00,#ccd800,#c6d100,#c0ca00,#bac313,#b4bc29,#afb637,#a9af43,#a3a84d,#9da156,#979b5f,#919468,#8b8d70,#858678,#7f807f)"></i><i style="left:42px;width:2px;background:linear-gradient(180deg,#e1ff00,#dcfa00,#d7f300,#d2ec00,#cce500,#c7df00,#c2d800,#bdd100,#b8ca00,#b3c416,#aebd2a,#a9b638,#a4af43,#9ea84d,#99a256,#949b5f,#8f9468,#8a8d70,#858678,#7f807f)"></i><i style="left:44px;width:2px;background:linear-gradient(180deg,#d3ff00,#cefa00,#caf400,#c6ed00,#c1e600,#bddf00,#b9d800,#b4d100,#b0cb00,#acc418,#a7bd2b,#a3b638,#9eaf43,#9aa94d,#96a257,#919b5f,#8d9468,#888d70,#848678,#7f807f)"></i><i style="left:46px;width:2px;background:linear-gradient(180deg,#c4ff00,#c1fb00,#bdf400,#baed00,#b6e600,#b2df00,#afd900,#abd200,#a8cb00,#a4c41a,#a1bd2c,#9db639,#99b044,#96a94e,#92a257,#8e9b5f,#8b9468,#878d70,#838678,#7f807f)"></i><i style="left:48px;width:2px;background:linear-gradient(180deg,#b5ff00,#b2fb00,#b0f400,#aded00,#aae700,#a8e000,#a5d900,#a2d200,#9fcb00,#9dc41c,#9abd2d,#97b739,#94b044,#91a94e,#8ea257,#8b9b60,#889468,#868d70,#838678,#7f807f)"></i><i style="left:50px;width:2px;background:linear-gradient(180deg,#a6ff00,#a4fc00,#a2f500,#a0ee00,#9ee700,#9de000,#9bd900,#99d200,#97cb00,#95c51d,#93be2e,#91b73a,#8fb044,#8da94e,#8ba257,#889b60,#869468,#848d70,#828678,#7f807f)"></i><i style="left:52px;width:2px;background:linear-gradient(180deg,#95ff00,#95fc00,#94f500,#93ee00,#92e700,#91e000,#90d900,#8fd300,#8ecc00,#8dc51f,#8cbe2e,#8bb73a,#89b045,#88a94e,#87a257,#859b60,#849468,#838d70,#818678,#7f807f)"></i><i style="left:54px;width:2px;background:linear-gradient(180deg,#84ff00,#84fc00,#85f500,#85ee00,#85e800,#85e100,#85da00,#85d300,#85cc00,#85c520,#85be2f,#84b73b,#84b045,#84a94f,#83a257,#839b60,#829468,#818d70,#808678,#7f807f)"></i><i style="left:56px;width:2px;background:linear-gradient(180deg,#71ff00,#73fd00,#75f600,#76ef00,#78e800,#79e100,#7ada00,#7bd300,#7ccc00,#7dc521,#7dbe30,#7eb73b,#7fb045,#7fa94f,#7fa258,#7f9b60,#809568,#808e70,#808778,#7f807f)"></i><i style="left:58px;width:2px;background:linear-gradient(180deg,#5cff00,#5ffd00,#63f600,#66ef00,#69e800,#6ce100,#6eda00,#70d300,#72cc00,#74c522,#76be30,#78b73c,#79b146,#7aaa4f,#7ba358,#7c9c60,#7d9568,#7e8e70,#7f8778,#7f807f)"></i><i style="left:60px;width:2px;background:linear-gradient(180deg,#40ff00,#48fd00,#4ef600,#54ef00,#59e800,#5de100,#61da00,#65d300,#68cd05,#6bc623,#6ebf31,#71b83c,#73b146,#75aa4f,#78a358,#799c60,#7b9568,#7d8e70,#7e8778,#7f807f)"></i><i style="left:62px;width:2px;background:linear-gradient(180deg,#00ff00,#23fd00,#32f600,#3def00,#45e900,#4de200,#53db00,#59d400,#5ecd0b,#62c624,#66bf31,#6ab83c,#6db146,#71aa4f,#74a358,#769c60,#799568,#7b8e70,#7d8778,#7f807f)"></i><i style="left:64px;width:2px;background:linear-gradient(180deg,#00ff00,#00fd00,#00f700,#00f000,#17e900,#2de200,#3adb00,#44d400,#4dcd0f,#54c625,#5abf32,#60b83d,#65b147,#6aaa50,#6ea358,#729c60,#769568,#798e70,#7c8778,#7f807f)"></i><i style="left:66px;width:2px;background:linear-gradient(180deg,#00ff00,#00fd00,#00f600,#00f000,#00e900,#00e200,#00db00,#22d400,#35cd12,#41c626,#4bbf33,#53b83d,#5bb147,#61aa50,#67a358,#6d9c61,#729569,#778e70,#7b8778,#7f807f)"></i><i style="left:68px;width:2px;background:linear-gradient(180deg,#00ff00,#00fd00,#00f600,#00ef00,#00e900,#00e200,#00db00,#00d400,#00cd14,#27c627,#39bf33,#45b83e,#50b147,#59aa50,#60a359,#689c61,#6e9569,#748e70,#7a8778,#7f807f)"></i><i style="left:70px;width:2px;background:linear-gradient(180deg,#00ff00,#00fd00,#00f600,#00ef00,#00e800,#00e200,#00db00,#00d400,#00cd15,#00c728,#1dc034,#34b93e,#43b248,#4fab50,#59a359,#629c61,#6a9569,#728e70,#798778,#7f807f)"></i><i style="left:72px;width:2px;background:linear-gradient(180deg,#00ff00,#00fd00,#00f600,#00ef00,#00e800,#00e100,#00db00,#00d400,#00cd16,#00c628,#00c034,#1bb93f,#35b248,#45ab51,#52a459,#5d9c61,#679569,#6f8e71,#788778,#7f807f)"></i><i style="left:74px;width:2px;background:linear-gradient(180deg,#00ff00,#00fd00,#00f600,#00ef00,#00e800,#00e100,#00db00,#00d400,#00cd16,#00c628,#00c034,#00b93f,#21b248,#3aab51,#4aa459,#579d61,#639569,#6d8e71,#778778,#7f807f)"></i><i style="left:76px;width:2px;background:linear-gradient(180deg,#00ff00,#00fc00,#00f600,#00ef00,#00e800,#00e100,#00da00,#00d400,#00cd16,#00c628,#00bf35,#00b93f,#00b248,#2cab51,#41a459,#519d61,#5f9569,#6b8e71,#758778,#7f807f)"></i><i style="left:78px;width:2px;background:linear-gradient(180deg,#00ff00,#00fc00,#00f600,#00ef00,#00e800,#00e100,#00da00,#00d415,#00cd27,#00c633,#00bf3d,#00b946,#00b24e,#27ab56,#3fa45d,#509d64,#5e966b,#6a8e72,#758779,#7f807f)"></i><i style="left:80px;width:2px;background:linear-gradient(180deg,#00ff00,#00fc00,#00f600,#00ef00,#00e800,#00e108,#00da21,#00d42d,#00cd37,#00c640,#00bf47,#00b94f,#00b256,#27ab5c,#3fa462,#509d68,#5e956e,#6a8e74,#75877a,#7f807f)"></i><i style="left:82px;width:2px;background:linear-gradient(180deg,#00ff00,#00fc00,#00f600,#00ef0f,#00e822,#00e12d,#00da36,#00d43e,#00cd45,#00c64b,#00bf51,#00b957,#00b25d,#27ab62,#3fa467,#509d6c,#5e9571,#6a8e76,#75877b,#7f807f)"></i><i style="left:84px;width:2px;background:linear-gradient(180deg,#00ff0c,#00fc20,#00f62b,#00ef33,#00e83a,#00e141,#00da47,#00d44c,#00cd51,#00c656,#00bf5b,#00b960,#00b264,#27ab68,#3fa46c,#509d70,#5e9574,#6a8e78,#75877c,#7f807f)"></i><i style="left:86px;width:2px;background:linear-gradient(180deg,#00ff30,#00fc37,#00f63d,#00ef43,#00e848,#00e14d,#00da52,#00d456,#00cd5a,#00c65e,#00bf62,#00b966,#00b269,#27ab6d,#3fa470,#509d73,#5e9576,#6a8e79,#75877c,#7f807f)"></i><i style="left:88px;width:2px;background:linear-gradient(180deg,#00ff45,#00fc49,#00f64d,#00ef51,#00e855,#00e159,#00da5c,#00d45f,#00cd62,#00c666,#00bf69,#00b96c,#00b26e,#27ab71,#3fa474,#509d76,#5e9578,#6a8e7b,#75877d,#7f807f)"></i><i style="left:90px;width:2px;background:linear-gradient(180deg,#00ff56,#00fc59,#00f65c,#00ef5e,#00e861,#00e164,#00da66,#00d468,#00cd6b,#00c66d,#00bf6f,#00b971,#00b273,#27ab75,#3fa477,#509d79,#5d957b,#6a8e7c,#75877e,#7f807f)"></i><i style="left:92px;width:2px;background:linear-gradient(180deg,#00ff65,#00fc67,#00f669,#00ef6b,#00e86d,#00e16e,#00da70,#00d471,#00cd73,#00c674,#00bf76,#00b977,#00b278,#27ab7a,#3fa47b,#509d7c,#5d957d,#6a8e7e,#75877f,#7f807f)"></i><i style="left:94px;width:2px;background:linear-gradient(180deg,#00ff74,#00fc75,#00f676,#00ef77,#00e878,#00e179,#00da7a,#00d47a,#00cd7b,#00c67c,#00bf7c,#00b97d,#00b27d,#27ab7e,#3fa47e,#509d7f,#5d957f,#6a8e7f,#75877f,#7f807f)"></i><i style="left:96px;width:2px;background:linear-gradient(180deg,#00ff83,#00fc83,#00f683,#00ef83,#00e883,#00e183,#00da83,#00d483,#00cd83,#00c683,#00bf83,#00b983,#00b282,#27ab82,#3fa482,#509d81,#5d9581,#6a8e80,#758780,#7f807f)"></i><i style="left:98px;width:2px;background:linear-gradient(180deg,#00ff91,#00fc90,#00f690,#00ef8f,#00e88e,#00e18d,#00da8d,#00d48c,#00cd8b,#00c68a,#00bf89,#00b988,#00b287,#27ab86,#3fa485,#509d84,#5d9583,#6a8e82,#758781,#7f807f)"></i><i style="left:100px;width:2px;background:linear-gradient(180deg,#00ff9f,#00fc9d,#00f69c,#00ef9a,#00e899,#00e197,#00da96,#00d494,#00cd93,#00c691,#00bf90,#00b98e,#00b28c,#27ab8b,#3fa489,#4f9d87,#5d9585,#6a8e83,#758781,#7f807f)"></i><i style="left:102px;width:2px;background:linear-gradient(180deg,#00ffad,#00fcaa,#00f6a8,#00efa6,#00e8a4,#00e1a1,#00da9f,#00d49d,#00cd9b,#00c698,#00bf96,#00b994,#00b291,#27ab8f,#3fa48c,#4f9d8a,#5d9587,#6a8e85,#758782,#7f807f)"></i><i style="left:104px;width:2px;background:linear-gradient(180deg,#00ffba,#00fcb7,#00f6b4,#00efb1,#00e8ae,#00e1ab,#00daa8,#00d4a5,#00cda2,#00c69f,#00bf9c,#00b999,#00b296,#26ab93,#3fa490,#4f9d8d,#5d9589,#6a8e86,#758783,#7f807f)"></i><i style="left:106px;width:2px;background:linear-gradient(180deg,#00ffc8,#00fcc4,#00f5c0,#00efbd,#00e8b9,#00e1b5,#00dab1,#00d4ae,#00cdaa,#00c6a6,#00bfa3,#00b99f,#00b29b,#26ab97,#3fa493,#4f9d8f,#5d958b,#6a8e88,#758784,#7f807f)"></i><i style="left:108px;width:2px;background:linear-gradient(180deg,#00ffd5,#00fcd1,#00f5cc,#00efc8,#00e8c3,#00e1bf,#00dabb,#00d4b6,#00cdb2,#00c6ad,#00bfa9,#00b9a4,#00b2a0,#26ab9b,#3fa497,#4f9d92,#5d958e,#6a8e89,#758784,#7f807f)"></i><i style="left:110px;width:2px;background:linear-gradient(180deg,#00ffe2,#00fcdd,#00f5d8,#00efd3,#00e8ce,#00e1c9,#00dac4,#00d4bf,#00cdb9,#00c6b4,#00bfaf,#00b9aa,#00b2a5,#26aba0,#3fa49a,#4f9d95,#5d9590,#6a8e8a,#758785,#7f807f)"></i><i style="left:112px;width:2px;background:linear-gradient(180deg,#00fff0,#00fcea,#00f5e4,#00efde,#00e8d8,#00e1d3,#00dacd,#00d4c7,#00cdc1,#00c6bb,#00bfb5,#00b9b0,#00b2aa,#26aba4,#3ea49e,#4f9d98,#5d9592,#6a8e8c,#758786,#7f807f)"></i><i style="left:114px;width:2px;background:linear-gradient(180deg,#00fffd,#00fcf6,#00f5f0,#00efe9,#00e8e3,#00e1dc,#00dad6,#00d4cf,#00cdc9,#00c6c2,#00bfbc,#00b9b5,#00b2af,#26aba8,#3ea4a1,#4f9d9b,#5d9594,#6a8e8d,#758786,#7f807f)"></i><i style="left:116px;width:2px;background:linear-gradient(180deg,#00f8ff,#00f2fc,#00ecf5,#00e6ee,#00dfe7,#00d9e1,#00d3da,#00cdd3,#00c7cc,#00c0c5,#00babe,#00b4b8,#00aeb1,#2ba7aa,#41a1a3,#519a9c,#5e9495,#6a8d8e,#758687,#7f807f)"></i><i style="left:118px;width:2px;background:linear-gradient(180deg,#00e6ff,#00e1fd,#00dbf6,#00d6ef,#00d1e8,#00cce1,#00c6da,#00c1d3,#00bccd,#00b7c6,#00b2bf,#00acb8,#0ba7b1,#31a1aa,#449ca3,#53969c,#5f9195,#6b8b8e,#758587,#7f807f)"></i><i style="left:120px;width:2px;background:linear-gradient(180deg,#00d3ff,#00cffd,#00cbf7,#00c7f0,#00c2e9,#00bee2,#00badb,#00b6d4,#00b1cd,#00adc6,#00a9bf,#00a5b8,#1fa0b1,#379caa,#4797a3,#55929c,#608e95,#6b898e,#768487,#7f807f)"></i><i style="left:122px;width:2px;background:linear-gradient(180deg,#00c1ff,#00befe,#00baf7,#00b7f0,#00b4e9,#00b1e2,#00addb,#00aad4,#00a7cd,#00a3c7,#00a0c0,#009db9,#2999b2,#3b96aa,#4a92a3,#568e9c,#628b95,#6c878e,#768387,#7f807f)"></i><i style="left:124px;width:2px;background:linear-gradient(180deg,#00afff,#00acff,#00aaf8,#00a8f1,#00a5ea,#00a3e3,#00a1dc,#009ed5,#009cce,#009ac7,#0097c0,#1795b9,#3092b2,#4090ab,#4d8da4,#588a9c,#638895,#6d858e,#768287,#7f807f)"></i><i style="left:126px;width:2px;background:linear-gradient(180deg,#009cff,#009bff,#009af8,#0098f1,#0097ea,#0095e3,#0094dc,#0093d5,#0091ce,#0090c7,#008fc0,#248db9,#368bb2,#438aab,#4f88a4,#5a869d,#648595,#6d838e,#778187,#7f807f)"></i><i style="left:128px;width:2px;background:linear-gradient(180deg,#008aff,#0089ff,#0089f9,#0089f2,#0088eb,#0088e4,#0088dd,#0087d6,#0087cf,#0086c8,#1786c0,#2c85b9,#3a84b2,#4684ab,#5183a4,#5b839d,#658296,#6e818e,#778087,#7f807f)"></i><i style="left:130px;width:2px;background:linear-gradient(180deg,#0077ff,#0078ff,#0079f9,#0079f2,#007aeb,#007ae4,#007bdd,#007cd6,#007ccf,#007cc8,#247dc1,#337dba,#3f7eb2,#497eab,#537ea4,#5d7f9d,#667f96,#6e7f8e,#777f87,#7f807f)"></i><i style="left:132px;width:2px;background:linear-gradient(180deg,#0065ff,#0067ff,#0068f9,#006af2,#006beb,#006de4,#006edd,#0070d6,#0071cf,#1d73c8,#2c74c1,#3875ba,#4277b3,#4c78ab,#5579a4,#5e7b9d,#677c96,#6f7d8e,#777e87,#7f807f)"></i><i style="left:134px;width:2px;background:linear-gradient(180deg,#0052ff,#0055ff,#0058f9,#005af2,#005deb,#005fe4,#0061dd,#0064d6,#1766cf,#2769c8,#326bc1,#3c6dba,#4570b3,#4e72ac,#5774a4,#5f779d,#687996,#707b8e,#787d87,#7f807f)"></i><i style="left:136px;width:2px;background:linear-gradient(180deg,#003fff,#0043ff,#0047fa,#004af3,#004eec,#0051e5,#0055de,#1458d7,#235bcf,#2d5fc8,#3762c1,#4065ba,#4869b3,#516cac,#596fa5,#61739d,#687696,#70798f,#787c87,#7f807f)"></i><i style="left:138px;width:2px;background:linear-gradient(180deg,#002bff,#0031ff,#0035fa,#003af3,#003fec,#0043e5,#1448de,#204cd7,#2a50d0,#3355c9,#3b59c1,#435dba,#4b62b3,#5366ac,#5a6aa5,#626f9d,#697396,#71778f,#787b87,#7f807f)"></i><i style="left:140px;width:2px;background:linear-gradient(180deg,#001eff,#0022ff,#0028fa,#002ef3,#0033ec,#1038e5,#1c3ede,#2543d7,#2e48d0,#364dc9,#3d52c2,#4557ba,#4d5cb3,#5462ac,#5b67a5,#636c9d,#6a7196,#71768f,#787b87,#7f807f)"></i><i style="left:142px;width:2px;background:linear-gradient(180deg,#001eff,#001eff,#0024fa,#002af3,#0030ec,#1336e5,#1d3bde,#2641d7,#2f46d0,#364bc9,#3e51c2,#4556ba,#4d5bb3,#5460ac,#5c66a5,#636b9d,#6a7096,#71758f,#787a87,#7f807f)"></i><i style="left:144px;width:2px;background:linear-gradient(180deg,#001eff,#001eff,#0021fa,#0027f3,#002dec,#1533e5,#1f39de,#273ed7,#2f44d0,#3749c9,#3f4fc2,#4654ba,#4d5ab3,#555fac,#5c65a5,#636a9d,#6a6f96,#71758f,#787a87,#7f807f)"></i><i style="left:146px;width:2px;background:linear-gradient(180deg,#001eff,#001eff,#001dfa,#0024f3,#092aec,#1730e5,#2036de,#283cd7,#3042d0,#3848c9,#3f4dc2,#4653ba,#4e58b3,#555eac,#5c64a5,#63699e,#6a6f96,#71748f,#787a87,#7f807f)"></i><i style="left:148px;width:2px;background:linear-gradient(180deg,#001eff,#001eff,#001dfa,#0021f3,#0d27ec,#182de5,#2134de,#293ad7,#3140d0,#3846c9,#404bc2,#4751bb,#4e57b3,#555dac,#5c63a5,#63699e,#6a6e96,#71748f,#787a87,#7f807f)"></i><i style="left:150px;width:2px;background:linear-gradient(180deg,#001eff,#001eff,#001dfa,#001df3,#0f24ec,#1a2be5,#2231de,#2a37d7,#323ed0,#3944c9,#404ac2,#4750bb,#4e56b3,#555cac,#5d62a5,#64689e,#6b6e96,#72748f,#797a87,#7f807f)"></i><i style="left:152px;width:2px;background:linear-gradient(180deg,#001eff,#001eff,#001dfa,#001cf3,#1121ec,#1b28e5,#232fde,#2b35d7,#323bd0,#3942c9,#4148c2,#484ebb,#4f55b3,#565bac,#5d61a5,#64679e,#6b6d96,#72738f,#797987,#7f807f)"></i><i style="left:154px;width:2px;background:linear-gradient(180deg,#001eff,#001eff,#001dfa,#001cf3,#131eec,#1c25e5,#242cde,#2b33d7,#3339d0,#3a40c9,#4146c2,#484dbb,#4f53b3,#565aac,#5d60a5,#64669e,#6b6d96,#72738f,#797987,#7f807f)"></i><i style="left:156px;width:2px;background:linear-gradient(180deg,#001eff,#001eff,#001dfa,#051cf3,#141aec,#1d22e5,#2529de,#2c30d7,#3337d0,#3a3ec9,#4245c2,#494bbb,#4f52b3,#5658ac,#5d5fa5,#64659e,#6b6c96,#72738f,#797987,#7f807f)"></i><i style="left:158px;width:2px;background:linear-gradient(180deg,#001eff,#001eff,#001dfa,#081cf3,#151aec,#1e1fe5,#2527de,#2d2ed7,#3435d0,#3b3cc9,#4243c2,#494abb,#5050b3,#5757ac,#5e5ea5,#64659e,#6b6b96,#72728f,#797987,#7f807f)"></i><i style="left:160px;width:2px;background:linear-gradient(180deg,#001eff,#001eff,#001dfa,#0d1cf3,#181aec,#201ee5,#2726de,#2f2dd7,#3634d0,#3d3bc9,#4342c2,#4a49bb,#5150b3,#5857ac,#5e5ea5,#65649e,#6c6b96,#72728f,#797987,#7f807f)"></i><i style="left:162px;width:2px;background:linear-gradient(180deg,#001eff,#001eff,#021dfa,#131bf3,#1c1aec,#231ee5,#2b25de,#312dd7,#3834d0,#3f3bc9,#4542c2,#4c49bb,#5250b3,#5957ac,#5f5ea5,#66649e,#6c6b96,#73728f,#797987,#7f807f)"></i><i style="left:164px;width:2px;background:linear-gradient(180deg,#001eff,#001eff,#0e1cfa,#181bf3,#201aec,#271de5,#2e25de,#342dd7,#3b34d0,#413bc9,#4742c2,#4e49bb,#5450b3,#5a57ac,#615da5,#67649e,#6d6b96,#73728f,#797987,#7f807f)"></i><i style="left:166px;width:2px;background:linear-gradient(180deg,#001eff,#041dff,#131cfa,#1c1bf3,#2319ec,#2a1de5,#3125de,#372dd7,#3d34d0,#433bc9,#4942c2,#5049bb,#5650b3,#5c57ac,#625da5,#68649e,#6e6b96,#74728f,#7a7987,#7f807f)"></i><i style="left:168px;width:2px;background:linear-gradient(180deg,#1a1dff,#201cff,#261bfa,#2c19f3,#3217ec,#381ce5,#3d24de,#432cd7,#4833d0,#4d3ac9,#5241c2,#5748bb,#5d4fb3,#6256ac,#675da5,#6c649e,#716b96,#76728f,#7b7987,#7f807f)"></i><i style="left:170px;width:2px;background:linear-gradient(180deg,#301aff,#3419ff,#3917fa,#3e15f3,#4312ec,#471ae5,#4b23de,#502bd7,#5432d0,#583ac9,#5c41c2,#6048ba,#644fb3,#6856ac,#6c5da5,#70649d,#746b96,#78728f,#7c7987,#7f807f)"></i><i style="left:172px;width:2px;background:linear-gradient(180deg,#4416ff,#4714ff,#4b11fa,#4f0df3,#520bec,#5618e5,#5921de,#5d2ad7,#6031d0,#6339c9,#6640c1,#6947ba,#6c4eb3,#6f56ac,#725da5,#75649d,#776b96,#7a728f,#7d7987,#7f807f)"></i><i style="left:174px;width:2px;background:linear-gradient(180deg,#570bff,#5a08ff,#5d00fa,#5f00f3,#6200ec,#6515e5,#671fde,#6928d7,#6c30d0,#6e38c8,#703fc1,#7247ba,#744eb3,#7655ac,#775ca5,#79639d,#7b6a96,#7c728f,#7e7987,#7f807f)"></i><i style="left:176px;width:2px;background:linear-gradient(180deg,#6b00ff,#6c00ff,#6e00f9,#7000f3,#7200ec,#7310e4,#741cdd,#7626d6,#772fcf,#7837c8,#793fc1,#7a46ba,#7b4db3,#7c55ac,#7d5ca4,#7e639d,#7e6a96,#7f718f,#7f7887,#7f807f)"></i><i style="left:178px;width:2px;background:linear-gradient(180deg,#7f00ff,#7f00ff,#8000f9,#8000f2,#8100eb,#8200e4,#8219dd,#8224d6,#832dcf,#8336c8,#833ec1,#8345ba,#834db3,#8354ac,#825ca4,#82639d,#826a96,#81718e,#807887,#7f807f)"></i><i style="left:180px;width:2px;background:linear-gradient(180deg,#9200ff,#9100ff,#9100f9,#9100f2,#9000eb,#9000e4,#8f14dd,#8f21d6,#8e2bcf,#8d34c8,#8c3dc1,#8b45ba,#8a4cb3,#8954ab,#885ba4,#86639d,#856a96,#83718e,#817887,#7f807f)"></i><i style="left:182px;width:2px;background:linear-gradient(180deg,#a500ff,#a400ff,#a300f9,#a100f2,#a000eb,#9e00e4,#9d0cdd,#9b1ed6,#9929cf,#9833c8,#963bc1,#9444ba,#924cb2,#8f53ab,#8d5ba4,#8b629d,#886a96,#85718e,#837887,#7f807f)"></i><i style="left:184px;width:2px;background:linear-gradient(180deg,#b900ff,#b600ff,#b400f9,#b200f2,#af00eb,#ad00e4,#aa00dd,#a81ad6,#a527cf,#a231c8,#9f3ac1,#9c43b9,#994bb2,#9653ab,#935ba4,#8f629d,#8b6a96,#88718e,#847887,#7f807f)"></i><i style="left:186px;width:2px;background:linear-gradient(180deg,#cc00ff,#c900ff,#c500f8,#c200f1,#bf00ea,#bb00e3,#b700dc,#b414d5,#b024ce,#ac2fc7,#a939c0,#a542b9,#a04ab2,#9c52ab,#985aa4,#93629d,#8f6996,#8a718e,#857887,#7f807f)"></i><i style="left:188px;width:2px;background:linear-gradient(180deg,#df00ff,#db00ff,#d700f8,#d200f1,#ce00ea,#c900e3,#c500dc,#c009d5,#bb20ce,#b72dc7,#b237c0,#ad41b9,#a849b2,#a352ab,#9d5aa4,#98629d,#926995,#8c718e,#867887,#7f807f)"></i><i style="left:190px;width:2px;background:linear-gradient(180deg,#f300ff,#ed00fe,#e800f7,#e300f1,#dd00ea,#d800e3,#d200dc,#cc00d5,#c71cce,#c12ac7,#bb36c0,#b540b9,#af49b2,#a951ab,#a359a4,#9c619d,#956995,#8e718e,#877887,#7f807f)"></i><i style="left:192px;width:2px;background:linear-gradient(180deg,#ff00ff,#ff00fe,#f900f7,#f300f0,#ec00e9,#e600e2,#df00db,#d900d5,#d216ce,#cb28c7,#c434c0,#be3eb9,#b648b2,#af50ab,#a859a4,#a0619c,#996995,#91708e,#887887,#7f807f)"></i><i style="left:194px;width:2px;background:linear-gradient(180deg,#ff00ff,#ff00fe,#ff00f7,#ff00f0,#fb00e9,#f400e2,#ec00db,#e500d4,#dd0dcd,#d524c6,#cd32bf,#c53db8,#bd47b1,#b550aa,#ad58a3,#a4619c,#9c6995,#93708e,#897887,#7f807f)"></i><i style="left:196px;width:2px;background:linear-gradient(180deg,#ff00f7,#ff00f0,#ff00ea,#ff00e4,#fd00de,#f500d7,#ee00d1,#e600cb,#de0cc5,#d624bf,#cf32b9,#c63db2,#be47ac,#b650a6,#ae58a0,#a56199,#9c6993,#93708c,#897886,#7f807f)"></i><i style="left:198px;width:2px;background:linear-gradient(180deg,#ff00e6,#ff00e1,#ff00db,#ff00d6,#fd00d1,#f500cb,#ee00c6,#e600c1,#de0dbb,#d624b6,#cf32b1,#c63dab,#be47a6,#b650a1,#ae589b,#a56196,#9c6990,#93708b,#897885,#7f807f)"></i><i style="left:200px;width:2px;background:linear-gradient(180deg,#ff00d6,#ff00d1,#ff00cd,#ff00c8,#fd00c4,#f500bf,#ee00bb,#e600b6,#de0db2,#d625ad,#cf32a9,#c73da5,#be47a0,#b6509b,#ae5897,#a56192,#9c698e,#937089,#897884,#7f807f)"></i><i style="left:202px;width:2px;background:linear-gradient(180deg,#ff00c5,#ff00c2,#ff00be,#ff00ba,#fd00b7,#f600b3,#ee00af,#e600ac,#de0ea8,#d725a5,#cf32a1,#c73d9e,#be479a,#b65096,#ae5893,#a5618f,#9c698b,#937087,#897883,#7f807f)"></i><i style="left:204px;width:2px;background:linear-gradient(180deg,#ff00b5,#ff00b2,#ff00af,#ff00ac,#fd00a9,#f600a7,#ee00a4,#e600a1,#de0f9f,#d7259c,#cf3299,#c73d97,#be4794,#b65091,#ae588e,#a5618b,#9c6988,#937085,#897883,#7f807f)"></i><i style="left:206px;width:2px;background:linear-gradient(180deg,#ff00a4,#ff00a2,#ff00a0,#ff009e,#fd009c,#f6009a,#ee0099,#e60097,#de0f95,#d72593,#cf3291,#c73d90,#be478e,#b6508c,#ae588a,#a56188,#9c6986,#937084,#897882,#7f807f)"></i><i style="left:208px;width:2px;background:linear-gradient(180deg,#ff0093,#ff0092,#ff0091,#ff0090,#fd008f,#f6008e,#ee008d,#e6008c,#de108b,#d7258a,#cf3289,#c73d88,#be4787,#b65086,#ae5885,#a56184,#9c6983,#937082,#897881,#7f807f)"></i><i style="left:210px;width:2px;background:linear-gradient(180deg,#ff0082,#ff0082,#ff0082,#ff0081,#fd0081,#f60082,#ee0082,#e60082,#de1082,#d72582,#cf3382,#c73d81,#be4781,#b65081,#ae5981,#a56181,#9c6980,#937080,#897880,#7f807f)"></i><i style="left:212px;width:2px;background:linear-gradient(180deg,#ff0071,#ff0071,#ff0072,#ff0073,#fd0074,#f60075,#ee0076,#e60077,#de1178,#d72679,#cf337a,#c73d7a,#be477b,#b6507c,#ae597d,#a5617d,#9c697e,#93707e,#89787f,#7f807f)"></i><i style="left:214px;width:2px;background:linear-gradient(180deg,#ff005f,#ff0061,#ff0062,#ff0064,#fd0066,#f60068,#ee006a,#e6006c,#de116e,#d72670,#cf3371,#c73d73,#be4775,#b65076,#ae5978,#a5617a,#9c697b,#93707d,#89787e,#7f807f)"></i><i style="left:216px;width:2px;background:linear-gradient(180deg,#ff004c,#ff004f,#ff0052,#ff0055,#fd0058,#f6005b,#ee005e,#e60061,#de1164,#d72667,#cf3369,#c73e6c,#be476f,#b65071,#ae5974,#a56176,#9c6979,#93707b,#89787d,#7f807f)"></i><i style="left:218px;width:2px;background:linear-gradient(180deg,#ff0037,#ff003c,#ff0040,#ff0044,#fd0049,#f6004d,#ee0052,#e60056,#df115a,#d7265d,#cf3361,#c73e65,#be4768,#b6506c,#ae596f,#a56173,#9c6976,#937079,#89787c,#7f807f)"></i><i style="left:220px;width:2px;background:linear-gradient(180deg,#ff001d,#ff0025,#ff002c,#ff0032,#fd0039,#f6003f,#ee0045,#e6004a,#df124f,#d72654,#cf3359,#c73e5d,#be4762,#b65066,#ae596b,#a5616f,#9c6973,#937077,#89787b,#7f807f)"></i><i style="left:222px;width:2px;background:linear-gradient(180deg,#ff0000,#ff0010,#ff001d,#ff0026,#fd002f,#f60036,#ee003d,#e60043,#df1249,#d7264f,#cf3354,#c73e59,#be475e,#b65063,#ae5968,#a5616d,#9c6972,#937076,#89787b,#7f807f)"></i><i style="left:224px;width:2px;background:linear-gradient(180deg,#ff0000,#ff0000,#ff0000,#ff0017,#fd0024,#f6002d,#ee0035,#e6003c,#df1243,#d72649,#cf334f,#c73e55,#be475b,#b65060,#ae5966,#a5616b,#9c6970,#937075,#89787a,#7f807f)"></i><i style="left:226px;width:2px;background:linear-gradient(180deg,#ff0000,#ff0000,#ff0000,#ff0000,#fd0015,#f60023,#ee002d,#e60035,#df123d,#d72644,#cf334b,#c73e51,#be4757,#b6505d,#ae5963,#a56169,#9c696f,#937074,#89787a,#7f807f)"></i><i style="left:228px;width:2px;background:linear-gradient(180deg,#ff0000,#ff0000,#ff0000,#ff0000,#fd0000,#f60015,#ee0024,#e6002e,#df1237,#d7263f,#cf3346,#c73e4d,#be4754,#b6505a,#ae5961,#a56167,#9c696d,#937073,#89787a,#7f807f)"></i><i style="left:230px;width:2px;background:linear-gradient(180deg,#ff0000,#ff0000,#ff0000,#ff0000,#fd0000,#f60000,#ee0018,#e60026,#df1230,#d72639,#cf3341,#c73e49,#be4750,#b65057,#ae595e,#a56165,#9c696c,#937073,#897879,#7f807f)"></i><i style="left:232px;width:2px;background:linear-gradient(180deg,#ff0000,#ff0000,#ff0000,#ff0000,#fd0000,#f60000,#ee0000,#e6001c,#df1229,#d72633,#cf333c,#c73e45,#bf474d,#b65054,#ae595c,#a56163,#9c696a,#937072,#897879,#7f807f)"></i></div>
<div class="sunk" style="left:553px;top:298px;width:12.5px;height:12.5px"></div>
<span class="t" style="left:570.6px;top:298.7px;font-size:12px;transform-origin:0 0;transform:scaleX(0.913);">Zoom</span>
<div style="left:615.5px;top:290px;width:175.5px;height:27.5px;background:#808080;border:2px solid #2a2a2a"></div>
<div class="btn" style="left:621px;top:295px;width:39px;height:19px;"><span class="t" style="left:0;top:0.5px;width:100%;text-align:center;line-height:17px;font-size:12px;transform:scaleX(0.905);">Inp</span></div>
<div class="btn" style="left:665px;top:295px;width:39px;height:19px;"><span class="t" style="left:0;top:0.5px;width:100%;text-align:center;line-height:17px;font-size:12px;transform:scaleX(0.856);">I&gt;M</span></div>
<div class="btn" style="left:708px;top:295px;width:38px;height:19px;"><span class="t" style="left:0;top:0.5px;width:100%;text-align:center;line-height:17px;font-size:12px;transform:scaleX(0.853);">Outp</span></div>
<div class="btn y" style="left:750px;top:295px;width:38px;height:19px;"><span class="t" style="left:0;top:0.5px;width:100%;text-align:center;line-height:17px;font-size:12px;transform:scaleX(1.101);font-weight:bold;">O&gt;M</span></div>
<div class="btn" style="left:553px;top:317px;width:48px;height:18px;"><span class="t" style="left:0;top:0.5px;width:100%;text-align:center;line-height:16px;font-size:12px;transform:scaleX(0.926);">Z-Out</span></div>
<span class="t" style="left:630.6px;top:324px;font-size:12px;transform-origin:0 0;transform:scaleX(0.871);">Black Pt. Comp.</span>
<div class="dd" style="left:709px;top:320px;width:79px;height:19px;background:#fff;"><span class="t" style="left:4px;top:1.3px;line-height:17px;font-size:12px;transform-origin:0 0;transform:scaleX(0.851);">Both</span><div class="ar"></div></div>
<div style="left:553px;top:341px;width:239.5px;height:26.5px;background:#808080;border:2px solid #333"></div>
<div class="dd" style="left:554px;top:343px;width:234px;height:20px;background:#fff;"><span class="t" style="left:5px;top:1.8px;line-height:18px;font-size:12px;transform-origin:0 0;transform:scaleX(0.970);font-weight:bold;">xy Chromaticity (Saturation map)</span><div class="ar"></div></div>
<div class="fr" style="left:552.5px;top:369.5px;width:240.5px;height:128px"></div>
<div class="btn dis" style="left:559px;top:375px;width:79px;height:22px;"><span class="t" style="left:0;top:-0.5px;width:100%;text-align:center;line-height:20px;font-size:12px;transform:scaleX(0.887);">Reset scale</span></div>
<div class="btn dis" style="left:642px;top:375px;width:76px;height:22px;"><span class="t" style="left:0;top:-0.5px;width:100%;text-align:center;line-height:20px;font-size:12px;transform:scaleX(0.895);">Reset view</span></div>
<div class="btn dis" style="left:723px;top:375px;width:67px;height:22px;"><span class="t" style="left:0;top:-0.5px;width:100%;text-align:center;line-height:20px;font-size:12px;transform:scaleX(0.942);">Top view</span></div>
<div class="sunk" style="left:558.5px;top:404px;width:12.5px;height:12.5px"></div>
<svg style="left:560.5px;top:406px" width="9" height="9" viewBox="0 0 9 9"><path d="M1 3.5l2.5 2.5L8 1.5" stroke="#000" stroke-width="2" fill="none"/></svg>
<span class="t" style="left:576.75px;top:404px;font-size:12px;transform-origin:0 0;transform:scaleX(0.918);">Wavelth</span>
<div class="dd" style="left:628px;top:402px;width:161px;height:19px;background:#fff;"><span class="t" style="left:2px;top:1.3px;line-height:17px;font-size:12px;transform-origin:0 0;transform:scaleX(0.883);">Normal/gamut boundaries</span><div class="ar"></div></div>
<div class="fr" style="left:552.5px;top:468px;width:87.5px;height:30px"></div>
<div class="btn" style="left:558px;top:472px;width:77px;height:21px;"><span class="t" style="left:0;top:-0.5px;width:100%;text-align:center;line-height:19px;font-size:12px;transform:scaleX(1.010);font-weight:bold;">Print Test</span></div>
<div class="fr" style="left:552.5px;top:496.5px;width:240.5px;height:31px"></div>
<div class="sunk" style="left:558px;top:503.5px;width:230.5px;height:18.5px;background:#f0f0f0"><span class="t" style="left:0;top:.4px;width:100%;text-align:center;line-height:16px;font-size:12px;transform:scaleX(0.893)">not selected</span></div>
<div class="fr" style="left:558.5px;top:532px;width:143px;height:55.5px"></div>
<span class="t" style="left:569.25px;top:538.5px;font-size:12px;font-weight:bold;transform-origin:0 0;transform:scaleX(0.977);">Display A</span>
<div class="btn" style="left:650px;top:536px;width:46px;height:22px;"><span class="t" style="left:0;top:0.5px;width:100%;text-align:center;line-height:20px;font-size:12.5px;transform:scaleX(0.973);font-weight:bold;">View</span></div>
<div class="dd" style="left:564px;top:563px;width:38px;height:19px;background:#fff;"><span class="t" style="left:2.5px;top:1.3px;line-height:17px;font-size:12px;transform-origin:0 0;transform:scaleX(0.890);">1</span><div class="ar"></div></div>
<span class="t" style="left:611px;top:567px;font-size:12px;transform-origin:0 0;transform:scaleX(0.867);">IN</span>
<span class="t" style="left:628.6px;top:567px;font-size:12px;transform-origin:0 0;transform:scaleX(0.829);">OUT</span>
<div class="dd" style="left:659px;top:563px;width:37px;height:19px;background:#fff;"><span class="t" style="left:3px;top:1.3px;line-height:17px;font-size:12px;transform-origin:0 0;transform:scaleX(0.890);">3</span><div class="ar"></div></div>
<div class="fr" style="left:558.5px;top:592px;width:143px;height:55.5px"></div>
<span class="t" style="left:569.25px;top:599px;font-size:12px;font-weight:bold;transform-origin:0 0;transform:scaleX(0.969);">Display B</span>
<div class="btn" style="left:651px;top:597px;width:46px;height:22px;"><span class="t" style="left:0;top:0.5px;width:100%;text-align:center;line-height:20px;font-size:12.5px;transform:scaleX(0.973);font-weight:bold;">View</span></div>
<div class="dd" style="left:564px;top:623px;width:38px;height:19px;background:#fff;"><span class="t" style="left:2.5px;top:1.3px;line-height:17px;font-size:12px;transform-origin:0 0;transform:scaleX(0.890);">2</span><div class="ar"></div></div>
<span class="t" style="left:611px;top:627px;font-size:12px;transform-origin:0 0;transform:scaleX(0.867);">IN</span>
<span class="t" style="left:628.6px;top:627px;font-size:12px;transform-origin:0 0;transform:scaleX(0.829);">OUT</span>
<div class="dd" style="left:660px;top:623px;width:37px;height:19px;background:#fff;"><span class="t" style="left:3px;top:1.3px;line-height:17px;font-size:12px;transform-origin:0 0;transform:scaleX(0.890);">4</span><div class="ar"></div></div>
<div class="btn" style="left:720px;top:532px;width:69px;height:22px;"><span class="t" style="left:0;top:-0.5px;width:100%;text-align:center;line-height:20px;font-size:12px;transform:scaleX(0.932);">Help</span></div>
<div class="btn" style="left:720px;top:564px;width:69px;height:22px;"><span class="t" style="left:0;top:-0.5px;width:100%;text-align:center;line-height:20px;font-size:12px;transform:scaleX(0.850);">Exit</span></div>
<svg style="left:709px;top:596px" width="80" height="48" viewBox="0 0 80 48"><defs><linearGradient id="lb" x1="0" x2="1" y1="0" y2="0"><stop offset="0" stop-color="#00005a"/><stop offset="1" stop-color="#0000c8"/></linearGradient><linearGradient id="lg" x1="0" x2="1" y1="0" y2="0"><stop offset="0" stop-color="#003000"/><stop offset="1" stop-color="#0a8c20"/></linearGradient></defs><rect width="80" height="48" fill="url(#lb)"/><path d="M1.4 0H80V11.3Z" fill="url(#lg)"/><path d="M1.4 0L80 11.3V17.5Z" fill="#fff"/><path d="M1.4 0L80 17.5V23.1Z" fill="#cc3400"/><path d="M1.4 0L80 23.1V26.3Z" fill="#fff"/><path d="M1.4 0L80 26.3V28.8Z" fill="#a020a8"/><path d="M1.4 0L80 28.8V31Z" fill="#fff"/><path d="M4.5 7.6C9 6 21 10 31.3 20.3L9.8 28.2C5 24 2.8 13 4.5 7.6Z" fill="#ffffc4"/><text x="2.5" y="44.3" font-family="Liberation Serif, serif" font-style="italic" font-size="18" fill="#fff" stroke="#fff" stroke-width=".35" textLength="76.5" lengthAdjust="spacingAndGlyphs">Gamutvision</text></svg>
<span class="t" style="left:8.4px;top:578.8px;font-size:12px;font-weight:bold;">1</span>
<span class="t" style="left:8.4px;top:631.8px;font-size:12px;font-weight:bold;">2</span>
<span class="t" style="left:535.5px;top:578.8px;font-size:12px;font-weight:bold;">3</span>
<span class="t" style="left:535.5px;top:631.8px;font-size:12px;font-weight:bold;">4</span>
<div class="dd" style="left:20px;top:575px;width:252px;height:19px;background:#ffffd8;"><span class="t" style="left:2.7px;top:1.3px;line-height:17px;font-size:12px;transform-origin:0 0;transform:scaleX(0.901);">AdobeRGB1998.icc</span><div class="ar"></div></div>
<div class="dd" style="left:278px;top:575px;width:252px;height:19px;background:#f0f0f0;"><span class="t" style="left:4px;top:1.3px;line-height:17px;font-size:12px;transform-origin:0 0;transform:scaleX(0.890);">Browse...</span><div class="ar"></div></div>
<div class="dd" style="left:20px;top:628px;width:252px;height:20px;background:#e0ffe0;"><span class="t" style="left:2.7px;top:1.3px;line-height:18px;font-size:12px;transform-origin:0 0;transform:scaleX(0.885);">Acer XV272U_standard.icm</span><div class="ar"></div></div>
<div class="dd" style="left:278px;top:628px;width:252px;height:20px;background:#f0f0f0;"><span class="t" style="left:4px;top:1.3px;line-height:18px;font-size:12px;transform-origin:0 0;transform:scaleX(0.890);">Browse...</span><div class="ar"></div></div>
<div style="left:20px;top:595.5px;width:223px;height:31.5px;background:#4a7fcc;border-left:1.5px solid #000;border-right:1px solid #000"></div>
<div class="btn y" style="left:25px;top:601px;width:47px;height:24px;"><span class="t" style="left:0;top:-0.5px;width:100%;text-align:center;line-height:22px;font-size:12.5px;transform:scaleX(0.959);font-weight:bold;">View</span></div>
<div class="dd" style="left:96px;top:602px;width:140px;height:19px;background:#fffff0;"><span class="t" style="left:2.5px;top:1.3px;line-height:17px;font-size:12px;transform-origin:0 0;transform:scaleX(0.882);">None (or Print Test)</span><div class="ar"></div></div>
<span class="t" style="left:250.8px;top:606px;font-size:12px;transform-origin:0 0;transform:scaleX(0.874);">Rendering</span>
<div style="left:308px;top:595.5px;width:222px;height:31.5px;background:#808080;border-left:1px solid #000;border-right:1.5px solid #404040"></div>
<div class="dd" style="left:312px;top:602px;width:142px;height:20px;background:#f0f0f0;"><span class="t" style="left:4px;top:1.3px;line-height:18px;font-size:12px;transform-origin:0 0;transform:scaleX(0.890);">Perceptual</span><div class="ar"></div></div>
<div class="btn" style="left:480px;top:601px;width:46px;height:23px;"><span class="t" style="left:0;top:0.5px;width:100%;text-align:center;line-height:21px;font-size:12.5px;transform:scaleX(0.959);font-weight:bold;">View</span></div>
<svg style="left:6px;top:598px" width="12" height="27" viewBox="0 0 12 27"><rect width="12" height="27" fill="#e2e2e2"/><path d="M5 0h3v19h3.6L6.4 25.8 2 19h3z" fill="#464646"/></svg>
<svg style="left:532px;top:598px" width="12" height="27" viewBox="0 0 12 27"><rect width="12" height="27" fill="#e2e2e2"/><path d="M5 0h3v19h3.6L6.4 25.8 2 19h3z" fill="#464646"/></svg>
<div style="left:0;top:0;width:797px;height:652px;border:1px solid #0078d7"></div>
</div></body></html>
